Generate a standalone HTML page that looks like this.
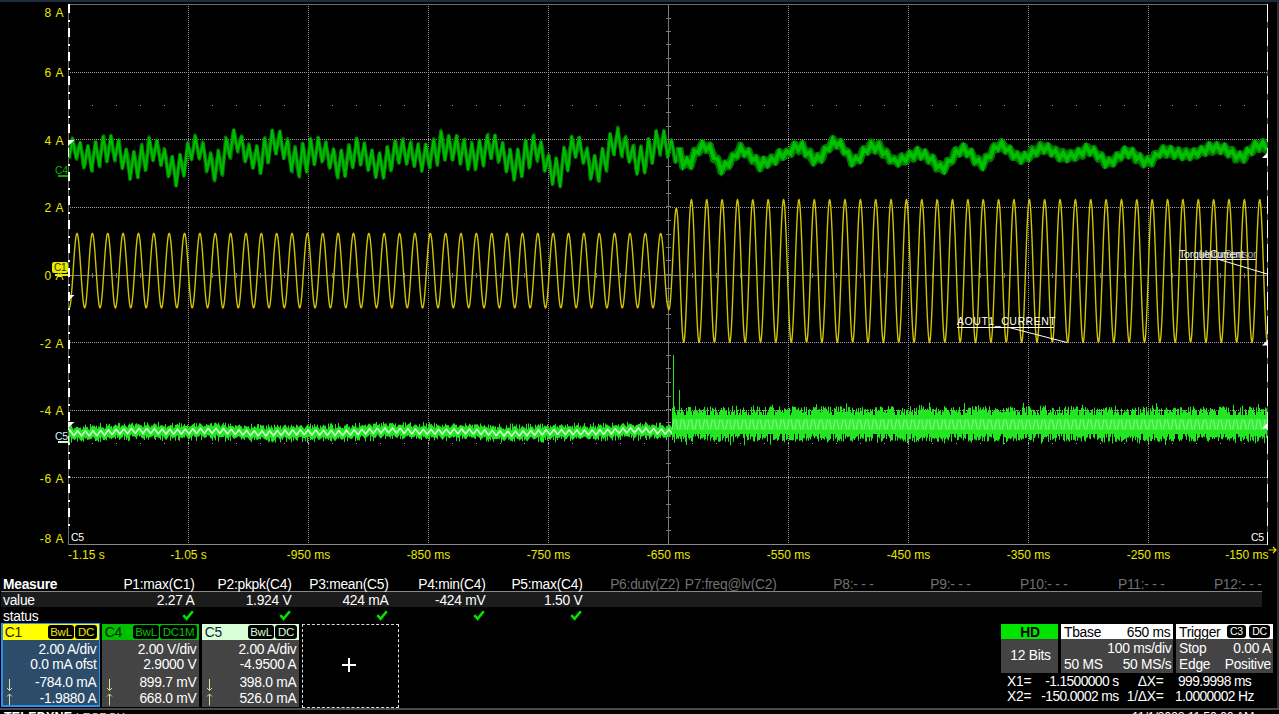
<!DOCTYPE html>
<html><head><meta charset="utf-8">
<style>
*{margin:0;padding:0;box-sizing:border-box}
html,body{width:1279px;height:714px;background:#000;overflow:hidden}
body{position:relative;font-family:"Liberation Sans",sans-serif;color:#fff}
.a{position:absolute;white-space:nowrap;line-height:1;letter-spacing:-0.25px}
.yl{color:#e6e600;font-size:12.5px}
.r{text-align:right}
.c{text-align:center}
svg{position:absolute;left:0;top:0}
.mh{font-size:13px;color:#fff}
.mg{color:#6a6a6a}
.box{position:absolute;top:623px;height:85px}
.hd{position:absolute;left:0;right:0;top:0;height:16px}
.bd{position:absolute;left:0;right:0;top:16px;bottom:0;background:#444}
.bg{position:absolute;top:2px;height:14px;background:#000;border-radius:3px;font-size:11.5px;line-height:14px;text-align:center}
.t13{font-size:13px}
</style></head><body>
<div class="a" style="left:0;top:0;width:1279px;height:2px;background:#1e2d3d"></div>
<div class="a" style="left:1277px;top:2px;width:2px;height:706px;background:#2e2e2e"></div>
<svg width="1279" height="560" viewBox="0 0 1279 560" shape-rendering="crispEdges">
<line x1="70" y1="72.5" x2="1267" y2="72.5" stroke="#a0a0a0" stroke-width="1" stroke-dasharray="1 1"/>
<line x1="70" y1="139.5" x2="1267" y2="139.5" stroke="#a0a0a0" stroke-width="1" stroke-dasharray="1 1"/>
<line x1="70" y1="207.5" x2="1267" y2="207.5" stroke="#a0a0a0" stroke-width="1" stroke-dasharray="1 1"/>
<line x1="70" y1="342.5" x2="1267" y2="342.5" stroke="#a0a0a0" stroke-width="1" stroke-dasharray="1 1"/>
<line x1="70" y1="410.5" x2="1267" y2="410.5" stroke="#a0a0a0" stroke-width="1" stroke-dasharray="1 1"/>
<line x1="70" y1="477.5" x2="1267" y2="477.5" stroke="#a0a0a0" stroke-width="1" stroke-dasharray="1 1"/>
<line x1="188.5" y1="6" x2="188.5" y2="544" stroke="#a0a0a0" stroke-width="1" stroke-dasharray="1 1"/>
<line x1="308.5" y1="6" x2="308.5" y2="544" stroke="#a0a0a0" stroke-width="1" stroke-dasharray="1 1"/>
<line x1="428.5" y1="6" x2="428.5" y2="544" stroke="#a0a0a0" stroke-width="1" stroke-dasharray="1 1"/>
<line x1="548.5" y1="6" x2="548.5" y2="544" stroke="#a0a0a0" stroke-width="1" stroke-dasharray="1 1"/>
<line x1="788.5" y1="6" x2="788.5" y2="544" stroke="#a0a0a0" stroke-width="1" stroke-dasharray="1 1"/>
<line x1="908.5" y1="6" x2="908.5" y2="544" stroke="#a0a0a0" stroke-width="1" stroke-dasharray="1 1"/>
<line x1="1028.5" y1="6" x2="1028.5" y2="544" stroke="#a0a0a0" stroke-width="1" stroke-dasharray="1 1"/>
<line x1="1148.5" y1="6" x2="1148.5" y2="544" stroke="#a0a0a0" stroke-width="1" stroke-dasharray="1 1"/>
<rect x="92" y="105" width="1" height="1" fill="#a0a0a0"/>
<rect x="116" y="105" width="1" height="1" fill="#a0a0a0"/>
<rect x="140" y="105" width="1" height="1" fill="#a0a0a0"/>
<rect x="164" y="105" width="1" height="1" fill="#a0a0a0"/>
<rect x="188" y="105" width="1" height="1" fill="#a0a0a0"/>
<rect x="212" y="105" width="1" height="1" fill="#a0a0a0"/>
<rect x="236" y="105" width="1" height="1" fill="#a0a0a0"/>
<rect x="260" y="105" width="1" height="1" fill="#a0a0a0"/>
<rect x="284" y="105" width="1" height="1" fill="#a0a0a0"/>
<rect x="308" y="105" width="1" height="1" fill="#a0a0a0"/>
<rect x="332" y="105" width="1" height="1" fill="#a0a0a0"/>
<rect x="356" y="105" width="1" height="1" fill="#a0a0a0"/>
<rect x="380" y="105" width="1" height="1" fill="#a0a0a0"/>
<rect x="404" y="105" width="1" height="1" fill="#a0a0a0"/>
<rect x="428" y="105" width="1" height="1" fill="#a0a0a0"/>
<rect x="452" y="105" width="1" height="1" fill="#a0a0a0"/>
<rect x="476" y="105" width="1" height="1" fill="#a0a0a0"/>
<rect x="500" y="105" width="1" height="1" fill="#a0a0a0"/>
<rect x="524" y="105" width="1" height="1" fill="#a0a0a0"/>
<rect x="548" y="105" width="1" height="1" fill="#a0a0a0"/>
<rect x="572" y="105" width="1" height="1" fill="#a0a0a0"/>
<rect x="596" y="105" width="1" height="1" fill="#a0a0a0"/>
<rect x="620" y="105" width="1" height="1" fill="#a0a0a0"/>
<rect x="644" y="105" width="1" height="1" fill="#a0a0a0"/>
<rect x="668" y="105" width="1" height="1" fill="#a0a0a0"/>
<rect x="692" y="105" width="1" height="1" fill="#a0a0a0"/>
<rect x="716" y="105" width="1" height="1" fill="#a0a0a0"/>
<rect x="740" y="105" width="1" height="1" fill="#a0a0a0"/>
<rect x="764" y="105" width="1" height="1" fill="#a0a0a0"/>
<rect x="788" y="105" width="1" height="1" fill="#a0a0a0"/>
<rect x="812" y="105" width="1" height="1" fill="#a0a0a0"/>
<rect x="836" y="105" width="1" height="1" fill="#a0a0a0"/>
<rect x="860" y="105" width="1" height="1" fill="#a0a0a0"/>
<rect x="884" y="105" width="1" height="1" fill="#a0a0a0"/>
<rect x="908" y="105" width="1" height="1" fill="#a0a0a0"/>
<rect x="932" y="105" width="1" height="1" fill="#a0a0a0"/>
<rect x="956" y="105" width="1" height="1" fill="#a0a0a0"/>
<rect x="980" y="105" width="1" height="1" fill="#a0a0a0"/>
<rect x="1004" y="105" width="1" height="1" fill="#a0a0a0"/>
<rect x="1028" y="105" width="1" height="1" fill="#a0a0a0"/>
<rect x="1052" y="105" width="1" height="1" fill="#a0a0a0"/>
<rect x="1076" y="105" width="1" height="1" fill="#a0a0a0"/>
<rect x="1100" y="105" width="1" height="1" fill="#a0a0a0"/>
<rect x="1124" y="105" width="1" height="1" fill="#a0a0a0"/>
<rect x="1148" y="105" width="1" height="1" fill="#a0a0a0"/>
<rect x="1172" y="105" width="1" height="1" fill="#a0a0a0"/>
<rect x="1196" y="105" width="1" height="1" fill="#a0a0a0"/>
<rect x="1220" y="105" width="1" height="1" fill="#a0a0a0"/>
<rect x="1244" y="105" width="1" height="1" fill="#a0a0a0"/>
<rect x="92" y="443" width="1" height="1" fill="#a0a0a0"/>
<rect x="116" y="443" width="1" height="1" fill="#a0a0a0"/>
<rect x="140" y="443" width="1" height="1" fill="#a0a0a0"/>
<rect x="164" y="443" width="1" height="1" fill="#a0a0a0"/>
<rect x="188" y="443" width="1" height="1" fill="#a0a0a0"/>
<rect x="212" y="443" width="1" height="1" fill="#a0a0a0"/>
<rect x="236" y="443" width="1" height="1" fill="#a0a0a0"/>
<rect x="260" y="443" width="1" height="1" fill="#a0a0a0"/>
<rect x="284" y="443" width="1" height="1" fill="#a0a0a0"/>
<rect x="308" y="443" width="1" height="1" fill="#a0a0a0"/>
<rect x="332" y="443" width="1" height="1" fill="#a0a0a0"/>
<rect x="356" y="443" width="1" height="1" fill="#a0a0a0"/>
<rect x="380" y="443" width="1" height="1" fill="#a0a0a0"/>
<rect x="404" y="443" width="1" height="1" fill="#a0a0a0"/>
<rect x="428" y="443" width="1" height="1" fill="#a0a0a0"/>
<rect x="452" y="443" width="1" height="1" fill="#a0a0a0"/>
<rect x="476" y="443" width="1" height="1" fill="#a0a0a0"/>
<rect x="500" y="443" width="1" height="1" fill="#a0a0a0"/>
<rect x="524" y="443" width="1" height="1" fill="#a0a0a0"/>
<rect x="548" y="443" width="1" height="1" fill="#a0a0a0"/>
<rect x="572" y="443" width="1" height="1" fill="#a0a0a0"/>
<rect x="596" y="443" width="1" height="1" fill="#a0a0a0"/>
<rect x="620" y="443" width="1" height="1" fill="#a0a0a0"/>
<rect x="644" y="443" width="1" height="1" fill="#a0a0a0"/>
<rect x="668" y="443" width="1" height="1" fill="#a0a0a0"/>
<rect x="692" y="443" width="1" height="1" fill="#a0a0a0"/>
<rect x="716" y="443" width="1" height="1" fill="#a0a0a0"/>
<rect x="740" y="443" width="1" height="1" fill="#a0a0a0"/>
<rect x="764" y="443" width="1" height="1" fill="#a0a0a0"/>
<rect x="788" y="443" width="1" height="1" fill="#a0a0a0"/>
<rect x="812" y="443" width="1" height="1" fill="#a0a0a0"/>
<rect x="836" y="443" width="1" height="1" fill="#a0a0a0"/>
<rect x="860" y="443" width="1" height="1" fill="#a0a0a0"/>
<rect x="884" y="443" width="1" height="1" fill="#a0a0a0"/>
<rect x="908" y="443" width="1" height="1" fill="#a0a0a0"/>
<rect x="932" y="443" width="1" height="1" fill="#a0a0a0"/>
<rect x="956" y="443" width="1" height="1" fill="#a0a0a0"/>
<rect x="980" y="443" width="1" height="1" fill="#a0a0a0"/>
<rect x="1004" y="443" width="1" height="1" fill="#a0a0a0"/>
<rect x="1028" y="443" width="1" height="1" fill="#a0a0a0"/>
<rect x="1052" y="443" width="1" height="1" fill="#a0a0a0"/>
<rect x="1076" y="443" width="1" height="1" fill="#a0a0a0"/>
<rect x="1100" y="443" width="1" height="1" fill="#a0a0a0"/>
<rect x="1124" y="443" width="1" height="1" fill="#a0a0a0"/>
<rect x="1148" y="443" width="1" height="1" fill="#a0a0a0"/>
<rect x="1172" y="443" width="1" height="1" fill="#a0a0a0"/>
<rect x="1196" y="443" width="1" height="1" fill="#a0a0a0"/>
<rect x="1220" y="443" width="1" height="1" fill="#a0a0a0"/>
<rect x="1244" y="443" width="1" height="1" fill="#a0a0a0"/>
<rect x="69" y="275" width="1198" height="1" fill="#7a7a7a"/>
<rect x="668" y="5" width="1" height="539" fill="#7a7a7a"/>
<rect x="666" y="18" width="5" height="1" fill="#7a7a7a"/>
<rect x="666" y="31" width="5" height="1" fill="#7a7a7a"/>
<rect x="666" y="44" width="5" height="1" fill="#7a7a7a"/>
<rect x="666" y="58" width="5" height="1" fill="#7a7a7a"/>
<rect x="666" y="72" width="5" height="1" fill="#7a7a7a"/>
<rect x="666" y="85" width="5" height="1" fill="#7a7a7a"/>
<rect x="666" y="98" width="5" height="1" fill="#7a7a7a"/>
<rect x="666" y="112" width="5" height="1" fill="#7a7a7a"/>
<rect x="666" y="126" width="5" height="1" fill="#7a7a7a"/>
<rect x="666" y="139" width="5" height="1" fill="#7a7a7a"/>
<rect x="666" y="152" width="5" height="1" fill="#7a7a7a"/>
<rect x="666" y="166" width="5" height="1" fill="#7a7a7a"/>
<rect x="666" y="180" width="5" height="1" fill="#7a7a7a"/>
<rect x="666" y="193" width="5" height="1" fill="#7a7a7a"/>
<rect x="666" y="206" width="5" height="1" fill="#7a7a7a"/>
<rect x="666" y="220" width="5" height="1" fill="#7a7a7a"/>
<rect x="666" y="234" width="5" height="1" fill="#7a7a7a"/>
<rect x="666" y="247" width="5" height="1" fill="#7a7a7a"/>
<rect x="666" y="260" width="5" height="1" fill="#7a7a7a"/>
<rect x="666" y="274" width="5" height="1" fill="#7a7a7a"/>
<rect x="666" y="288" width="5" height="1" fill="#7a7a7a"/>
<rect x="666" y="301" width="5" height="1" fill="#7a7a7a"/>
<rect x="666" y="314" width="5" height="1" fill="#7a7a7a"/>
<rect x="666" y="328" width="5" height="1" fill="#7a7a7a"/>
<rect x="666" y="342" width="5" height="1" fill="#7a7a7a"/>
<rect x="666" y="355" width="5" height="1" fill="#7a7a7a"/>
<rect x="666" y="368" width="5" height="1" fill="#7a7a7a"/>
<rect x="666" y="382" width="5" height="1" fill="#7a7a7a"/>
<rect x="666" y="396" width="5" height="1" fill="#7a7a7a"/>
<rect x="666" y="409" width="5" height="1" fill="#7a7a7a"/>
<rect x="666" y="422" width="5" height="1" fill="#7a7a7a"/>
<rect x="666" y="436" width="5" height="1" fill="#7a7a7a"/>
<rect x="666" y="450" width="5" height="1" fill="#7a7a7a"/>
<rect x="666" y="463" width="5" height="1" fill="#7a7a7a"/>
<rect x="666" y="476" width="5" height="1" fill="#7a7a7a"/>
<rect x="666" y="490" width="5" height="1" fill="#7a7a7a"/>
<rect x="666" y="504" width="5" height="1" fill="#7a7a7a"/>
<rect x="666" y="517" width="5" height="1" fill="#7a7a7a"/>
<rect x="666" y="530" width="5" height="1" fill="#7a7a7a"/>
<rect x="92" y="273" width="1" height="5" fill="#7a7a7a"/>
<rect x="116" y="273" width="1" height="5" fill="#7a7a7a"/>
<rect x="140" y="273" width="1" height="5" fill="#7a7a7a"/>
<rect x="164" y="273" width="1" height="5" fill="#7a7a7a"/>
<rect x="188" y="273" width="1" height="5" fill="#7a7a7a"/>
<rect x="212" y="273" width="1" height="5" fill="#7a7a7a"/>
<rect x="236" y="273" width="1" height="5" fill="#7a7a7a"/>
<rect x="260" y="273" width="1" height="5" fill="#7a7a7a"/>
<rect x="284" y="273" width="1" height="5" fill="#7a7a7a"/>
<rect x="308" y="273" width="1" height="5" fill="#7a7a7a"/>
<rect x="332" y="273" width="1" height="5" fill="#7a7a7a"/>
<rect x="356" y="273" width="1" height="5" fill="#7a7a7a"/>
<rect x="380" y="273" width="1" height="5" fill="#7a7a7a"/>
<rect x="404" y="273" width="1" height="5" fill="#7a7a7a"/>
<rect x="428" y="273" width="1" height="5" fill="#7a7a7a"/>
<rect x="452" y="273" width="1" height="5" fill="#7a7a7a"/>
<rect x="476" y="273" width="1" height="5" fill="#7a7a7a"/>
<rect x="500" y="273" width="1" height="5" fill="#7a7a7a"/>
<rect x="524" y="273" width="1" height="5" fill="#7a7a7a"/>
<rect x="548" y="273" width="1" height="5" fill="#7a7a7a"/>
<rect x="572" y="273" width="1" height="5" fill="#7a7a7a"/>
<rect x="596" y="273" width="1" height="5" fill="#7a7a7a"/>
<rect x="620" y="273" width="1" height="5" fill="#7a7a7a"/>
<rect x="644" y="273" width="1" height="5" fill="#7a7a7a"/>
<rect x="668" y="273" width="1" height="5" fill="#7a7a7a"/>
<rect x="692" y="273" width="1" height="5" fill="#7a7a7a"/>
<rect x="716" y="273" width="1" height="5" fill="#7a7a7a"/>
<rect x="740" y="273" width="1" height="5" fill="#7a7a7a"/>
<rect x="764" y="273" width="1" height="5" fill="#7a7a7a"/>
<rect x="788" y="273" width="1" height="5" fill="#7a7a7a"/>
<rect x="812" y="273" width="1" height="5" fill="#7a7a7a"/>
<rect x="836" y="273" width="1" height="5" fill="#7a7a7a"/>
<rect x="860" y="273" width="1" height="5" fill="#7a7a7a"/>
<rect x="884" y="273" width="1" height="5" fill="#7a7a7a"/>
<rect x="908" y="273" width="1" height="5" fill="#7a7a7a"/>
<rect x="932" y="273" width="1" height="5" fill="#7a7a7a"/>
<rect x="956" y="273" width="1" height="5" fill="#7a7a7a"/>
<rect x="980" y="273" width="1" height="5" fill="#7a7a7a"/>
<rect x="1004" y="273" width="1" height="5" fill="#7a7a7a"/>
<rect x="1028" y="273" width="1" height="5" fill="#7a7a7a"/>
<rect x="1052" y="273" width="1" height="5" fill="#7a7a7a"/>
<rect x="1076" y="273" width="1" height="5" fill="#7a7a7a"/>
<rect x="1100" y="273" width="1" height="5" fill="#7a7a7a"/>
<rect x="1124" y="273" width="1" height="5" fill="#7a7a7a"/>
<rect x="1148" y="273" width="1" height="5" fill="#7a7a7a"/>
<rect x="1172" y="273" width="1" height="5" fill="#7a7a7a"/>
<rect x="1196" y="273" width="1" height="5" fill="#7a7a7a"/>
<rect x="1220" y="273" width="1" height="5" fill="#7a7a7a"/>
<rect x="1244" y="273" width="1" height="5" fill="#7a7a7a"/>
<rect x="68" y="4" width="1200" height="1" fill="#6e6e6e"/>
<rect x="68" y="544" width="1200" height="1" fill="#8a8a8a"/>
<rect x="68" y="4" width="1" height="541" fill="#6e6e6e"/>
<rect x="1267" y="4" width="1" height="541" fill="#ffffff"/>
<rect x="68" y="4" width="2" height="8.5" fill="#fff"/>
<rect x="68" y="19.5" width="2" height="2.5" fill="#fff"/>
<rect x="68" y="28" width="2" height="8.5" fill="#fff"/>
<rect x="68" y="43.5" width="2" height="2.5" fill="#fff"/>
<rect x="68" y="52" width="2" height="8.5" fill="#fff"/>
<rect x="68" y="67.5" width="2" height="2.5" fill="#fff"/>
<rect x="68" y="76" width="2" height="8.5" fill="#fff"/>
<rect x="68" y="91.5" width="2" height="2.5" fill="#fff"/>
<rect x="68" y="100" width="2" height="8.5" fill="#fff"/>
<rect x="68" y="115.5" width="2" height="2.5" fill="#fff"/>
<rect x="68" y="124" width="2" height="8.5" fill="#fff"/>
<rect x="68" y="139.5" width="2" height="2.5" fill="#fff"/>
<rect x="68" y="148" width="2" height="8.5" fill="#fff"/>
<rect x="68" y="163.5" width="2" height="2.5" fill="#fff"/>
<rect x="68" y="172" width="2" height="8.5" fill="#fff"/>
<rect x="68" y="187.5" width="2" height="2.5" fill="#fff"/>
<rect x="68" y="196" width="2" height="8.5" fill="#fff"/>
<rect x="68" y="211.5" width="2" height="2.5" fill="#fff"/>
<rect x="68" y="220" width="2" height="8.5" fill="#fff"/>
<rect x="68" y="235.5" width="2" height="2.5" fill="#fff"/>
<rect x="68" y="244" width="2" height="8.5" fill="#fff"/>
<rect x="68" y="259.5" width="2" height="2.5" fill="#fff"/>
<rect x="68" y="268" width="2" height="8.5" fill="#fff"/>
<rect x="68" y="283.5" width="2" height="2.5" fill="#fff"/>
<rect x="68" y="292" width="2" height="8.5" fill="#fff"/>
<rect x="68" y="307.5" width="2" height="2.5" fill="#fff"/>
<rect x="68" y="316" width="2" height="8.5" fill="#fff"/>
<rect x="68" y="331.5" width="2" height="2.5" fill="#fff"/>
<rect x="68" y="340" width="2" height="8.5" fill="#fff"/>
<rect x="68" y="355.5" width="2" height="2.5" fill="#fff"/>
<rect x="68" y="364" width="2" height="8.5" fill="#fff"/>
<rect x="68" y="379.5" width="2" height="2.5" fill="#fff"/>
<rect x="68" y="388" width="2" height="8.5" fill="#fff"/>
<rect x="68" y="403.5" width="2" height="2.5" fill="#fff"/>
<rect x="68" y="412" width="2" height="8.5" fill="#fff"/>
<rect x="68" y="427.5" width="2" height="2.5" fill="#fff"/>
<rect x="68" y="436" width="2" height="8.5" fill="#fff"/>
<rect x="68" y="451.5" width="2" height="2.5" fill="#fff"/>
<rect x="68" y="460" width="2" height="8.5" fill="#fff"/>
<rect x="68" y="475.5" width="2" height="2.5" fill="#fff"/>
<rect x="68" y="484" width="2" height="8.5" fill="#fff"/>
<rect x="68" y="499.5" width="2" height="2.5" fill="#fff"/>
<rect x="68" y="508" width="2" height="8.5" fill="#fff"/>
<rect x="68" y="523.5" width="2" height="2.5" fill="#fff"/>
<rect x="1267" y="22" width="1" height="6" fill="#555"/>
<rect x="1267" y="46" width="1" height="6" fill="#555"/>
<rect x="1267" y="70" width="1" height="6" fill="#555"/>
<rect x="1267" y="94" width="1" height="6" fill="#555"/>
<rect x="1267" y="118" width="1" height="6" fill="#555"/>
<rect x="1267" y="142" width="1" height="6" fill="#555"/>
<rect x="1267" y="166" width="1" height="6" fill="#555"/>
<rect x="1267" y="190" width="1" height="6" fill="#555"/>
<rect x="1267" y="214" width="1" height="6" fill="#555"/>
<rect x="1267" y="238" width="1" height="6" fill="#555"/>
<rect x="1267" y="262" width="1" height="6" fill="#555"/>
<rect x="1267" y="286" width="1" height="6" fill="#555"/>
<rect x="1267" y="310" width="1" height="6" fill="#555"/>
<rect x="1267" y="334" width="1" height="6" fill="#555"/>
<rect x="1267" y="358" width="1" height="6" fill="#555"/>
<rect x="1267" y="382" width="1" height="6" fill="#555"/>
<rect x="1267" y="406" width="1" height="6" fill="#555"/>
<rect x="1267" y="430" width="1" height="6" fill="#555"/>
<rect x="1267" y="454" width="1" height="6" fill="#555"/>
<rect x="1267" y="478" width="1" height="6" fill="#555"/>
<rect x="1267" y="502" width="1" height="6" fill="#555"/>
<rect x="1267" y="526" width="1" height="6" fill="#555"/>
</svg>
<svg width="1279" height="560" viewBox="0 0 1279 560">
<defs><clipPath id="pc"><rect x="69" y="5" width="1198" height="539"/></clipPath></defs>
<g clip-path="url(#pc)">
<polyline points="69,307.6 69.5,307.8 70,306.5 70.5,303.6 71,299.4 71.5,294 72,287.6 72.5,280.5 73,273 73.5,265.4 74,258 74.5,251.2 75,245.1 75.5,240.1 76,236.4 76.5,234.1 77,233.3 77.5,234.1 78,236.4 78.5,240.1 79,245.1 79.5,251.2 80,258 80.5,265.4 81,273 81.5,280.5 82,287.6 82.5,294 83,299.4 83.5,303.6 84,306.5 84.5,307.8 85,307.6 85.5,305.8 86,302.6 86.5,298 87,292.3 87.5,285.7 88,278.5 88.5,270.9 89,263.3 89.5,256 90,249.4 90.5,243.6 91,238.9 91.5,235.6 92,233.7 92.5,233.4 93,234.6 93.5,237.3 94,241.4 94.5,246.7 95,253 95.5,260.1 96,267.6 96.5,275.2 97,282.6 97.5,289.5 98,295.6 98.5,300.7 99,304.6 99.5,307 100,307.9 100.5,307.2 101,305.1 101.5,301.4 102,296.5 102.5,290.6 103,283.7 103.5,276.4 104,268.8 104.5,261.2 105,254.1 105.5,247.7 106,242.2 106.5,237.8 107,234.9 107.5,233.5 108,233.5 108.5,235.2 109,238.3 109.5,242.8 110,248.4 110.5,254.9 111,262.1 111.5,269.7 112,277.3 112.5,284.6 113,291.3 113.5,297.2 114,301.9 114.5,305.4 115,307.4 115.5,307.9 116,306.8 116.5,304.2 117,300.2 117.5,295 118,288.7 118.5,281.7 119,274.3 119.5,266.6 120,259.2 120.5,252.2 121,246 121.5,240.8 122,236.9 122.5,234.3 123,233.3 123.5,233.8 124,235.9 124.5,239.4 125,244.2 125.5,250.1 126,256.9 126.5,264.2 127,271.8 127.5,279.4 128,286.5 128.5,293.1 129,298.6 129.5,303.1 130,306.1 130.5,307.7 131,307.7 131.5,306.2 132,303.2 132.5,298.8 133,293.3 133.5,286.8 134,279.7 134.5,272.1 135,264.5 135.5,257.2 136,250.4 136.5,244.4 137,239.6 137.5,236 138,233.9 138.5,233.3 139,234.3 139.5,236.8 140,240.6 140.5,245.8 141,252 141.5,258.9 142,266.3 142.5,274 143,281.4 143.5,288.5 144,294.7 144.5,300 145,304.1 145.5,306.7 146,307.9 146.5,307.5 147,305.5 147.5,302.1 148,297.4 148.5,291.6 149,284.9 149.5,277.6 150,270 150.5,262.4 151,255.2 151.5,248.6 152,243 152.5,238.5 153,235.3 153.5,233.6 154,233.4 154.5,234.8 155,237.7 155.5,242 156,247.4 156.5,253.8 157,260.9 157.5,268.5 158,276.1 158.5,283.5 159,290.3 159.5,296.3 160,301.3 160.5,304.9 161,307.2 161.5,307.9 162,307.1 162.5,304.7 163,300.9 163.5,295.9 164,289.8 164.5,282.9 165,275.5 165.5,267.9 166,260.4 166.5,253.3 167,246.9 167.5,241.6 168,237.4 168.5,234.7 169,233.4 169.5,233.7 170,235.5 170.5,238.8 171,243.4 171.5,249.1 172,255.8 172.5,263 173,270.6 173.5,278.2 174,285.4 174.5,292.1 175,297.8 175.5,302.4 176,305.7 176.5,307.5 177,307.8 177.5,306.5 178,303.8 178.5,299.6 179,294.3 179.5,287.9 180,280.8 180.5,273.3 181,265.7 181.5,258.3 182,251.4 182.5,245.3 183,240.3 183.5,236.5 184,234.1 184.5,233.3 185,234 185.5,236.3 186,239.9 186.5,244.9 187,250.9 187.5,257.7 188,265.1 188.5,272.7 189,280.3 189.5,287.4 190,293.8 190.5,299.2 191,303.5 191.5,306.4 192,307.8 192.5,307.6 193,305.9 193.5,302.7 194,298.2 194.5,292.6 195,286 195.5,278.8 196,271.2 196.5,263.6 197,256.3 197.5,249.6 198,243.8 198.5,239.1 199,235.7 199.5,233.7 200,233.3 200.5,234.5 201,237.1 201.5,241.2 202,246.5 202.5,252.7 203,259.8 203.5,267.2 204,274.9 204.5,282.3 205,289.3 205.5,295.4 206,300.6 206.5,304.4 207,306.9 207.5,307.9 208,307.3 208.5,305.2 209,301.6 209.5,296.8 210,290.8 210.5,284 211,276.7 211.5,269.1 212,261.5 212.5,254.4 213,247.9 213.5,242.4 214,238 214.5,235 215,233.5 215.5,233.5 216,235.1 216.5,238.1 217,242.6 217.5,248.1 218,254.7 218.5,261.8 219,269.4 219.5,277 220,284.3 220.5,291.1 221,297 221.5,301.8 222,305.3 222.5,307.4 223,307.9 223.5,306.9 224,304.3 224.5,300.4 225,295.2 225.5,289 226,282 226.5,274.6 227,266.9 227.5,259.5 228,252.5 228.5,246.2 229,241 229.5,237 230,234.4 230.5,233.3 231,233.8 231.5,235.8 232,239.3 232.5,244 233,249.9 233.5,256.6 234,263.9 234.5,271.5 235,279.1 235.5,286.3 236,292.8 236.5,298.4 237,302.9 237.5,306 238,307.7 238.5,307.7 239,306.3 239.5,303.4 240,299 240.5,293.5 241,287.1 241.5,280 242,272.4 242.5,264.8 243,257.5 243.5,250.6 244,244.7 244.5,239.8 245,236.1 245.5,234 246,233.3 246.5,234.2 247,236.6 247.5,240.5 248,245.6 248.5,251.7 249,258.6 249.5,266 250,273.6 250.5,281.1 251,288.2 251.5,294.5 252,299.8 252.5,303.9 253,306.6 253.5,307.8 254,307.5 254.5,305.6 255,302.3 255.5,297.6 256,291.8 256.5,285.2 257,277.9 257.5,270.3 258,262.7 258.5,255.5 259,248.9 259.5,243.2 260,238.6 260.5,235.4 261,233.6 261.5,233.4 262,234.7 262.5,237.6 263,241.8 263.5,247.2 264,253.6 264.5,260.7 265,268.2 265.5,275.8 266,283.2 266.5,290 267,296.1 267.5,301.1 268,304.8 268.5,307.1 269,307.9 269.5,307.1 270,304.8 270.5,301.1 271,296.1 271.5,290 272,283.2 272.5,275.8 273,268.2 273.5,260.7 274,253.6 274.5,247.2 275,241.8 275.5,237.6 276,234.7 276.5,233.4 277,233.6 277.5,235.4 278,238.6 278.5,243.2 279,248.9 279.5,255.5 280,262.7 280.5,270.3 281,277.9 281.5,285.2 282,291.8 282.5,297.6 283,302.3 283.5,305.6 284,307.5 284.5,307.8 285,306.6 285.5,303.9 286,299.8 286.5,294.5 287,288.2 287.5,281.1 288,273.6 288.5,266 289,258.6 289.5,251.7 290,245.6 290.5,240.5 291,236.6 291.5,234.2 292,233.3 292.5,234 293,236.1 293.5,239.8 294,244.7 294.5,250.6 295,257.5 295.5,264.8 296,272.4 296.5,280 297,287.1 297.5,293.5 298,299 298.5,303.4 299,306.3 299.5,307.7 300,307.7 300.5,306 301,302.9 301.5,298.4 302,292.8 302.5,286.3 303,279.1 303.5,271.5 304,263.9 304.5,256.6 305,249.9 305.5,244 306,239.3 306.5,235.8 307,233.8 307.5,233.3 308,234.4 308.5,237 309,241 309.5,246.2 310,252.5 310.5,259.5 311,266.9 311.5,274.6 312,282 312.5,289 313,295.2 313.5,300.4 314,304.3 314.5,306.9 315,307.9 315.5,307.4 316,305.3 316.5,301.8 317,297 317.5,291.1 318,284.3 318.5,277 319,269.4 319.5,261.8 320,254.7 320.5,248.1 321,242.6 321.5,238.1 322,235.1 322.5,233.5 323,233.5 323.5,235 324,238 324.5,242.4 325,247.9 325.5,254.4 326,261.5 326.5,269.1 327,276.7 327.5,284 328,290.8 328.5,296.8 329,301.6 329.5,305.2 330,307.3 330.5,307.9 331,306.9 331.5,304.4 332,300.6 332.5,295.4 333,289.2 333.5,282.3 334,274.9 334.5,267.2 335,259.8 335.5,252.7 336,246.5 336.5,241.2 337,237.1 337.5,234.5 338,233.3 338.5,233.7 339,235.7 339.5,239.1 340,243.8 340.5,249.6 341,256.3 341.5,263.6 342,271.2 342.5,278.8 343,286 343.5,292.6 344,298.2 344.5,302.7 345,305.9 345.5,307.6 346,307.8 346.5,306.4 347,303.5 347.5,299.2 348,293.8 348.5,287.4 349,280.3 349.5,272.7 350,265.1 350.5,257.7 351,250.9 351.5,244.9 352,239.9 352.5,236.3 353,234 353.5,233.3 354,234.1 354.5,236.5 355,240.3 355.5,245.3 356,251.4 356.5,258.3 357,265.7 357.5,273.3 358,280.8 358.5,287.9 359,294.3 359.5,299.6 360,303.8 360.5,306.5 361,307.8 361.5,307.5 362,305.7 362.5,302.4 363,297.8 363.5,292.1 364,285.4 364.5,278.2 365,270.6 365.5,263 366,255.8 366.5,249.1 367,243.4 367.5,238.8 368,235.5 368.5,233.7 369,233.4 369.5,234.7 370,237.4 370.5,241.6 371,246.9 371.5,253.3 372,260.4 372.5,267.9 373,275.5 373.5,282.9 374,289.8 374.5,295.9 375,300.9 375.5,304.7 376,307.1 376.5,307.9 377,307.2 377.5,304.9 378,301.3 378.5,296.3 379,290.3 379.5,283.5 380,276.1 380.5,268.5 381,260.9 381.5,253.8 382,247.4 382.5,242 383,237.7 383.5,234.8 384,233.4 384.5,233.6 385,235.3 385.5,238.5 386,243 386.5,248.6 387,255.2 387.5,262.4 388,270 388.5,277.6 389,284.9 389.5,291.6 390,297.4 390.5,302.1 391,305.5 391.5,307.5 392,307.9 392.5,306.7 393,304.1 393.5,300 394,294.7 394.5,288.5 395,281.4 395.5,274 396,266.3 396.5,258.9 397,252 397.5,245.8 398,240.6 398.5,236.8 399,234.3 399.5,233.3 400,233.9 400.5,236 401,239.6 401.5,244.4 402,250.4 402.5,257.2 403,264.5 403.5,272.1 404,279.7 404.5,286.8 405,293.3 405.5,298.8 406,303.2 406.5,306.2 407,307.7 407.5,307.7 408,306.1 408.5,303.1 409,298.6 409.5,293.1 410,286.5 410.5,279.4 411,271.8 411.5,264.2 412,256.9 412.5,250.1 413,244.2 413.5,239.4 414,235.9 414.5,233.8 415,233.3 415.5,234.3 416,236.9 416.5,240.8 417,246 417.5,252.2 418,259.2 418.5,266.6 419,274.3 419.5,281.7 420,288.7 420.5,295 421,300.2 421.5,304.2 422,306.8 422.5,307.9 423,307.4 423.5,305.4 424,301.9 424.5,297.2 425,291.3 425.5,284.6 426,277.3 426.5,269.7 427,262.1 427.5,254.9 428,248.4 428.5,242.8 429,238.3 429.5,235.2 430,233.5 430.5,233.5 431,234.9 431.5,237.8 432,242.2 432.5,247.7 433,254.1 433.5,261.2 434,268.8 434.5,276.4 435,283.7 435.5,290.6 436,296.5 436.5,301.4 437,305.1 437.5,307.2 438,307.9 438.5,307 439,304.6 439.5,300.7 440,295.6 440.5,289.5 441,282.6 441.5,275.2 442,267.6 442.5,260.1 443,253 443.5,246.7 444,241.4 444.5,237.3 445,234.6 445.5,233.4 446,233.7 446.5,235.6 447,238.9 447.5,243.6 448,249.4 448.5,256 449,263.3 449.5,270.9 450,278.5 450.5,285.7 451,292.3 451.5,298 452,302.6 452.5,305.8 453,307.6 453.5,307.8 454,306.5 454.5,303.6 455,299.4 455.5,294 456,287.6 456.5,280.5 457,273 457.5,265.4 458,258 458.5,251.2 459,245.1 459.5,240.1 460,236.4 460.5,234.1 461,233.3 461.5,234.1 462,236.4 462.5,240.1 463,245.1 463.5,251.2 464,258 464.5,265.4 465,273 465.5,280.5 466,287.6 466.5,294 467,299.4 467.5,303.6 468,306.5 468.5,307.8 469,307.6 469.5,305.8 470,302.6 470.5,298 471,292.3 471.5,285.7 472,278.5 472.5,270.9 473,263.3 473.5,256 474,249.4 474.5,243.6 475,238.9 475.5,235.6 476,233.7 476.5,233.4 477,234.6 477.5,237.3 478,241.4 478.5,246.7 479,253 479.5,260.1 480,267.6 480.5,275.2 481,282.6 481.5,289.5 482,295.6 482.5,300.7 483,304.6 483.5,307 484,307.9 484.5,307.2 485,305.1 485.5,301.4 486,296.5 486.5,290.6 487,283.7 487.5,276.4 488,268.8 488.5,261.2 489,254.1 489.5,247.7 490,242.2 490.5,237.8 491,234.9 491.5,233.5 492,233.5 492.5,235.2 493,238.3 493.5,242.8 494,248.4 494.5,254.9 495,262.1 495.5,269.7 496,277.3 496.5,284.6 497,291.3 497.5,297.2 498,301.9 498.5,305.4 499,307.4 499.5,307.9 500,306.8 500.5,304.2 501,300.2 501.5,295 502,288.7 502.5,281.7 503,274.3 503.5,266.6 504,259.2 504.5,252.2 505,246 505.5,240.8 506,236.9 506.5,234.3 507,233.3 507.5,233.8 508,235.9 508.5,239.4 509,244.2 509.5,250.1 510,256.9 510.5,264.2 511,271.8 511.5,279.4 512,286.5 512.5,293.1 513,298.6 513.5,303.1 514,306.1 514.5,307.7 515,307.7 515.5,306.2 516,303.2 516.5,298.8 517,293.3 517.5,286.8 518,279.7 518.5,272.1 519,264.5 519.5,257.2 520,250.4 520.5,244.4 521,239.6 521.5,236 522,233.9 522.5,233.3 523,234.3 523.5,236.8 524,240.6 524.5,245.8 525,252 525.5,258.9 526,266.3 526.5,274 527,281.4 527.5,288.5 528,294.7 528.5,300 529,304.1 529.5,306.7 530,307.9 530.5,307.5 531,305.5 531.5,302.1 532,297.4 532.5,291.6 533,284.9 533.5,277.6 534,270 534.5,262.4 535,255.2 535.5,248.6 536,243 536.5,238.5 537,235.3 537.5,233.6 538,233.4 538.5,234.8 539,237.7 539.5,242 540,247.4 540.5,253.8 541,260.9 541.5,268.5 542,276.1 542.5,283.5 543,290.3 543.5,296.3 544,301.3 544.5,304.9 545,307.2 545.5,307.9 546,307.1 546.5,304.7 547,300.9 547.5,295.9 548,289.8 548.5,282.9 549,275.5 549.5,267.9 550,260.4 550.5,253.3 551,246.9 551.5,241.6 552,237.4 552.5,234.7 553,233.4 553.5,233.7 554,235.5 554.5,238.8 555,243.4 555.5,249.1 556,255.8 556.5,263 557,270.6 557.5,278.2 558,285.4 558.5,292.1 559,297.8 559.5,302.4 560,305.7 560.5,307.5 561,307.8 561.5,306.5 562,303.8 562.5,299.6 563,294.3 563.5,287.9 564,280.8 564.5,273.3 565,265.7 565.5,258.3 566,251.4 566.5,245.3 567,240.3 567.5,236.5 568,234.1 568.5,233.3 569,234 569.5,236.3 570,239.9 570.5,244.9 571,250.9 571.5,257.7 572,265.1 572.5,272.7 573,280.3 573.5,287.4 574,293.8 574.5,299.2 575,303.5 575.5,306.4 576,307.8 576.5,307.6 577,305.9 577.5,302.7 578,298.2 578.5,292.6 579,286 579.5,278.8 580,271.2 580.5,263.6 581,256.3 581.5,249.6 582,243.8 582.5,239.1 583,235.7 583.5,233.7 584,233.3 584.5,234.5 585,237.1 585.5,241.2 586,246.5 586.5,252.7 587,259.8 587.5,267.2 588,274.9 588.5,282.3 589,289.3 589.5,295.4 590,300.6 590.5,304.4 591,306.9 591.5,307.9 592,307.3 592.5,305.2 593,301.6 593.5,296.8 594,290.8 594.5,284 595,276.7 595.5,269.1 596,261.5 596.5,254.4 597,247.9 597.5,242.4 598,238 598.5,235 599,233.5 599.5,233.5 600,235.1 600.5,238.1 601,242.6 601.5,248.1 602,254.7 602.5,261.8 603,269.4 603.5,277 604,284.3 604.5,291.1 605,297 605.5,301.8 606,305.3 606.5,307.4 607,307.9 607.5,306.9 608,304.3 608.5,300.4 609,295.2 609.5,289 610,282 610.5,274.6 611,266.9 611.5,259.5 612,252.5 612.5,246.2 613,241 613.5,237 614,234.4 614.5,233.3 615,233.8 615.5,235.8 616,239.3 616.5,244 617,249.9 617.5,256.6 618,263.9 618.5,271.5 619,279.1 619.5,286.3 620,292.8 620.5,298.4 621,302.9 621.5,306 622,307.7 622.5,307.7 623,306.3 623.5,303.4 624,299 624.5,293.5 625,287.1 625.5,280 626,272.4 626.5,264.8 627,257.5 627.5,250.6 628,244.7 628.5,239.8 629,236.1 629.5,234 630,233.3 630.5,234.2 631,236.6 631.5,240.5 632,245.6 632.5,251.7 633,258.6 633.5,266 634,273.6 634.5,281.1 635,288.2 635.5,294.5 636,299.8 636.5,303.9 637,306.6 637.5,307.8 638,307.5 638.5,305.6 639,302.3 639.5,297.6 640,291.8 640.5,285.2 641,277.9 641.5,270.3 642,262.7 642.5,255.5 643,248.9 643.5,243.2 644,238.6 644.5,235.4 645,233.6 645.5,233.4 646,234.7 646.5,237.6 647,241.8 647.5,247.2 648,253.6 648.5,260.7 649,268.2 649.5,275.8 650,283.2 650.5,290 651,296.1 651.5,301.1 652,304.8 652.5,307.1 653,307.9 653.5,307.1 654,304.8 654.5,301.1 655,296.1 655.5,290 656,283.2 656.5,275.8 657,268.2 657.5,260.7 658,253.6 658.5,247.2 659,241.8 659.5,237.6 660,234.7 660.5,233.4 661,233.6 661.5,235.4 662,238.6 662.5,243.2 663,248.9 663.5,255.5 664,262.7 664.5,270.3 665,277.9 665.5,285.2 666,291.8 666.5,297.6 667,302.3 667.5,305.6 668,307.5 668.5,309.4 669,309.7 669.5,308.1 670,304.8 670.5,299.6 671,292.7 671.5,284.3 672,274.8 672.5,264.5 673,253.8 673.5,243.2 674,233.2 674.5,224.4 675,217.1 675.5,211.7 676,208.7 676.5,208.3 677,210.6 677.5,215.7 678,223.4 678.5,233.6 679,245.8 679.5,259.9 680,274.5 680.5,288.9 681,302.6 681.5,315 682,325.5 682.5,333.8 683,339.4 683.5,342.2 684,342 684.5,338.9 685,332.9 685.5,324.4 686,313.6 686.5,301 687,287.2 687.5,272.8 688,258.2 688.5,244.2 689,231.3 689.5,220 690,210.9 690.5,204.3 691,200.5 691.5,199.6 692,201.6 692.5,206.6 693,214.3 693.5,224.3 694,236.3 694.5,249.7 695,264 695.5,278.6 696,292.9 696.5,306.2 697,318.1 697.5,328.1 698,335.6 698.5,340.5 699,342.5 699.5,341.4 700,337.5 700.5,330.8 701,321.6 701.5,310.2 702,297.3 702.5,283.2 703,268.7 703.5,254.2 704,240.4 704.5,227.9 705,217.2 705.5,208.8 706,202.9 706.5,199.9 707,199.8 707.5,202.8 708,208.5 708.5,216.9 709,227.5 709.5,239.9 710,253.6 710.5,268.1 711,282.6 711.5,296.7 712,309.7 712.5,321.1 713,330.5 713.5,337.3 714,341.3 714.5,342.5 715,340.6 715.5,335.9 716,328.4 716.5,318.6 717,306.8 717.5,293.4 718,279.2 718.5,264.6 719,250.2 719.5,236.8 720,224.7 720.5,214.6 721,206.9 721.5,201.8 722,199.6 722.5,200.4 723,204.1 723.5,210.6 724,219.6 724.5,230.8 725,243.6 725.5,257.6 726,272.2 726.5,286.7 727,300.5 727.5,313.1 728,324 728.5,332.6 729,338.7 729.5,342 730,342.3 730.5,339.6 731,334.1 731.5,325.9 732,315.4 732.5,303.1 733,289.5 733.5,275.1 734,260.5 734.5,246.4 735,233.2 735.5,221.7 736,212.2 736.5,205.2 737,200.9 737.5,199.5 738,201.1 738.5,205.6 739,212.9 739.5,222.6 740,234.2 740.5,247.5 741,261.7 741.5,276.3 742,290.6 742.5,304.2 743,316.4 743.5,326.6 744,334.6 744.5,339.9 745,342.3 745.5,341.8 746,338.3 746.5,332 747,323.2 747.5,312.2 748,299.4 748.5,285.5 749,271 749.5,256.5 750,242.6 750.5,229.8 751,218.8 751.5,210 752,203.7 752.5,200.2 753,199.7 753.5,202.1 754,207.4 754.5,215.4 755,225.6 755.5,237.8 756,251.4 756.5,265.7 757,280.3 757.5,294.5 758,307.8 758.5,319.4 759,329.1 759.5,336.4 760,340.9 760.5,342.5 761,341.1 761.5,336.8 762,329.8 762.5,320.3 763,308.8 763.5,295.6 764,281.5 764.5,266.9 765,252.5 765.5,238.9 766,226.6 766.5,216.1 767,207.9 767.5,202.4 768,199.7 768.5,200 769,203.3 769.5,209.4 770,218 770.5,228.9 771,241.5 771.5,255.3 772,269.8 772.5,284.4 773,298.4 773.5,311.2 774,322.4 774.5,331.4 775,337.9 775.5,341.6 776,342.4 776.5,340.2 777,335.1 777.5,327.4 778,317.3 778.5,305.2 779,291.8 779.5,277.4 780,262.8 780.5,248.6 781,235.3 781.5,223.4 782,213.6 782.5,206.1 783,201.4 783.5,199.5 784,200.7 784.5,204.7 785,211.5 785.5,220.9 786,232.3 786.5,245.3 787,259.4 787.5,273.9 788,288.4 788.5,302.1 789,314.5 789.5,325.1 790,333.5 790.5,339.2 791,342.2 791.5,342.1 792,339.1 792.5,333.2 793,324.8 793.5,314.1 794,301.6 794.5,287.8 795,273.3 795.5,258.8 796,244.7 796.5,231.8 797,220.4 797.5,211.2 798,204.5 798.5,200.6 799,199.5 799.5,201.5 800,206.4 800.5,213.9 801,223.9 801.5,235.8 802,249.1 802.5,263.4 803,278 803.5,292.3 804,305.7 804.5,317.7 805,327.7 805.5,335.4 806,340.4 806.5,342.4 807,341.5 807.5,337.7 808,331.1 808.5,322 809,310.7 809.5,297.8 810,283.8 810.5,269.2 811,254.8 811.5,241 812,228.4 812.5,217.6 813,209.1 813.5,203.1 814,200 814.5,199.8 815,202.6 815.5,208.2 816,216.5 816.5,227 817,239.4 817.5,253.1 818,267.5 818.5,282.1 819,296.2 819.5,309.3 820,320.7 820.5,330.1 821,337.1 821.5,341.2 822,342.5 822.5,340.8 823,336.1 823.5,328.8 824,319 824.5,307.3 825,294 825.5,279.8 826,265.2 826.5,250.8 827,237.3 827.5,225.2 828,215 828.5,207.1 829,201.9 829.5,199.6 830,200.3 830.5,203.9 831,210.3 831.5,219.2 832,230.3 832.5,243.1 833,257.1 833.5,271.6 834,286.1 834.5,300 835,312.6 835.5,323.6 836,332.3 836.5,338.5 837,341.9 837.5,342.3 838,339.8 838.5,334.3 839,326.3 839.5,315.9 840,303.7 840.5,290.1 841,275.7 841.5,261.1 842,246.9 842.5,233.7 843,222.1 843.5,212.5 844,205.4 844.5,201 845,199.5 845.5,201 846,205.4 846.5,212.5 847,222.1 847.5,233.7 848,246.9 848.5,261.1 849,275.7 849.5,290.1 850,303.7 850.5,315.9 851,326.3 851.5,334.3 852,339.8 852.5,342.3 853,341.9 853.5,338.5 854,332.3 854.5,323.6 855,312.6 855.5,300 856,286.1 856.5,271.6 857,257.1 857.5,243.1 858,230.3 858.5,219.2 859,210.3 859.5,203.9 860,200.3 860.5,199.6 861,201.9 861.5,207.1 862,215 862.5,225.2 863,237.3 863.5,250.8 864,265.2 864.5,279.8 865,294 865.5,307.3 866,319 866.5,328.8 867,336.1 867.5,340.8 868,342.5 868.5,341.2 869,337.1 869.5,330.1 870,320.7 870.5,309.3 871,296.2 871.5,282.1 872,267.5 872.5,253.1 873,239.4 873.5,227 874,216.5 874.5,208.2 875,202.6 875.5,199.8 876,200 876.5,203.1 877,209.1 877.5,217.6 878,228.4 878.5,241 879,254.8 879.5,269.2 880,283.8 880.5,297.8 881,310.7 881.5,322 882,331.1 882.5,337.7 883,341.5 883.5,342.4 884,340.4 884.5,335.4 885,327.7 885.5,317.7 886,305.7 886.5,292.3 887,278 887.5,263.4 888,249.1 888.5,235.8 889,223.9 889.5,213.9 890,206.4 890.5,201.5 891,199.5 891.5,200.6 892,204.5 892.5,211.2 893,220.4 893.5,231.8 894,244.7 894.5,258.8 895,273.3 895.5,287.8 896,301.6 896.5,314.1 897,324.8 897.5,333.2 898,339.1 898.5,342.1 899,342.2 899.5,339.2 900,333.5 900.5,325.1 901,314.5 901.5,302.1 902,288.4 902.5,273.9 903,259.4 903.5,245.3 904,232.3 904.5,220.9 905,211.5 905.5,204.7 906,200.7 906.5,199.5 907,201.4 907.5,206.1 908,213.6 908.5,223.4 909,235.3 909.5,248.6 910,262.8 910.5,277.4 911,291.8 911.5,305.2 912,317.3 912.5,327.4 913,335.1 913.5,340.2 914,342.4 914.5,341.6 915,337.9 915.5,331.4 916,322.4 916.5,311.2 917,298.4 917.5,284.4 918,269.8 918.5,255.3 919,241.5 919.5,228.9 920,218 920.5,209.4 921,203.3 921.5,200 922,199.7 922.5,202.4 923,207.9 923.5,216.1 924,226.6 924.5,238.9 925,252.5 925.5,266.9 926,281.5 926.5,295.6 927,308.8 927.5,320.3 928,329.8 928.5,336.8 929,341.1 929.5,342.5 930,340.9 930.5,336.4 931,329.1 931.5,319.4 932,307.8 932.5,294.5 933,280.3 933.5,265.7 934,251.4 934.5,237.8 935,225.6 935.5,215.4 936,207.4 936.5,202.1 937,199.7 937.5,200.2 938,203.7 938.5,210 939,218.8 939.5,229.8 940,242.6 940.5,256.5 941,271 941.5,285.5 942,299.4 942.5,312.2 943,323.2 943.5,332 944,338.3 944.5,341.8 945,342.3 945.5,339.9 946,334.6 946.5,326.6 947,316.4 947.5,304.2 948,290.6 948.5,276.3 949,261.7 949.5,247.5 950,234.2 950.5,222.6 951,212.9 951.5,205.6 952,201.1 952.5,199.5 953,200.9 953.5,205.2 954,212.2 954.5,221.7 955,233.2 955.5,246.4 956,260.5 956.5,275.1 957,289.5 957.5,303.1 958,315.4 958.5,325.9 959,334.1 959.5,339.6 960,342.3 960.5,342 961,338.7 961.5,332.6 962,324 962.5,313.1 963,300.5 963.5,286.7 964,272.2 964.5,257.6 965,243.6 965.5,230.8 966,219.6 966.5,210.6 967,204.1 967.5,200.4 968,199.6 968.5,201.8 969,206.9 969.5,214.6 970,224.7 970.5,236.8 971,250.2 971.5,264.6 972,279.2 972.5,293.4 973,306.8 973.5,318.6 974,328.4 974.5,335.9 975,340.6 975.5,342.5 976,341.3 976.5,337.3 977,330.5 977.5,321.1 978,309.7 978.5,296.7 979,282.6 979.5,268.1 980,253.6 980.5,239.9 981,227.5 981.5,216.9 982,208.5 982.5,202.8 983,199.8 983.5,199.9 984,202.9 984.5,208.8 985,217.2 985.5,227.9 986,240.4 986.5,254.2 987,268.7 987.5,283.2 988,297.3 988.5,310.2 989,321.6 989.5,330.8 990,337.5 990.5,341.4 991,342.5 991.5,340.5 992,335.6 992.5,328.1 993,318.1 993.5,306.2 994,292.9 994.5,278.6 995,264 995.5,249.7 996,236.3 996.5,224.3 997,214.3 997.5,206.6 998,201.6 998.5,199.6 999,200.5 999.5,204.3 1000,210.9 1000.5,220 1001,231.3 1001.5,244.2 1002,258.2 1002.5,272.8 1003,287.2 1003.5,301 1004,313.6 1004.5,324.4 1005,332.9 1005.5,338.9 1006,342 1006.5,342.2 1007,339.4 1007.5,333.8 1008,325.5 1008.5,315 1009,302.6 1009.5,288.9 1010,274.5 1010.5,259.9 1011,245.8 1011.5,232.7 1012,221.3 1012.5,211.9 1013,204.9 1013.5,200.8 1014,199.5 1014.5,201.2 1015,205.9 1015.5,213.2 1016,223 1016.5,234.7 1017,248 1017.5,262.2 1018,276.8 1018.5,291.2 1019,304.7 1019.5,316.8 1020,327 1020.5,334.9 1021,340.1 1021.5,342.4 1022,341.7 1022.5,338.1 1023,331.7 1023.5,322.8 1024,311.7 1024.5,298.9 1025,284.9 1025.5,270.4 1026,255.9 1026.5,242 1027,229.4 1027.5,218.4 1028,209.7 1028.5,203.5 1029,200.1 1029.5,199.7 1030,202.2 1030.5,207.7 1031,215.7 1031.5,226.1 1032,238.3 1032.5,251.9 1033,266.3 1033.5,280.9 1034,295.1 1034.5,308.3 1035,319.9 1035.5,329.5 1036,336.6 1036.5,341 1037,342.5 1037.5,341 1038,336.6 1038.5,329.5 1039,319.9 1039.5,308.3 1040,295.1 1040.5,280.9 1041,266.3 1041.5,251.9 1042,238.3 1042.5,226.1 1043,215.7 1043.5,207.7 1044,202.2 1044.5,199.7 1045,200.1 1045.5,203.5 1046,209.7 1046.5,218.4 1047,229.4 1047.5,242 1048,255.9 1048.5,270.4 1049,284.9 1049.5,298.9 1050,311.7 1050.5,322.8 1051,331.7 1051.5,338.1 1052,341.7 1052.5,342.4 1053,340.1 1053.5,334.9 1054,327 1054.5,316.8 1055,304.7 1055.5,291.2 1056,276.8 1056.5,262.2 1057,248 1057.5,234.7 1058,223 1058.5,213.2 1059,205.9 1059.5,201.2 1060,199.5 1060.5,200.8 1061,204.9 1061.5,211.9 1062,221.3 1062.5,232.7 1063,245.8 1063.5,259.9 1064,274.5 1064.5,288.9 1065,302.6 1065.5,315 1066,325.5 1066.5,333.8 1067,339.4 1067.5,342.2 1068,342 1068.5,338.9 1069,332.9 1069.5,324.4 1070,313.6 1070.5,301 1071,287.2 1071.5,272.8 1072,258.2 1072.5,244.2 1073,231.3 1073.5,220 1074,210.9 1074.5,204.3 1075,200.5 1075.5,199.6 1076,201.6 1076.5,206.6 1077,214.3 1077.5,224.3 1078,236.3 1078.5,249.7 1079,264 1079.5,278.6 1080,292.9 1080.5,306.2 1081,318.1 1081.5,328.1 1082,335.6 1082.5,340.5 1083,342.5 1083.5,341.4 1084,337.5 1084.5,330.8 1085,321.6 1085.5,310.2 1086,297.3 1086.5,283.2 1087,268.7 1087.5,254.2 1088,240.4 1088.5,227.9 1089,217.2 1089.5,208.8 1090,202.9 1090.5,199.9 1091,199.8 1091.5,202.8 1092,208.5 1092.5,216.9 1093,227.5 1093.5,239.9 1094,253.6 1094.5,268.1 1095,282.6 1095.5,296.7 1096,309.7 1096.5,321.1 1097,330.5 1097.5,337.3 1098,341.3 1098.5,342.5 1099,340.6 1099.5,335.9 1100,328.4 1100.5,318.6 1101,306.7 1101.5,293.4 1102,279.2 1102.5,264.6 1103,250.2 1103.5,236.8 1104,224.7 1104.5,214.6 1105,206.9 1105.5,201.8 1106,199.6 1106.5,200.4 1107,204.1 1107.5,210.6 1108,219.6 1108.5,230.8 1109,243.6 1109.5,257.6 1110,272.2 1110.5,286.7 1111,300.5 1111.5,313.1 1112,324 1112.5,332.6 1113,338.7 1113.5,342 1114,342.3 1114.5,339.6 1115,334.1 1115.5,325.9 1116,315.4 1116.5,303.1 1117,289.5 1117.5,275.1 1118,260.5 1118.5,246.4 1119,233.2 1119.5,221.7 1120,212.2 1120.5,205.2 1121,200.9 1121.5,199.5 1122,201.1 1122.5,205.6 1123,212.9 1123.5,222.6 1124,234.2 1124.5,247.5 1125,261.7 1125.5,276.3 1126,290.6 1126.5,304.2 1127,316.4 1127.5,326.6 1128,334.6 1128.5,339.9 1129,342.3 1129.5,341.8 1130,338.3 1130.5,332 1131,323.2 1131.5,312.2 1132,299.4 1132.5,285.5 1133,271 1133.5,256.5 1134,242.6 1134.5,229.8 1135,218.8 1135.5,210 1136,203.7 1136.5,200.2 1137,199.7 1137.5,202.1 1138,207.4 1138.5,215.4 1139,225.6 1139.5,237.8 1140,251.4 1140.5,265.7 1141,280.3 1141.5,294.5 1142,307.8 1142.5,319.4 1143,329.1 1143.5,336.4 1144,340.9 1144.5,342.5 1145,341.1 1145.5,336.8 1146,329.8 1146.5,320.3 1147,308.8 1147.5,295.6 1148,281.5 1148.5,266.9 1149,252.5 1149.5,238.9 1150,226.6 1150.5,216.1 1151,207.9 1151.5,202.4 1152,199.7 1152.5,200 1153,203.3 1153.5,209.4 1154,218 1154.5,228.9 1155,241.5 1155.5,255.3 1156,269.8 1156.5,284.4 1157,298.4 1157.5,311.2 1158,322.4 1158.5,331.4 1159,337.9 1159.5,341.6 1160,342.4 1160.5,340.2 1161,335.1 1161.5,327.4 1162,317.3 1162.5,305.2 1163,291.8 1163.5,277.4 1164,262.8 1164.5,248.6 1165,235.2 1165.5,223.4 1166,213.6 1166.5,206.1 1167,201.4 1167.5,199.5 1168,200.7 1168.5,204.7 1169,211.5 1169.5,220.9 1170,232.3 1170.5,245.3 1171,259.4 1171.5,273.9 1172,288.4 1172.5,302.1 1173,314.5 1173.5,325.1 1174,333.5 1174.5,339.2 1175,342.2 1175.5,342.1 1176,339.1 1176.5,333.2 1177,324.8 1177.5,314.1 1178,301.6 1178.5,287.8 1179,273.3 1179.5,258.8 1180,244.7 1180.5,231.8 1181,220.4 1181.5,211.2 1182,204.5 1182.5,200.6 1183,199.5 1183.5,201.5 1184,206.4 1184.5,213.9 1185,223.9 1185.5,235.8 1186,249.1 1186.5,263.4 1187,278 1187.5,292.3 1188,305.7 1188.5,317.7 1189,327.7 1189.5,335.4 1190,340.4 1190.5,342.4 1191,341.5 1191.5,337.7 1192,331.1 1192.5,322 1193,310.7 1193.5,297.8 1194,283.8 1194.5,269.2 1195,254.8 1195.5,241 1196,228.4 1196.5,217.6 1197,209.1 1197.5,203.1 1198,200 1198.5,199.8 1199,202.6 1199.5,208.2 1200,216.5 1200.5,227 1201,239.4 1201.5,253.1 1202,267.5 1202.5,282.1 1203,296.2 1203.5,309.3 1204,320.7 1204.5,330.1 1205,337.1 1205.5,341.2 1206,342.5 1206.5,340.8 1207,336.1 1207.5,328.8 1208,319 1208.5,307.3 1209,294 1209.5,279.8 1210,265.2 1210.5,250.8 1211,237.3 1211.5,225.2 1212,215 1212.5,207.1 1213,201.9 1213.5,199.6 1214,200.3 1214.5,203.9 1215,210.3 1215.5,219.2 1216,230.3 1216.5,243.1 1217,257.1 1217.5,271.6 1218,286.1 1218.5,300 1219,312.6 1219.5,323.6 1220,332.3 1220.5,338.5 1221,341.9 1221.5,342.3 1222,339.8 1222.5,334.3 1223,326.3 1223.5,315.9 1224,303.7 1224.5,290.1 1225,275.7 1225.5,261.1 1226,246.9 1226.5,233.7 1227,222.1 1227.5,212.5 1228,205.4 1228.5,201 1229,199.5 1229.5,201 1230,205.4 1230.5,212.5 1231,222.1 1231.5,233.7 1232,246.9 1232.5,261.1 1233,275.7 1233.5,290.1 1234,303.7 1234.5,315.9 1235,326.3 1235.5,334.3 1236,339.8 1236.5,342.3 1237,341.9 1237.5,338.5 1238,332.3 1238.5,323.6 1239,312.6 1239.5,300 1240,286.1 1240.5,271.6 1241,257.1 1241.5,243.1 1242,230.3 1242.5,219.2 1243,210.3 1243.5,203.9 1244,200.3 1244.5,199.6 1245,201.9 1245.5,207.1 1246,215 1246.5,225.2 1247,237.3 1247.5,250.8 1248,265.2 1248.5,279.8 1249,294 1249.5,307.3 1250,319 1250.5,328.8 1251,336.1 1251.5,340.8 1252,342.5 1252.5,341.2 1253,337.1 1253.5,330.1 1254,320.7 1254.5,309.3 1255,296.2 1255.5,282.1 1256,267.5 1256.5,253.1 1257,239.4 1257.5,227 1258,216.5 1258.5,208.2 1259,202.6 1259.5,199.8 1260,200 1260.5,203.1 1261,209.1 1261.5,217.6 1262,228.4 1262.5,241 1263,254.8 1263.5,269.2 1264,283.8 1264.5,297.8 1265,310.7 1265.5,322 1266,331.1 1266.5,337.7 1267,341.5" fill="none" stroke="#d0c300" stroke-width="1.4" stroke-linejoin="round"/>
<polyline points="69.7,158.4 69.1,154.6 69.6,150.6 71.9,147.7 72.1,142 72.3,137.9 73.7,142.9 74.5,146.1 74.4,151.5 76.3,155.5 76.8,159.3 77.5,154.4 77.9,151.6 77.9,147.5 79.1,145.1 80.5,144.1 80.9,149 82.5,154 82.3,156.7 82.8,161.6 83.5,167.8 85.4,164.1 85.5,159.2 86.8,153.2 87.3,151.4 88.3,146.6 88.6,149.8 89.9,155.2 90.6,162.1 90.8,165.3 92.4,171.2 91.9,163.7 92.7,160.4 94.5,152.4 95.3,149.2 95.8,141.6 96.4,145.7 96.3,153 98.1,156.5 99.3,161 100,166.9 99.7,159.3 100.6,153.4 101.8,147.6 102.3,141.3 103.9,136.1 103.9,141.8 105.4,146.3 106.2,151.5 106.3,156.5 106.3,161.2 107.3,154.8 109.1,150.2 109.3,146.7 110.2,140.4 110.9,136 112.1,139.5 112.5,144.7 112.8,151.1 114,155.3 115.2,161.2 115.4,156.3 116.3,152 117.4,147.9 117.9,144 119.3,140.6 120,147 119.7,151.6 121.6,158.1 121.1,161.6 122.3,167.1 122.8,163.3 124.2,161.6 125.4,155.9 125.8,153.6 125.7,150.4 127.8,154.4 128.5,160.9 128.5,168.6 129.9,172.1 130,179.2 130.6,172.7 131.3,168.8 131.6,162.9 133.1,155.8 133.7,152.1 134.7,155.6 136.3,162.9 137,166 136.6,170.9 138.2,176.8 138,170.8 140,165.6 139.7,157.2 141.5,152.1 141.9,144.3 141.7,151 143,154.2 144.6,160.8 145.2,164.1 146,169 146.8,163.8 146.7,157.6 148.4,150.4 147.9,144.7 148.9,137 149.5,141.3 150.4,146.5 151.3,152.3 152,155.9 152.6,159.9 153.1,155.6 153.9,153.1 155.5,147.4 156.2,145.7 156.4,141.3 157.6,145.3 159.1,149.9 159.3,155.7 160.8,159.6 161.4,165.6 161.8,161.7 162.1,157.6 162.5,154.6 164.3,152.1 164.1,148.5 166,156.2 166.5,159.8 166.6,165.2 167.7,170.1 168.4,175.8 170,173.9 170.1,167.8 171.5,164 171.3,159.2 172.2,156.6 173.1,161.6 173.9,166.9 174.3,172.9 175.3,178.6 175.4,185.2 176.5,179.8 177.8,174 178.7,167.7 179.9,160.5 179.7,156 180.2,159.5 181.8,161.8 182.9,168.6 183.3,172.4 184.4,174.9 184.7,169.5 185.9,163.8 186.7,156.6 187.6,150.3 188,142.4 187.7,145.3 189,148.5 190.5,153.1 191,156.6 191.8,159.4 191.5,155.7 193.5,150.2 193.9,146.1 193.9,141.7 195,135.1 195.8,141.4 196.4,145.8 198.4,149.5 198.3,153.8 199.5,159.1 200.2,155.7 200.1,151.2 201.1,150 202,146.5 202.3,142 203.5,149.3 204.9,154.9 205,159.9 206.1,165.2 206.3,172 207.2,168.8 209.1,162.5 209.1,161.4 210.7,156.9 210.4,152.7 212.2,157.9 212.4,163 213.1,170.7 213.2,175.5 214.6,180.9 215.7,173.2 216.8,168.3 216.1,161.1 217.6,156.7 218.1,150 218.9,155.2 220.5,158.9 221.1,166 220.9,170.8 222.6,175.4 222.7,166.6 223.6,161.3 224.7,152.2 225.2,144.8 225.4,137.1 227.4,141.4 228.3,145.1 228,149.7 228.7,153.1 230.7,158.4 231.2,152.2 232.1,147.7 232.3,141.6 232.3,136.2 233.7,130.8 234.8,133.6 234.6,139.6 235.5,142.5 236.6,146.1 238,152.3 238,148.5 238.8,145.3 239.8,141.2 240.2,138.4 242.1,136.4 241.8,142.6 243.8,146.3 243.2,150.6 243.9,156 244.6,160.8 245.7,158.5 247.5,155.7 247.5,151.5 248.4,148.1 248.9,143.8 249.6,151.1 250.1,154.3 251.7,159.9 251.8,162.7 252.6,167.7 253.7,164.9 255.1,160.2 254.5,153.3 256.4,151.5 256.8,146.1 256.8,151 259,157.8 259.7,163.7 259.5,166.6 260.1,173.3 261.7,167.6 262.6,159.7 263.4,152.2 263.8,144 265,137.6 265.9,143.7 265.7,146.9 266.4,153.3 267.9,156.6 267.7,162.6 269.2,155.8 269.4,150 269.9,142.6 271.3,138.1 272.4,131.5 272.9,134.2 273.3,141.1 274.8,143.8 274.5,149.1 276.3,153.5 276.4,149.8 278.2,143.9 277.6,139.8 279,136.3 279.4,132.1 281,136.7 280.9,143.6 281.9,148.6 282.5,152.2 284.1,157.9 285.2,154.7 284.7,150.1 285.9,147.7 287.5,142.4 287.4,138.8 289.1,144.8 288.4,150.8 289.7,159.5 291.2,165.3 292.2,172.1 291.9,165.1 293.6,162.2 292.9,157.2 294.3,151.7 295,146.4 295.2,152.5 296.5,160.2 296.9,166 297.8,169.9 299.6,177.1 299.7,168.3 300.6,162.8 302,155.7 301.9,151.4 302.1,143.4 304.2,150.1 303.7,153.6 304.5,161.9 305.6,167 307.4,171.4 307.1,166.6 308.5,157.9 309.4,151.5 309.5,143.9 311,140 311.6,145.2 311.4,148.2 312.8,155.5 314.4,159 314,164.2 315.2,160.4 315.4,154.7 317.1,149.4 317.9,143.4 318,137.2 318.8,143.4 319.1,146.4 321,151.3 320.6,155.4 322.2,161.1 323.6,159 324.4,153.3 323.7,149 325.2,147 325.9,141.8 326.6,148 327.8,153.4 328.8,158.2 328.4,163.8 329.5,168 330.3,164.8 330.8,159.6 331.7,155.6 333.5,153.2 333.3,148.9 335.2,154.8 334.7,161.3 336.2,167.4 336.1,171.4 338,178.1 338.9,170.3 338.7,165.2 339.3,162.4 340.7,156.9 341.1,151.3 342,154.7 343.3,162 343,166.2 344.6,170.3 344.9,175.3 345.4,169.4 346.8,164.4 347,156.3 347.9,152.1 348.5,144.8 349.3,150.7 350.6,152.9 350.6,158.3 352.1,163.5 352.2,166.5 353.9,161.4 354,155.3 355.8,149.4 356,143.8 356.5,139.4 358.2,143.2 357.7,149.6 358.5,152.7 360.4,159.3 361,164.5 361.9,160.4 361.5,154.8 362.9,152.3 364.2,146.4 364.5,143 365.1,147.7 365.5,154.2 367.3,158.3 367.4,165.8 368.9,169.3 368.4,167.6 370.5,162.2 369.8,159.5 371.1,155.5 372.2,151.2 372.2,156.5 373.1,160.8 374.9,167.4 374.6,171 375.7,177.3 376.4,171.3 377,168.2 378.8,161.4 379,158.7 379,154.1 379.9,158.3 381.3,163.4 381.7,167.7 382.9,172.7 383.8,177.7 384.2,170.3 385.3,165.5 385.4,160.1 387.1,153 386.9,146.9 387.5,150.5 388.8,155 389.6,160.9 389.7,166 390.6,170.9 392.4,164.4 392,158.6 393.3,154.1 393.7,148 395.9,141.8 396.3,144.6 397.4,149.9 398.1,155.5 397.6,159.5 399.6,161.7 399.4,159.2 399.9,154.9 400.8,150.1 401.4,144.5 403.4,138.9 403.1,144.6 404,148.1 404.5,153.2 406.5,159.6 407.2,162.9 407.8,158.5 408.2,155.9 408.7,152.4 409.7,147.3 411,141.6 412,147.9 411.8,153.1 412.3,158.4 413.6,161.1 414.7,166.1 414.5,162.6 415.1,158.4 416.2,153.5 418.1,149 418.4,143.8 418.1,148.2 419.1,155.3 420.3,160.2 421.8,164.4 421.5,171.2 421.9,164 423.2,159 424,154.1 425.1,149.9 425.3,144.7 426.5,147.9 428,152.9 427.5,157.2 429.1,164.2 430.1,167.4 430,160.7 431.4,156.7 431.7,151.4 432.6,146.6 433.8,139 434.9,143.3 435,149.2 435.3,153.1 437,157.9 437.4,165.5 437.5,156.9 439,151.4 439.8,145.8 439.9,137.9 440.8,130.7 442.5,138.4 443,141.7 444,149.5 444.2,155 444.9,159.1 445.1,154.2 445.8,149.7 447.7,146 448.6,141.2 448.4,135.9 449.5,141.5 450.4,144.7 451.4,151.7 451.4,156.3 451.9,159.2 453,155.9 454.9,151 454.7,146.6 455.5,139.8 457.2,136.2 457.6,141.9 458.8,146.9 459.3,153.2 460.1,158 460.7,164 460.8,158.2 462.1,153 463.3,148.4 462.7,143.5 464.9,139.4 464.4,144.3 465,152.2 466.7,158.1 467.6,162.1 468.2,168.8 469.3,165 470.2,157.6 470.9,154.9 471.8,147.3 471.4,142.2 471.9,149.5 473.9,154 474.7,159.1 474.6,162.7 475.1,169.8 476,162.7 477.1,156 477.6,151.1 479.1,145.5 479.3,141.5 480.3,146.3 481.3,149 481.7,155.3 483,160.1 483.7,165.8 483.7,160.8 484.3,154.7 485.2,146.2 486,142.5 488,134.2 488,140.2 489.2,143.8 489.5,148.9 490.8,153.2 491.8,157.8 491.4,154.4 492.6,148 493.6,143.2 494.6,140.4 495.4,135.6 495.4,140.1 496.3,146.8 496.5,152 497.2,155.2 498.4,162.5 499.5,157.3 500.9,153.2 501,150.5 502.2,147.5 502.8,142.7 503.1,147.8 504.7,155 505.3,159.2 505.6,166.7 506.5,170.5 507.1,168.4 507.5,162 508.4,159.1 510,153.1 509.7,149.1 510.8,155.9 511.3,161.4 512.1,169.4 513.7,172.8 514.8,178.8 514.7,175.4 516.1,168.5 516.3,160.8 517.4,154.4 517.5,149.1 518,154.5 519.9,160.8 520.2,166 521,170 521.9,176.1 522.9,170.4 523.2,162.1 524.5,154.4 524.4,148.1 526.2,141 526.7,146.6 527.4,151.4 527.9,155.9 528.9,160.7 529.3,168.1 530.6,161.4 530.6,154.5 531.7,148.9 532.4,142.8 534,135 534.3,141.7 534.7,145.7 536.4,149.2 536.4,154.4 537.6,161.6 537.9,155.4 538.8,153.2 539.8,149.5 540.4,146.8 541,141.9 542.5,147.1 542.8,153.4 543.7,158.4 544.8,164.8 544.1,170.4 545.4,166.4 546.2,164.4 547.4,161 547.5,157.4 549,156.3 549.5,160 550.7,166.3 550.5,171.3 552.2,179.2 552.7,184 553.4,178.1 554.8,173.3 555,169.5 556.1,163.3 556,158.3 556.5,164.9 557.6,170.6 558.3,174.9 559,180.7 559.7,185.1 561.3,178.1 561.3,170.3 562.5,162.9 563.5,155.7 563.8,148.7 565.4,150.7 566.1,157.9 566.8,160.2 567.6,166.3 567.1,169.1 569.4,164.2 569,155.7 569.6,149.3 571.4,142.9 571.1,137.7 572.9,139.7 573.9,145.1 574.5,149.5 575.4,154 576.1,156.4 576.6,153.4 577.5,149.2 578.5,145.6 578.2,140.7 578.8,137.5 579.4,142.5 580.3,147.7 581.7,152.9 583,156.4 583.8,162.8 584.1,160.7 585.3,157 585.4,156.1 585.6,152.3 587.3,147.7 588,155.6 589.3,160.5 590.1,166.9 590.1,174 590.2,179.3 591.9,173.6 593,169.1 593.2,165 594.4,159.5 594.6,155.5 595.6,161.7 595.9,166.7 596.9,170.8 597.4,175.8 599.3,181.3 599.8,173.8 599.8,167.3 601,161.9 602.1,153.6 602.8,149.7 603.3,151.5 603.6,155.7 604.2,162.8 605.7,166.3 606.7,171.4 607.2,163.3 608,156.2 608.7,148.9 608.9,141.5 610,134.5 610.2,136.9 610.9,142.9 613.1,146.7 613,151.3 614.4,154.7 614.3,148.7 615.4,143.5 616.1,139.3 617.7,132.3 617.9,127.1 617.9,134.8 619.4,140.5 620,143.2 620.7,150.4 622.3,156.9 622.3,151.7 622.5,148.8 623.5,143.7 623.9,139.7 625.8,136.5 627,141.3 627.6,146.3 627,152.9 628.1,157.9 628.8,160.7 630.5,159.4 631.4,156.3 630.9,152.7 632.7,149 633.8,145.2 634.7,152.2 633.9,155.7 635.7,163.8 635.5,167.9 637.3,173.1 638.3,168.5 637.8,162.7 639.4,157.4 640.3,151 641.3,146.2 641.8,152.2 642.2,156.7 643.6,163.6 644.3,167.7 644.3,171.4 646.2,166.6 646.7,158.7 647.1,153.9 648.3,146 648.2,138.7 649.9,143.4 650.3,148.9 651.4,154.4 651.2,156.8 652,162.9 653.2,157.6 654.5,148.9 655.2,144.7 656,137.6 655.8,131.9 657.4,136.1 658.4,139.7 657.8,145 659.7,148.6 660.4,155.4 660.4,149.9 661.8,144.9 661.9,139.7 663.5,136.8 663.8,130.1 665.1,137.3 665,141.9 666.8,147.9 667,151.8 667.8,156.1 668,152.7 669.6,149.8 670.1,146.5 670.8,142.3 670.8,141.4 672.1,143.2 673.3,149.7 673.3,153.6 674.4,157.8 674.6,160.8 676.9,160.4 676.9,156.7 677.3,154.4 678.3,152.1 679.6,148.9" fill="none" stroke="#007400" stroke-width="3.4" stroke-linejoin="round"/>
<polyline points="69,158.3 72.5,138.9 76.3,158.3 80.2,142.7 84,167.4 87.9,145.8 91.7,170.5 95.5,142 99.4,165.9 103.2,136.6 107.1,161.4 110.9,135.8 114.7,159.9 118.6,140 122.4,168.4 126.3,149.3 130.1,179.1 133.9,151.8 137.8,177.5 141.6,145.5 145.5,170.3 149.3,138.2 153.1,160.4 157,140.4 160.8,165 164.7,149.8 168.5,176.5 172.3,156.7 176.2,185.8 180,154.5 183.9,176 187.7,143.2 191.5,159.4 195.4,136.3 199.2,158.3 203.1,143.3 206.9,170.8 210.7,153.6 214.6,179.8 218.4,151.1 222.3,174.2 226.1,138.3 229.9,157.2 233.8,130 237.6,150.9 241.5,136.4 245.3,161.6 249.1,145.2 253,168 256.8,145.9 260.7,173.2 264.5,138.4 268.3,162.6 272.2,130.3 276,153.8 279.9,131.3 283.7,158.5 287.5,139.7 291.4,170.8 295.2,147.4 299.1,176.1 302.9,143.7 306.7,171.9 310.6,138.8 314.4,164.4 318.3,137.8 322.1,161.6 325.9,142.6 329.8,167.8 333.6,149.2 337.5,177.1 341.3,150.2 345.1,176.3 349,145.4 352.8,167.5 356.7,138.3 360.5,164.8 364.3,143.3 368.2,170.2 372,150.3 375.9,177.2 379.7,153.1 383.5,177.9 387.4,146.9 391.2,170.2 395.1,141.1 398.9,163 402.7,139.8 406.6,163.9 410.4,142.8 414.3,166.2 418.1,144.3 421.9,170.8 425.8,144.3 429.6,167.7 433.5,139.7 437.3,164.2 441.1,132 445,159.9 448.8,135.8 452.7,160 456.5,135.8 460.3,163.8 464.2,139.9 468,169.2 471.9,143.3 475.7,169 479.5,140.2 483.4,165.7 487.2,135.7 491.1,158.4 494.9,135.2 498.7,161.3 502.6,143.1 506.4,171.6 510.3,149.8 514.1,180 517.9,149.5 521.8,176.4 525.6,140.2 529.5,167.3 533.3,136 537.1,160.2 541,142.2 544.8,171 548.7,155 552.5,184.1 556.3,158.2 560.2,186.6 564,147.4 567.9,170.6 571.7,136.5 575.5,157.3 579.4,137.5 583.2,162.9 587.1,149.2 590.9,178.7 594.7,155.7 598.6,180.8 602.4,148.6 606.3,170.2 610.1,133.7 613.9,154.5 617.8,128.5 621.6,155.5 625.5,137.6 629.3,162 633.1,145.9 637,174.1 640.8,146.6 644.7,172.7 648.5,138.9 652.3,163.1 656.2,130.9 660,154.1 663.9,131.3 667.7,157.1 671.5,139.9 675.4,162.2 679.2,147.9" fill="none" stroke="#007e00" stroke-width="3.6" stroke-linejoin="round"/>
<polyline points="69,158.3 72.5,138.9 76.3,158.3 80.2,142.7 84,167.4 87.9,145.8 91.7,170.5 95.5,142 99.4,165.9 103.2,136.6 107.1,161.4 110.9,135.8 114.7,159.9 118.6,140 122.4,168.4 126.3,149.3 130.1,179.1 133.9,151.8 137.8,177.5 141.6,145.5 145.5,170.3 149.3,138.2 153.1,160.4 157,140.4 160.8,165 164.7,149.8 168.5,176.5 172.3,156.7 176.2,185.8 180,154.5 183.9,176 187.7,143.2 191.5,159.4 195.4,136.3 199.2,158.3 203.1,143.3 206.9,170.8 210.7,153.6 214.6,179.8 218.4,151.1 222.3,174.2 226.1,138.3 229.9,157.2 233.8,130 237.6,150.9 241.5,136.4 245.3,161.6 249.1,145.2 253,168 256.8,145.9 260.7,173.2 264.5,138.4 268.3,162.6 272.2,130.3 276,153.8 279.9,131.3 283.7,158.5 287.5,139.7 291.4,170.8 295.2,147.4 299.1,176.1 302.9,143.7 306.7,171.9 310.6,138.8 314.4,164.4 318.3,137.8 322.1,161.6 325.9,142.6 329.8,167.8 333.6,149.2 337.5,177.1 341.3,150.2 345.1,176.3 349,145.4 352.8,167.5 356.7,138.3 360.5,164.8 364.3,143.3 368.2,170.2 372,150.3 375.9,177.2 379.7,153.1 383.5,177.9 387.4,146.9 391.2,170.2 395.1,141.1 398.9,163 402.7,139.8 406.6,163.9 410.4,142.8 414.3,166.2 418.1,144.3 421.9,170.8 425.8,144.3 429.6,167.7 433.5,139.7 437.3,164.2 441.1,132 445,159.9 448.8,135.8 452.7,160 456.5,135.8 460.3,163.8 464.2,139.9 468,169.2 471.9,143.3 475.7,169 479.5,140.2 483.4,165.7 487.2,135.7 491.1,158.4 494.9,135.2 498.7,161.3 502.6,143.1 506.4,171.6 510.3,149.8 514.1,180 517.9,149.5 521.8,176.4 525.6,140.2 529.5,167.3 533.3,136 537.1,160.2 541,142.2 544.8,171 548.7,155 552.5,184.1 556.3,158.2 560.2,186.6 564,147.4 567.9,170.6 571.7,136.5 575.5,157.3 579.4,137.5 583.2,162.9 587.1,149.2 590.9,178.7 594.7,155.7 598.6,180.8 602.4,148.6 606.3,170.2 610.1,133.7 613.9,154.5 617.8,128.5 621.6,155.5 625.5,137.6 629.3,162 633.1,145.9 637,174.1 640.8,146.6 644.7,172.7 648.5,138.9 652.3,163.1 656.2,130.9 660,154.1 663.9,131.3 667.7,157.1 671.5,139.9 675.4,162.2 679.2,147.9" fill="none" stroke="#00bc00" stroke-width="2.0" stroke-linejoin="round"/>
<polyline points="679.7,147.1 679.4,149.9 680.2,152.6 680.7,157.1 682.2,159.8 682.9,164.2 682.6,166.2 683.6,163.6 684.8,163 685,163.1 686.1,162.1 686.2,160.3 686.6,160.9 688,159.6 687.7,160.7 688.7,163.8 689.9,164.7 689.6,165.5 690.9,166.1 691.9,161.8 691.7,161.7 693.1,159 693.1,156.3 694.2,152.3 694.4,150.4 694.8,151.4 695.5,150.8 696.1,152.5 696.7,152.8 697.5,150.9 698.8,151.7 699.5,152.2 700.1,148.3 700.3,146.5 701.4,147.3 701.7,144.5 702.1,144.1 702.9,144.6 703.2,144.5 703.7,147.2 704.9,146.5 705.8,148 706,148.8 706.5,150.3 707.2,147.5 708,147.3 709.1,146 709.8,145.1 710.3,146.4 710.3,147.9 711,149.2 711.6,151.6 713,155.6 713.6,154.8 713.6,159.4 714,159 714.9,160 715.2,159.6 716.2,157.7 716.5,160.1 717.6,158.2 718.2,162.5 718.6,163.5 719.2,164.2 720.5,167.9 720.5,167.9 721,171.6 722.1,169.2 722.4,168.9 723.6,168.2 724.1,164.9 724.2,165.2 725.2,163.8 725.5,164.5 726.4,165.1 727.6,164.4 727.4,166.2 728.5,166.5 728.9,164.7 730.1,163.6 730.1,161.8 731.2,158.9 731.7,158.6 732.4,155.8 733.2,156.3 734,154.9 734.5,155.3 735.2,154.4 735.9,157.4 736.2,156.2 736.9,156.5 737,156.3 737.8,152.2 738.3,150.8 739.7,148.5 739.6,149.1 740.4,145.3 741.4,148.4 742,150.1 742.2,151.9 743.4,150.6 743.5,153.3 744.5,153.9 744.8,153.7 745.4,153.7 746.8,151.6 747.1,152.9 747.4,152.6 748.8,150.6 748.9,153.6 749.6,153.8 750.7,156.6 750.7,156.4 751.4,158.6 752.7,161.4 753.2,161 753.8,158.1 754.1,160.5 755.2,157.8 755.3,158.6 755.9,157.8 756.2,159.2 757.3,159.5 757.6,164.1 758.9,165.6 759.4,166.9 760.2,168.7 760,166.6 760.9,165.4 761.6,163.6 762.8,162.5 762.8,160.8 763.6,160.8 764.1,159.7 765.1,160.1 765.7,163.7 766.3,162.4 766.9,164.2 767.2,163.9 767.8,163.2 768.7,162 769.2,160.2 770.1,161.5 770.8,159.4 771.5,157.1 772.2,158.6 772.7,159.7 773.3,159.5 773.7,159.9 774.6,161.1 775.3,160.5 775.7,161.6 776.2,159 777.1,156.5 778.3,154.9 778.7,152.8 778.6,153.4 779.6,151.7 780.2,153.7 781.2,153.5 781.3,157 782.5,155.3 782.7,156.7 783.7,156.6 784.5,156.3 784.8,155 785.7,154.1 786.1,153.2 786.9,152.7 787,152.9 787.5,153 788.7,152.6 789.8,153.2 789.9,154.3 791,154.2 791.1,152.1 791.8,151.4 792.3,148.8 793.2,147.2 793.6,146.9 794.8,144.4 795,144.3 795.5,145.1 796.4,147.5 796.6,149.5 797.4,150.2 798.6,151.5 798.6,148.8 800,146.4 799.7,147.2 800.8,147.3 801.7,145.1 802.6,144.1 802.8,146.3 803.3,147 804.1,148.8 805.1,151.6 805.3,151.5 805.8,154.2 806.6,154.4 807.6,155.3 807.8,153.2 808.6,154.6 809,152.8 810.1,151.3 810.2,155.6 811.4,155.8 811.3,158.8 812.5,160.2 813.5,162.2 813.5,161.5 814,161.6 814.9,159.5 815.2,159.8 816.3,157.8 817.3,157.6 817,155.8 818.4,156.1 818.9,155.8 819.2,159.2 820.1,159.3 820.4,159.4 821.4,159.3 822.1,158.2 823.1,156.5 823.1,153.1 823.5,153.2 824.1,149.2 824.8,148.6 826.1,149.1 826.7,147.5 826.6,150 827.5,150 828.2,148.4 828.7,148.4 830,148.3 830.1,146.2 830.8,143.2 831.9,143.2 832.6,141.1 832.9,138.8 833,142.1 834.5,141.2 835.1,143.8 835.2,144.2 836.5,144.9 837.1,145.2 837.2,146 837.7,144 839,143.9 839.5,142.4 839.5,142.1 840.2,143.3 840.9,143.8 841.4,145.5 842.3,146.9 842.6,147.8 844,150.4 844.1,151.6 844.8,151.7 845.2,153 846.1,151.3 847.1,151 847.3,153.3 847.8,152 849.2,155 849.1,155.5 850.3,157.5 851.2,158.9 851.8,161.8 851.7,163.5 852.3,163.3 853.1,162.9 854,160.2 854.3,159.9 854.9,159.7 855.5,157.6 856.5,157.3 857.4,158.2 857.9,159.4 858.2,159.4 858.6,159.2 860.1,160.2 860.5,157.7 861,156.6 861.6,154.5 861.8,152.6 862.6,150.1 863.8,148.7 864.1,151.2 865.1,151.5 865.8,149.6 865.9,149.7 866.9,152.2 867.2,151.9 868.2,151.4 868.4,150.4 869.2,148.3 869.6,145.3 871,145.8 871.4,142.2 871.4,143.7 872.2,145.3 873,145.5 873.6,148.6 874.1,150.3 875.1,151 875.5,149.2 876.5,147.9 876.5,148.5 877.9,145.7 877.8,146.6 879,143 879.3,144.9 880.5,146.8 881.2,150.1 881,151.6 882,153.4 883.1,153.5 883,155.3 883.9,154.9 884.9,153.9 885.6,153.2 885.9,151 886.8,151.8 887.2,154.9 887.5,155.8 888,157.1 889.4,157.2 889.8,161 890.6,161.1 890.8,159.2 891.6,160 892,159.3 892.6,160.2 893.8,158.3 894,158.9 894.8,161 895.4,159.9 896.6,160.2 896.9,161.7 897.8,163.2 898.4,162.8 898.9,163 899.3,162.4 900.4,159.2 900.4,158.8 901,156.7 901.7,156 902.8,157.5 902.8,157.8 903.8,158.6 904.2,158.4 904.7,162 906,159.8 906.6,161.3 907.1,157.2 907.7,156.9 908,155.9 908.5,155.8 909.8,153.5 910.7,154.4 910.7,153.9 911.2,154 912.5,157.4 912.6,156.1 913.6,159 914.5,155.5 915,156.3 915.6,153.4 915.7,153.7 916.5,150.9 917.4,149.6 918.3,150.4 918.1,152.6 919.3,154.6 920.1,156.1 920.9,156 921.1,156.1 921.6,156.6 922,156 922.7,154.4 924.2,152.4 923.9,152.7 924.7,152.7 925.1,154.5 926.6,155.8 926.8,155.6 927.7,157.8 928.1,158.7 928.8,161.2 929.8,161.4 929.8,158.9 930.7,159.2 931.2,157.4 931.6,157.3 932.6,158.8 933.7,160.1 934.4,162.2 934.7,163.4 934.8,164.7 936,165.1 936.6,168.9 937.1,167.5 937.6,166 938.8,164.6 938.7,166.2 939.6,163.8 940.5,164.2 941.1,165.4 941.6,166.9 942.2,166.5 942.6,170.1 943.6,168.6 944.5,170.1 944.4,169.3 945.2,167.5 946.2,164.9 946.8,162.9 947.4,162.7 947.6,160.5 948.2,160.7 949.7,161.1 950.2,161.8 950.2,162.7 951.4,159.9 952.2,160.9 952.2,161 953.2,158.6 953.4,156.9 954,153.4 954.9,150.9 955.8,149.7 956.1,151.9 956.9,153 957.7,153.5 958.3,154.1 959.3,152.3 959.8,153.4 960.4,153.2 961.1,150.1 961.3,150.8 962.5,149.5 962.3,147.8 963,146.4 964.3,146.4 965.1,149.6 965.1,149.4 965.9,152.9 966.7,152 966.7,153.3 968.2,153 968.6,152.8 969.3,152.5 969.4,153.6 970.5,152.4 971.4,152.7 971.2,152.5 972,154.9 973.4,157.6 973.2,157.5 974.6,160.9 974.8,162.1 975.2,162.8 976.1,162.5 976.9,159.5 977.3,159.6 978.5,160.4 978.3,158.6 979.2,160.8 980.1,161.8 980.5,161.9 981.4,164.2 981.5,165.9 983.1,165.8 982.9,166 983.6,162.9 984.5,161.1 985.2,160.1 986.2,159.8 986,156.6 987.3,157.7 988,157 988.5,156.3 988.8,157.8 990,158.3 990.4,156.4 991.2,156 991.5,153.8 992,151.8 992.7,148.4 993.3,147.4 994.6,146.1 994.6,145.9 995.1,146.7 995.7,146.1 997,148 997.2,148.9 997.7,148.1 998.1,147.4 999,147.6 999.9,147.1 1000.3,145.9 1001.2,142.1 1001.5,142.5 1002.9,143.3 1003.3,144.9 1004.1,145.2 1004.3,149.4 1004.8,148.8 1005.1,149.9 1006,151.2 1006.6,149.7 1007.2,149.9 1008.5,149.6 1008.5,149.4 1009.9,148.5 1009.7,150.7 1011.1,150.7 1011,151.7 1012.1,155.4 1012.8,157.1 1013,156.7 1014.2,157.2 1014.5,156.7 1015.1,154.2 1015.8,153.6 1016.6,154 1017.1,154.3 1017.5,155 1017.9,157.7 1019.1,159.1 1019.3,159.1 1020.6,159.4 1020.6,160 1021.3,160.8 1021.8,159.8 1022.8,157.8 1023.6,156.7 1024.3,155.7 1024.7,155 1025.2,155.6 1026.4,156.6 1026.5,157.3 1027.9,157 1027.8,158 1029.1,157.5 1028.8,157.2 1030.1,156.7 1030.4,156 1030.9,153.8 1031.4,150 1032.1,148.7 1033.1,150.9 1033.5,152.7 1034.3,150.8 1034.7,153.3 1036.1,152.1 1035.9,154.6 1036.7,154 1037.6,151.6 1038.1,150.8 1038.9,147.9 1039.9,145.9 1040.4,144.5 1041,146.4 1041.8,146.2 1042.2,148.3 1043.2,150.9 1043.5,149.4 1043.8,150.5 1044.6,149.5 1045,150.3 1046.1,148 1047.1,146.8 1047.3,145.8 1048.2,147.2 1048.3,148.1 1049.5,147.9 1049.6,149.9 1050.8,150.2 1051.2,152.9 1051.7,154.1 1052.7,152.3 1053.4,152.2 1053.9,153.3 1053.9,152.7 1055.4,150.3 1055.1,149.1 1056.7,150.1 1057.2,151.9 1057.7,153 1057.8,156.2 1058.3,156.5 1059.8,159 1060.4,159 1060.2,155.7 1061.6,156.3 1061.5,154.8 1062.3,153.7 1062.8,151.5 1064.4,153.5 1064.9,153.9 1065.1,155 1065.7,156.3 1066.6,157.2 1067.3,159.4 1067.3,157.9 1068.3,158.7 1068.8,155.5 1070.1,156.6 1070.5,153.6 1070.6,152.6 1071.1,152.6 1072.2,154.5 1072.9,155.1 1073,156.9 1074.3,157.2 1074.8,158.4 1075.9,157.8 1076.2,155 1076.5,153.9 1077.8,152.5 1077.8,151.4 1078.2,152.1 1078.7,151.5 1080.3,151.1 1080.6,152.2 1080.9,152.3 1081.4,155 1082.7,156 1082.6,153.9 1083.5,152.4 1084.4,149.9 1085.5,147.6 1085.9,148.9 1086.3,146.7 1087.4,146.7 1087.7,149.4 1088.1,150.4 1088.7,150.9 1089.6,152.5 1089.9,153.5 1090.8,151.5 1091.5,151 1092.4,151 1092.9,150.4 1093.3,148.8 1093.6,150.4 1094.6,150.6 1095.2,153 1095.6,152.4 1096.8,154.8 1097.3,157.4 1098.2,159 1098,157 1099.4,158 1099.3,155.4 1100.1,154.8 1100.8,156.7 1101.6,155.1 1101.8,156.6 1103.4,159.2 1103.5,160.1 1104.5,162.6 1104.5,164 1105.3,165.2 1105.8,163.8 1106.6,163 1106.9,161.6 1108.1,160.2 1108.3,161.5 1109.1,159.4 1109.7,161.7 1110.2,161.7 1111.6,160.9 1111.8,163.5 1112.6,162.8 1112.7,163.7 1113.6,163 1114.2,160.6 1115.2,160.4 1115.6,157.5 1116.4,157.8 1116.7,156.4 1117.8,154.9 1118.4,155.2 1118.5,157 1119.4,156.7 1120.2,158.4 1121.1,156 1121.6,156 1122.1,155.8 1122.7,153.3 1123.8,151.8 1124,150.7 1125,149.8 1125.5,150 1125.5,152 1126.6,153.3 1127.5,152.3 1127.6,153.3 1128.8,154.4 1128.7,155.7 1129.8,152.6 1130.6,153.8 1131,150.9 1131.9,151.2 1132.4,152.2 1133.3,153.2 1133.3,153 1134.3,153.4 1135.4,155.7 1135.3,157.3 1135.9,160.5 1136.9,158.8 1137.4,156.8 1137.9,158.9 1139,158.3 1139.1,155.6 1139.6,156.2 1140.5,157.3 1141.3,159.1 1141.8,161.2 1142.3,163 1143.3,161.7 1143.7,164.6 1144.4,163.8 1145,161.9 1146.1,161 1146.6,161.7 1147.2,159.6 1148.1,158.6 1148.7,158.1 1148.9,160.7 1149.2,162.1 1149.8,161.9 1150.6,163.7 1151.6,164 1152.2,162.1 1153,159.4 1153.2,159.6 1153.7,158.4 1154.4,154.2 1155,154.9 1156.5,154 1156.8,153.8 1157.7,155.4 1157.6,153.7 1158.8,153.9 1159.6,154.9 1159.6,154.7 1160.3,153.4 1160.8,153.3 1161.6,151.9 1162.1,150.5 1163.5,148 1163.2,148.9 1164.5,149.4 1165,149.9 1165.6,152.9 1166.2,153.7 1166.5,155.2 1167.2,154.6 1168.7,153.7 1168.8,150.7 1169.3,151.3 1170.1,150.9 1170.3,148.6 1171.7,150.2 1172.1,149.8 1172.3,151.6 1173.7,154.6 1173.7,156.1 1174.1,156.3 1175.7,154.6 1176.3,154.7 1176.1,152.8 1177.1,151.6 1178,150.5 1178.7,150 1178.6,152 1179.3,153.1 1180.6,154.3 1180.9,153.6 1181.6,155 1182.4,156.2 1183,156 1183.4,156.1 1183.8,153.6 1185.3,153.2 1185.8,154 1186.1,150.8 1186.3,154 1187,153.7 1188.1,153.5 1188.6,154.5 1189.3,156.6 1189.8,156.5 1190.5,155.5 1190.8,154.5 1192.2,154.3 1192.9,151.7 1193.6,152.1 1194.1,151.3 1194.6,150.9 1195.3,151.4 1195.5,151.7 1196.2,153.9 1196.8,155.8 1197.2,155.5 1198,154.4 1199.2,153.7 1199.1,151.1 1200.3,152.3 1200.4,150 1201.7,149.6 1201.9,150.2 1202.7,151.3 1202.9,152.1 1203.9,151.1 1204.2,151.2 1205.5,153.3 1205.6,150.9 1206.2,149.1 1206.9,148.2 1208.3,149 1208.8,146 1209.1,145.6 1210.2,146.6 1210.6,145.8 1211.2,148.9 1212,147.4 1212.6,149.3 1212.6,152.2 1213.8,150.5 1213.9,149.8 1215.3,149.1 1215.8,147.9 1216.5,146.1 1216.8,145.9 1217.7,147.1 1217.9,148.5 1218.8,149.6 1219,150.7 1220.3,149.6 1221,150.6 1221,150.4 1221.7,149.6 1223,149.3 1223.4,147.5 1224.1,147.8 1224.7,147.4 1225.5,147.1 1225.4,149.3 1226.8,149.7 1227.2,152.7 1228,151.5 1228.3,152.9 1228.6,154.9 1229.5,153.6 1230.2,152.2 1230.6,151.6 1231.9,151.9 1232,149.6 1232.6,152.8 1233.4,153.9 1234.4,153.4 1234.9,154.4 1235.7,156.1 1235.8,159.8 1236.5,156.7 1237.7,157.2 1238.3,155.7 1238.6,156.8 1239.2,156.2 1239.5,154.9 1240.2,154.8 1240.6,154.6 1242.2,156.4 1242.7,156.6 1242.9,157 1243.8,160.3 1244.4,157.2 1245.4,157.3 1245.8,153.1 1246.4,152.8 1247.4,150.9 1247.7,150.3 1248.1,150.4 1249,152.1 1249.5,150.8 1250.6,150.3 1251.1,152.8 1251.4,152.5 1252.3,152.3 1252.9,150.3 1252.8,147.3 1253.6,147.7 1255,143.6 1255.3,143.4 1255.4,143.7 1256.7,145.3 1256.9,146.6 1257.6,146.8 1258.3,149.1 1259.2,149.4 1259.9,147.1 1260.8,147.1 1261.2,144.8 1261.3,144.7 1262.6,144.5 1262.7,141.4 1263.6,144.9 1263.8,145.7 1264.5,145.5 1265,146.7 1266,150.1 1267.2,148.8" fill="none" stroke="#007800" stroke-width="7.5" stroke-linejoin="round"/>
<polyline points="679.2,147.9 683.1,165.9 686.9,159.4 690.7,165.7 694.6,151.2 698.4,152.6 702.3,143.1 706.1,149.9 709.9,145.9 713.8,158.1 717.6,159.2 721.5,171.3 725.3,163.1 729.1,165.7 733,155.3 736.8,156.3 740.7,146.9 744.5,154.6 748.3,150.9 752.2,160.4 756,157.8 759.9,167.5 763.7,159.4 767.5,165.1 771.4,158 775.2,162.1 779.1,152.2 782.9,157.2 786.7,151.3 790.6,153.8 794.4,144.4 798.3,150 802.1,144 805.9,154.5 809.8,152.3 813.6,162.6 817.5,156.1 821.3,160.1 825.1,148.5 829,149.7 832.8,139.6 836.7,146 840.5,141.8 844.3,152.6 848.2,152.1 852,163.7 855.9,157.5 859.7,160.8 863.5,149.4 867.4,152.1 871.2,143.7 875.1,150.4 878.9,144.5 882.7,154.2 886.6,152 890.4,161 894.3,158.8 898.1,163.9 901.9,157 905.8,161.2 909.6,153.1 913.5,157.9 917.3,150 921.1,157.2 925,152 928.8,160.7 932.7,157.3 936.5,167.5 940.3,164.6 944.2,170.9 948,160.8 951.9,161.3 955.7,150.7 959.5,153.9 963.4,146.2 967.2,154.6 971.1,151.2 974.9,162.1 978.7,159.7 982.6,167.3 986.4,156.4 990.3,157 994.1,146.2 997.9,149.2 1001.8,142.3 1005.6,151 1009.5,148.2 1013.3,157.2 1017.1,153.9 1021,161.1 1024.8,154.2 1028.7,158.7 1032.5,150.1 1036.3,153.7 1040.2,145.9 1044,151.2 1047.9,146 1051.7,153.9 1055.5,150.3 1059.4,158.3 1063.2,153 1067.1,159.4 1070.9,153.3 1074.7,157.8 1078.6,150.5 1082.4,154.6 1086.3,146.4 1090.1,153.1 1093.9,149 1097.8,157.8 1101.6,155.3 1105.5,165.1 1109.3,159.9 1113.1,163.8 1117,154.9 1120.8,157.5 1124.7,149.2 1128.5,155.7 1132.3,150.6 1136.2,159.4 1140,156 1143.9,164.5 1147.7,158.8 1151.5,163.1 1155.4,154 1159.2,155.6 1163.1,148.4 1166.9,154.1 1170.7,148.6 1174.6,156 1178.4,150.7 1182.3,157.4 1186.1,151.9 1189.9,157.5 1193.8,151.1 1197.6,155.2 1201.5,148.5 1205.3,152.8 1209.1,144.8 1213,150.7 1216.8,144.8 1220.7,151.5 1224.5,146 1228.3,154.5 1232.2,150.9 1236,158.3 1239.9,153.9 1243.7,159.2 1247.5,149.8 1251.4,152.6 1255.2,143.1 1259.1,148.4 1262.9,142.5 1266.7,149.8" fill="none" stroke="#007c00" stroke-width="7.6" stroke-linejoin="round"/>
<polyline points="679.2,147.9 683.1,165.9 686.9,159.4 690.7,165.7 694.6,151.2 698.4,152.6 702.3,143.1 706.1,149.9 709.9,145.9 713.8,158.1 717.6,159.2 721.5,171.3 725.3,163.1 729.1,165.7 733,155.3 736.8,156.3 740.7,146.9 744.5,154.6 748.3,150.9 752.2,160.4 756,157.8 759.9,167.5 763.7,159.4 767.5,165.1 771.4,158 775.2,162.1 779.1,152.2 782.9,157.2 786.7,151.3 790.6,153.8 794.4,144.4 798.3,150 802.1,144 805.9,154.5 809.8,152.3 813.6,162.6 817.5,156.1 821.3,160.1 825.1,148.5 829,149.7 832.8,139.6 836.7,146 840.5,141.8 844.3,152.6 848.2,152.1 852,163.7 855.9,157.5 859.7,160.8 863.5,149.4 867.4,152.1 871.2,143.7 875.1,150.4 878.9,144.5 882.7,154.2 886.6,152 890.4,161 894.3,158.8 898.1,163.9 901.9,157 905.8,161.2 909.6,153.1 913.5,157.9 917.3,150 921.1,157.2 925,152 928.8,160.7 932.7,157.3 936.5,167.5 940.3,164.6 944.2,170.9 948,160.8 951.9,161.3 955.7,150.7 959.5,153.9 963.4,146.2 967.2,154.6 971.1,151.2 974.9,162.1 978.7,159.7 982.6,167.3 986.4,156.4 990.3,157 994.1,146.2 997.9,149.2 1001.8,142.3 1005.6,151 1009.5,148.2 1013.3,157.2 1017.1,153.9 1021,161.1 1024.8,154.2 1028.7,158.7 1032.5,150.1 1036.3,153.7 1040.2,145.9 1044,151.2 1047.9,146 1051.7,153.9 1055.5,150.3 1059.4,158.3 1063.2,153 1067.1,159.4 1070.9,153.3 1074.7,157.8 1078.6,150.5 1082.4,154.6 1086.3,146.4 1090.1,153.1 1093.9,149 1097.8,157.8 1101.6,155.3 1105.5,165.1 1109.3,159.9 1113.1,163.8 1117,154.9 1120.8,157.5 1124.7,149.2 1128.5,155.7 1132.3,150.6 1136.2,159.4 1140,156 1143.9,164.5 1147.7,158.8 1151.5,163.1 1155.4,154 1159.2,155.6 1163.1,148.4 1166.9,154.1 1170.7,148.6 1174.6,156 1178.4,150.7 1182.3,157.4 1186.1,151.9 1189.9,157.5 1193.8,151.1 1197.6,155.2 1201.5,148.5 1205.3,152.8 1209.1,144.8 1213,150.7 1216.8,144.8 1220.7,151.5 1224.5,146 1228.3,154.5 1232.2,150.9 1236,158.3 1239.9,153.9 1243.7,159.2 1247.5,149.8 1251.4,152.6 1255.2,143.1 1259.1,148.4 1262.9,142.5 1266.7,149.8" fill="none" stroke="#00c000" stroke-width="4" stroke-linejoin="miter" stroke-miterlimit="3"/>
<path d="M69.5 427.3V442.6M71.5 425.5V442.5M74.5 428.3V438.5M77.5 427.1V441.6M80.5 427.4V438.1M83.5 426.3V441.8M85.5 424.5V438.6M87.5 427.2V439.9M90.5 424V439.1M91.5 427.1V438.8M94.5 425.7V438.3M95.5 427.1V441.2M96.5 425.6V440.7M98.5 426.5V442.1M100.5 423V441.7M103.5 427.8V440M106.5 423.7V440.5M108.5 427.3V437.3M109.5 423.9V438.6M111.5 425.9V439.1M113.5 426.2V437.2M115.5 425.1V439.2M117.5 427.2V438M118.5 422.9V436.4M119.5 423.2V439.9M122.5 425.5V437.1M124.5 423.5V439.9M126.5 426.9V439.8M128.5 424.9V441.1M129.5 423.6V440.6M132.5 422.8V436.4M135.5 424.1V437.2M136.5 423.2V439.1M139.5 425.9V436.7M141.5 425.7V437.5M144.5 422V440.1M146.5 427.2V438.4M147.5 422.6V437.2M148.5 424.7V439.8M151.5 425.7V435.5M154.5 423.9V438.7M155.5 426.9V440.1M156.5 424.5V436.9M158.5 421.8V438.3M160.5 425.9V439.8M162.5 425.5V440.9M165.5 424.1V435.2M167.5 426.9V438M170.5 424.9V440.7M172.5 423V438.5M175.5 424.9V440.7M178.5 425.8V440.2M179.5 422.6V440.8M181.5 423.4V436.5M184.5 423.9V437.6M187.5 424.6V437.1M189.5 426.5V436.1M191.5 426.7V440.5M192.5 424.7V436.3M194.5 422.9V436.3M196.5 423.1V440.9M199.5 423.3V435.6M201.5 424.9V440.3M204.5 425.9V437.4M206.5 424.2V437.2M208.5 425.7V435.7M210.5 423.6V438M211.5 423V438.2M212.5 425.6V440.6M214.5 423.2V438.3M215.5 422.5V440.3M218.5 422.7V441.5M219.5 424.7V437.2M222.5 426.6V437.2M223.5 422.6V436.9M225.5 422.6V441.7M228.5 423.6V440.2M230.5 423.5V441M232.5 427.2V436.7M235.5 425.1V436.2M236.5 425.5V436.4M239.5 425.2V436.6M241.5 426.4V439.6M244.5 425.6V440.1M246.5 428.3V437.6M248.5 426.3V437M251.5 423.7V442.1M254.5 426V440.1M257.5 424.4V440M258.5 423.9V437.7M260.5 424.7V439.5M263.5 425.4V437.4M266.5 425.5V437.2M268.5 424.4V442.2M269.5 426.7V441.6M271.5 425.4V441.3M272.5 427.5V442.3M274.5 424.5V437.1M275.5 426.7V442.6M277.5 424.7V437.2M280.5 425.4V442.5M282.5 428.7V439.8M285.5 424.8V437.6M286.5 428V441.8M288.5 425.6V438.9M291.5 424.7V442.3M292.5 428.6V437.2M293.5 426.2V440.7M296.5 424.6V440.2M297.5 425.3V440.7M300.5 426.8V437M302.5 428.8V441.9M305.5 427.8V441.2M307.5 425.2V442.8M310.5 423.5V440.1M312.5 425.1V437.4M314.5 424.1V441.9M315.5 428.3V438.4M317.5 424.6V437.6M320.5 425.5V438.7M322.5 428.6V437.1M323.5 424.9V441.2M325.5 425.7V439.3M328.5 423.5V440M330.5 423.4V440.9M331.5 423.4V441.5M332.5 424.8V437.2M335.5 424V436.7M338.5 423.1V438.9M340.5 426.8V438M342.5 428V438.5M344.5 425.7V442M347.5 423.9V441.1M349.5 426.5V437.5M352.5 425V438M355.5 423V441.4M357.5 427.8V440.4M359.5 422.8V440.5M362.5 426.8V435.9M364.5 425.3V437.6M365.5 424.6V441.4M367.5 426.4V435.8M370.5 426.1V441M373.5 423.6V441.2M374.5 423.8V436.7M375.5 423.4V437.9M376.5 421.9V436.4M379.5 423.9V436.3M381.5 423.1V436.7M383.5 421.9V435.8M385.5 423.6V438.9M388.5 426.3V435.5M389.5 423.3V436.9M390.5 423.1V438.3M391.5 425.1V435.9M392.5 423.1V439M395.5 423.3V436.7M398.5 426V435.6M400.5 424.8V439.2M402.5 424.6V439.4M403.5 422.3V437.8M405.5 422.4V435.2M407.5 426.4V436.3M409.5 423.3V436.7M410.5 422.4V435.4M411.5 426.1V439M414.5 425.3V436.6M415.5 426.2V435.6M416.5 424.9V438.9M419.5 423.8V435.4M421.5 427V440.2M423.5 421.9V437.2M426.5 423.2V436M428.5 425.1V436.2M429.5 422.4V440.6M431.5 425.6V437.5M432.5 426V436.4M434.5 423.1V440.4M436.5 423.8V438.1M437.5 427V439.3M439.5 426.1V435.5M442.5 424.7V436.1M445.5 423.6V436M446.5 424.8V441M448.5 425.2V435.9M450.5 427.2V437.8M453.5 426.4V437.7M454.5 427.3V437M456.5 424.7V441M459.5 427.2V441.5M462.5 427.6V439M465.5 423.2V437.3M466.5 425.4V438.8M469.5 423.8V436.9M472.5 424.7V436.8M474.5 424.6V438.4M475.5 424.4V439.1M477.5 427.3V436.4M480.5 423.4V440.3M481.5 425.5V437.8M484.5 424.8V437.3M486.5 427.7V441.4M488.5 424.5V441.7M490.5 425V440.5M492.5 428.6V439.4M493.5 426.2V441.8M495.5 426.3V437.6M497.5 427.1V438.6M499.5 423.6V439.2M501.5 428.8V442.5M503.5 428.5V439.1M506.5 425.2V438.2M508.5 427.9V439.7M510.5 423.4V439.7M512.5 423.6V441.5M513.5 426.7V439M514.5 425.8V441.6M516.5 424.4V437M519.5 424.5V440.6M522.5 425.9V441.3M524.5 427.6V440.4M526.5 423.7V437.9M528.5 423.5V437.8M530.5 424.1V437.3M532.5 426.6V437.5M535.5 424.6V438.5M538.5 425.3V442.1M540.5 423.6V441.2M541.5 428.6V442.4M542.5 423.6V442.3M543.5 427.3V442.7M545.5 426.5V440M547.5 424.4V440.7M550.5 425.5V439.4M553.5 425.1V440.2M555.5 423.7V442.4M557.5 426.2V440.2M559.5 425.4V437.7M561.5 425V439M564.5 427V441.4M565.5 425V439.3M567.5 424V436.4M570.5 426.4V440.9M572.5 425.7V438.2M574.5 422.8V436.7M576.5 425.2V438.5M578.5 423.1V437.5M580.5 425.9V439M582.5 427.3V437.3M584.5 423.1V436.6M587.5 427.1V438.3M590.5 424.2V438.6M593.5 422.5V439.1M595.5 425.7V440.2M597.5 426.6V438.5M598.5 423.8V440.2M601.5 425.5V441.3M603.5 422.8V439.3M605.5 423.5V441.2M607.5 425.3V440.5M609.5 426.4V435.7M612.5 422.6V440.5M615.5 427V440.6M618.5 424.2V439.5M620.5 427V439.9M622.5 426.6V436.6M624.5 425.8V436.7M626.5 427V435.7M627.5 421.7V435.9M629.5 426.6V437.1M631.5 424.7V437.9M633.5 425.2V440.6M635.5 426.1V435.6M638.5 426.7V440.8M640.5 422.6V439.4M642.5 424.2V435.8M645.5 421.9V438.4M646.5 422.9V440M649.5 424.9V439.3M651.5 425.3V435.5M654.5 426.6V438.6M656.5 422.7V437.8M659.5 422.8V436.5M660.5 422.6V438M663.5 426.4V436.4M666.5 426.1V440.3M669.5 426V436.9M672.5 424.5V437.4" stroke="#22e622" stroke-width="1"/>
<polyline points="69,431.6 69.5,431 70,430.3 70.5,431 71,431.7 71.5,432.4 72,433.1 72.5,433.8 73,434.5 73.5,435.2 74,435.5 74.5,434.8 75,434.2 75.5,433.5 76,432.9 76.5,432.2 77,431.5 77.5,430.9 78,431.1 78.5,431.8 79,432.5 79.5,433.2 80,433.8 80.5,434.5 81,435.2 81.5,435.9 82,435.3 82.5,434.6 83,434 83.5,433.3 84,432.6 84.5,431.9 85,431.3 85.5,431 86,431.6 86.5,432.3 87,433 87.5,433.7 88,434.3 88.5,435 89,435.7 89.5,435.5 90,434.9 90.5,434.2 91,433.5 91.5,432.8 92,432.1 92.5,431.4 93,430.7 93.5,431.3 94,431.9 94.5,432.6 95,433.3 95.5,433.9 96,434.6 96.5,435.2 97,435.6 97.5,434.9 98,434.2 98.5,433.5 99,432.8 99.5,432.1 100,431.4 100.5,430.6 101,430.7 101.5,431.3 102,432 102.5,432.6 103,433.3 103.5,433.9 104,434.6 104.5,435.2 105,434.7 105.5,433.9 106,433.2 106.5,432.5 107,431.8 107.5,431.1 108,430.4 108.5,429.9 109,430.6 109.5,431.2 110,431.8 110.5,432.5 111,433.1 111.5,433.8 112,434.4 112.5,434.3 113,433.6 113.5,432.9 114,432.2 114.5,431.5 115,430.7 115.5,430 116,429.3 116.5,429.7 117,430.4 117.5,431 118,431.6 118.5,432.3 119,432.9 119.5,433.6 120,434 120.5,433.3 121,432.6 121.5,431.9 122,431.2 122.5,430.4 123,429.7 123.5,429 124,429 124.5,429.6 125,430.3 125.5,430.9 126,431.6 126.5,432.2 127,432.9 127.5,433.5 128,433.1 128.5,432.4 129,431.7 129.5,431 130,430.3 130.5,429.6 131,428.9 131.5,428.4 132,429 132.5,429.7 133,430.4 133.5,431 134,431.7 134.5,432.4 135,433 135.5,433.1 136,432.4 136.5,431.8 137,431.1 137.5,430.4 138,429.7 138.5,429 139,428.4 139.5,428.7 140,429.4 140.5,430.1 141,430.8 141.5,431.4 142,432.1 142.5,432.8 143,433.4 143.5,432.7 144,432 144.5,431.4 145,430.7 145.5,430 146,429.4 146.5,428.7 147,428.6 147.5,429.3 148,430 148.5,430.7 149,431.4 149.5,432 150,432.7 150.5,433.4 151,433.2 151.5,432.5 152,431.8 152.5,431.2 153,430.5 153.5,429.9 154,429.2 154.5,428.6 155,429.3 155.5,430 156,430.7 156.5,431.4 157,432.1 157.5,432.8 158,433.5 158.5,433.7 159,433 159.5,432.4 160,431.7 160.5,431.1 161,430.4 161.5,429.7 162,429.1 162.5,429.3 163,430 163.5,430.7 164,431.4 164.5,432.1 165,432.8 165.5,433.5 166,434.2 166.5,433.5 167,432.9 167.5,432.2 168,431.5 168.5,430.9 169,430.2 169.5,429.5 170,429.3 170.5,430 171,430.6 171.5,431.3 172,432 172.5,432.7 173,433.4 173.5,434.1 174,433.9 174.5,433.2 175,432.5 175.5,431.8 176,431.2 176.5,430.5 177,429.8 177.5,429.1 178,429.7 178.5,430.4 179,431.1 179.5,431.7 180,432.4 180.5,433.1 181,433.8 181.5,434 182,433.4 182.5,432.7 183,432 183.5,431.3 184,430.6 184.5,429.9 185,429.2 185.5,429.3 186,430 186.5,430.7 187,431.3 187.5,432 188,432.6 188.5,433.3 189,434 189.5,433.4 190,432.7 190.5,432 191,431.3 191.5,430.6 192,429.9 192.5,429.2 193,428.8 193.5,429.5 194,430.1 194.5,430.8 195,431.5 195.5,432.1 196,432.8 196.5,433.4 197,433.3 197.5,432.6 198,431.9 198.5,431.2 199,430.5 199.5,429.9 200,429.2 200.5,428.5 201,429 201.5,429.6 202,430.3 202.5,431 203,431.6 203.5,432.3 204,432.9 204.5,433.3 205,432.7 205.5,432 206,431.3 206.5,430.6 207,429.9 207.5,429.2 208,428.5 208.5,428.6 209,429.2 209.5,429.9 210,430.6 210.5,431.3 211,431.9 211.5,432.6 212,433.3 212.5,432.8 213,432.2 213.5,431.5 214,430.8 214.5,430.2 215,429.5 215.5,428.8 216,428.4 216.5,429.1 217,429.8 217.5,430.4 218,431.1 218.5,431.8 219,432.5 219.5,433.2 220,433.3 220.5,432.6 221,432 221.5,431.3 222,430.6 222.5,430 223,429.3 223.5,428.7 224,429.1 224.5,429.8 225,430.5 225.5,431.2 226,431.9 226.5,432.7 227,433.4 227.5,433.9 228,433.3 228.5,432.6 229,432 229.5,431.3 230,430.7 230.5,430.1 231,429.4 231.5,429.4 232,430.1 232.5,430.8 233,431.5 233.5,432.2 234,432.9 234.5,433.7 235,434.4 235.5,434.1 236,433.4 236.5,432.8 237,432.2 237.5,431.5 238,430.9 238.5,430.2 239,429.7 239.5,430.4 240,431.1 240.5,431.9 241,432.6 241.5,433.3 242,434 242.5,434.7 243,434.9 243.5,434.3 244,433.6 244.5,433 245,432.3 245.5,431.7 246,431 246.5,430.4 247,430.7 247.5,431.4 248,432.1 248.5,432.9 249,433.6 249.5,434.3 250,435 250.5,435.6 251,435 251.5,434.3 252,433.7 252.5,433 253,432.4 253.5,431.7 254,431 254.5,430.9 255,431.6 255.5,432.3 256,433 256.5,433.7 257,434.3 257.5,435 258,435.7 258.5,435.5 259,434.8 259.5,434.1 260,433.5 260.5,432.8 261,432.1 261.5,431.5 262,430.8 262.5,431.5 263,432.1 263.5,432.8 264,433.5 264.5,434.2 265,434.8 265.5,435.5 266,435.8 266.5,435.1 267,434.4 267.5,433.7 268,433 268.5,432.3 269,431.6 269.5,431 270,431.1 270.5,431.8 271,432.5 271.5,433.1 272,433.8 272.5,434.4 273,435.1 273.5,435.8 274,435.1 274.5,434.4 275,433.7 275.5,433 276,432.3 276.5,431.6 277,430.9 277.5,430.6 278,431.3 278.5,431.9 279,432.6 279.5,433.2 280,433.9 280.5,434.5 281,435.2 281.5,435 282,434.3 282.5,433.6 283,432.9 283.5,432.2 284,431.5 284.5,430.8 285,430.1 285.5,430.7 286,431.3 286.5,432 287,432.7 287.5,433.3 288,434 288.5,434.6 289,435 289.5,434.3 290,433.6 290.5,432.9 291,432.2 291.5,431.5 292,430.8 292.5,430.1 293,430.2 293.5,430.8 294,431.5 294.5,432.2 295,432.8 295.5,433.5 296,434.2 296.5,434.8 297,434.3 297.5,433.6 298,432.9 298.5,432.3 299,431.6 299.5,430.9 300,430.2 300.5,429.8 301,430.5 301.5,431.2 302,431.8 302.5,432.5 303,433.2 303.5,433.9 304,434.5 304.5,434.5 305,433.8 305.5,433.2 306,432.5 306.5,431.8 307,431.2 307.5,430.5 308,429.8 308.5,430.3 309,431 309.5,431.7 310,432.4 310.5,433 311,433.7 311.5,434.4 312,434.9 312.5,434.2 313,433.6 313.5,432.9 314,432.2 314.5,431.6 315,430.9 315.5,430.3 316,430.2 316.5,430.9 317,431.6 317.5,432.3 318,433 318.5,433.7 319,434.4 319.5,435.1 320,434.7 320.5,434 321,433.4 321.5,432.7 322,432.1 322.5,431.4 323,430.7 323.5,430.2 324,430.9 324.5,431.6 325,432.3 325.5,433 326,433.7 326.5,434.4 327,435.1 327.5,435.2 328,434.5 328.5,433.8 329,433.2 329.5,432.5 330,431.8 330.5,431.2 331,430.5 331.5,430.9 332,431.5 332.5,432.2 333,432.9 333.5,433.6 334,434.3 334.5,434.9 335,435.5 335.5,434.8 336,434.2 336.5,433.5 337,432.8 337.5,432.1 338,431.4 338.5,430.8 339,430.6 339.5,431.3 340,432 340.5,432.6 341,433.3 341.5,433.9 342,434.6 342.5,435.3 343,435 343.5,434.3 344,433.6 344.5,432.9 345,432.2 345.5,431.5 346,430.8 346.5,430.1 347,430.8 347.5,431.5 348,432.1 348.5,432.8 349,433.4 349.5,434.1 350,434.7 350.5,434.9 351,434.2 351.5,433.5 352,432.7 352.5,432 353,431.3 353.5,430.6 354,429.9 354.5,430.1 355,430.8 355.5,431.4 356,432 356.5,432.7 357,433.3 357.5,434 358,434.6 358.5,433.9 359,433.2 359.5,432.5 360,431.7 360.5,431 361,430.3 361.5,429.6 362,429.3 362.5,429.9 363,430.6 363.5,431.2 364,431.9 364.5,432.5 365,433.1 365.5,433.8 366,433.5 366.5,432.8 367,432.1 367.5,431.4 368,430.7 368.5,430 369,429.3 369.5,428.6 370,429.1 370.5,429.8 371,430.4 371.5,431.1 372,431.7 372.5,432.4 373,433 373.5,433.3 374,432.6 374.5,431.9 375,431.2 375.5,430.5 376,429.8 376.5,429.1 377,428.4 377.5,428.5 378,429.1 378.5,429.8 379,430.4 379.5,431.1 380,431.8 380.5,432.4 381,433.1 381.5,432.5 382,431.8 382.5,431.1 383,430.4 383.5,429.8 384,429.1 384.5,428.4 385,428 385.5,428.7 386,429.4 386.5,430.1 387,430.7 387.5,431.4 388,432.1 388.5,432.8 389,432.7 389.5,432 390,431.3 390.5,430.7 391,430 391.5,429.3 392,428.7 392.5,428 393,428.5 393.5,429.2 394,429.9 394.5,430.6 395,431.3 395.5,432 396,432.7 396.5,433.1 397,432.4 397.5,431.8 398,431.1 398.5,430.5 399,429.8 399.5,429.2 400,428.5 400.5,428.6 401,429.3 401.5,430 402,430.7 402.5,431.4 403,432.1 403.5,432.8 404,433.5 404.5,433 405,432.4 405.5,431.7 406,431.1 406.5,430.4 407,429.8 407.5,429.1 408,428.7 408.5,429.4 409,430.1 409.5,430.8 410,431.5 410.5,432.2 411,432.9 411.5,433.6 412,433.7 412.5,433 413,432.4 413.5,431.7 414,431 414.5,430.4 415,429.7 415.5,429.1 416,429.5 416.5,430.2 417,430.9 417.5,431.6 418,432.3 418.5,433 419,433.7 419.5,434.2 420,433.5 420.5,432.9 421,432.2 421.5,431.6 422,430.9 422.5,430.2 423,429.6 423.5,429.5 424,430.2 424.5,430.9 425,431.5 425.5,432.2 426,432.9 426.5,433.6 427,434.3 427.5,433.9 428,433.3 428.5,432.6 429,431.9 429.5,431.2 430,430.5 430.5,429.9 431,429.3 431.5,430 432,430.6 432.5,431.3 433,432 433.5,432.7 434,433.3 434.5,434 435,434.1 435.5,433.4 436,432.8 436.5,432.1 437,431.4 437.5,430.7 438,430 438.5,429.3 439,429.6 439.5,430.3 440,430.9 440.5,431.6 441,432.3 441.5,432.9 442,433.6 442.5,434.2 443,433.5 443.5,432.8 444,432.1 444.5,431.4 445,430.7 445.5,430.1 446,429.4 446.5,429.2 447,429.8 447.5,430.5 448,431.1 448.5,431.8 449,432.5 449.5,433.1 450,433.8 450.5,433.5 451,432.9 451.5,432.2 452,431.5 452.5,430.8 453,430.1 453.5,429.4 454,428.7 454.5,429.4 455,430.1 455.5,430.7 456,431.4 456.5,432.1 457,432.7 457.5,433.4 458,433.7 458.5,433 459,432.3 459.5,431.6 460,430.9 460.5,430.3 461,429.6 461.5,428.9 462,429.1 462.5,429.8 463,430.5 463.5,431.2 464,431.8 464.5,432.5 465,433.2 465.5,433.9 466,433.3 466.5,432.6 467,432 467.5,431.3 468,430.6 468.5,430 469,429.3 469.5,429 470,429.7 470.5,430.4 471,431.1 471.5,431.8 472,432.5 472.5,433.2 473,433.9 473.5,433.8 474,433.1 474.5,432.5 475,431.8 475.5,431.2 476,430.5 476.5,429.9 477,429.3 477.5,429.9 478,430.6 478.5,431.3 479,432 479.5,432.7 480,433.4 480.5,434.1 481,434.5 481.5,433.9 482,433.2 482.5,432.6 483,431.9 483.5,431.3 484,430.7 484.5,430 485,430.1 485.5,430.8 486,431.6 486.5,432.3 487,433 487.5,433.7 488,434.4 488.5,435.1 489,434.7 489.5,434 490,433.4 490.5,432.7 491,432.1 491.5,431.5 492,430.8 492.5,430.4 493,431.2 493.5,431.9 494,432.6 494.5,433.3 495,434 495.5,434.7 496,435.4 496.5,435.4 497,434.8 497.5,434.1 498,433.5 498.5,432.8 499,432.2 499.5,431.5 500,430.9 500.5,431.4 501,432.1 501.5,432.7 502,433.4 502.5,434.1 503,434.8 503.5,435.5 504,436 504.5,435.4 505,434.7 505.5,434 506,433.4 506.5,432.7 507,432 507.5,431.4 508,431.3 508.5,432 509,432.7 509.5,433.4 510,434.1 510.5,434.7 511,435.4 511.5,436.1 512,435.7 512.5,435 513,434.3 513.5,433.7 514,433 514.5,432.3 515,431.6 515.5,431.1 516,431.7 516.5,432.4 517,433.1 517.5,433.7 518,434.4 518.5,435.1 519,435.7 519.5,435.8 520,435.1 520.5,434.4 521,433.7 521.5,433 522,432.3 522.5,431.6 523,430.9 523.5,431.2 524,431.9 524.5,432.5 525,433.2 525.5,433.8 526,434.5 526.5,435.1 527,435.7 527.5,435 528,434.3 528.5,433.6 529,432.9 529.5,432.2 530,431.5 530.5,430.8 531,430.6 531.5,431.2 532,431.9 532.5,432.5 533,433.2 533.5,433.8 534,434.5 534.5,435.1 535,434.8 535.5,434.1 536,433.4 536.5,432.7 537,432 537.5,431.3 538,430.6 538.5,429.9 539,430.6 539.5,431.2 540,431.9 540.5,432.5 541,433.2 541.5,433.8 542,434.5 542.5,434.7 543,434 543.5,433.3 544,432.6 544.5,431.9 545,431.2 545.5,430.5 546,429.8 546.5,430 547,430.7 547.5,431.3 548,432 548.5,432.7 549,433.3 549.5,434 550,434.6 550.5,434 551,433.3 551.5,432.6 552,431.9 552.5,431.2 553,430.5 553.5,429.9 554,429.6 554.5,430.3 555,431 555.5,431.6 556,432.3 556.5,433 557,433.7 557.5,434.3 558,434.2 558.5,433.5 559,432.8 559.5,432.1 560,431.5 560.5,430.8 561,430.1 561.5,429.5 562,430.1 562.5,430.8 563,431.5 563.5,432.1 564,432.8 564.5,433.5 565,434.2 565.5,434.5 566,433.8 566.5,433.2 567,432.5 567.5,431.8 568,431.2 568.5,430.5 569,429.9 569.5,430 570,430.7 570.5,431.4 571,432.1 571.5,432.8 572,433.5 572.5,434.1 573,434.8 573.5,434.3 574,433.6 574.5,433 575,432.3 575.5,431.6 576,431 576.5,430.3 577,429.9 577.5,430.6 578,431.3 578.5,432 579,432.7 579.5,433.4 580,434.1 580.5,434.8 581,434.7 581.5,434 582,433.3 582.5,432.7 583,432 583.5,431.3 584,430.6 584.5,430 585,430.5 585.5,431.2 586,431.8 586.5,432.5 587,433.2 587.5,433.9 588,434.5 588.5,434.9 589,434.3 589.5,433.6 590,432.9 590.5,432.2 591,431.5 591.5,430.8 592,430.1 592.5,430.2 593,430.8 593.5,431.5 594,432.1 594.5,432.8 595,433.5 595.5,434.1 596,434.8 596.5,434.3 597,433.6 597.5,432.9 598,432.2 598.5,431.5 599,430.8 599.5,430.1 600,429.6 600.5,430.3 601,430.9 601.5,431.6 602,432.2 602.5,432.9 603,433.5 603.5,434.2 604,434.2 604.5,433.4 605,432.7 605.5,432 606,431.3 606.5,430.6 607,429.9 607.5,429.2 608,429.6 608.5,430.2 609,430.8 609.5,431.5 610,432.1 610.5,432.8 611,433.4 611.5,433.9 612,433.2 612.5,432.5 613,431.8 613.5,431 614,430.3 614.5,429.6 615,428.9 615.5,428.8 616,429.4 616.5,430.1 617,430.7 617.5,431.4 618,432 618.5,432.7 619,433.3 619.5,432.9 620,432.2 620.5,431.5 621,430.8 621.5,430.1 622,429.4 622.5,428.7 623,428.1 623.5,428.7 624,429.4 624.5,430 625,430.7 625.5,431.4 626,432 626.5,432.7 627,432.8 627.5,432.1 628,431.4 628.5,430.7 629,430 629.5,429.3 630,428.6 630.5,427.9 631,428.2 631.5,428.9 632,429.6 632.5,430.2 633,430.9 633.5,431.6 634,432.3 634.5,432.9 635,432.2 635.5,431.5 636,430.9 636.5,430.2 637,429.5 637.5,428.8 638,428.2 638.5,428 639,428.7 639.5,429.3 640,430 640.5,430.7 641,431.4 641.5,432.1 642,432.8 642.5,432.6 643,431.9 643.5,431.3 644,430.6 644.5,429.9 645,429.3 645.5,428.6 646,428 646.5,428.7 647,429.4 647.5,430.1 648,430.8 648.5,431.5 649,432.2 649.5,432.9 650,433.2 650.5,432.5 651,431.9 651.5,431.2 652,430.6 652.5,429.9 653,429.3 653.5,428.6 654,428.8 654.5,429.6 655,430.3 655.5,431 656,431.7 656.5,432.4 657,433.1 657.5,433.8 658,433.2 658.5,432.6 659,431.9 659.5,431.3 660,430.6 660.5,430 661,429.3 661.5,429.1 662,429.8 662.5,430.5 663,431.2 663.5,431.9 664,432.6 664.5,433.3 665,434 665.5,433.9 666,433.3 666.5,432.6 667,432 667.5,431.3 668,430.7 668.5,430 669,429.4 669.5,430 670,430.7 670.5,431.4 671,432 671.5,432.7 672,433.4 672.5,434.1" fill="none" stroke="#22e622" stroke-width="7"/>
<polyline points="69,431.6 69.5,431 70,430.3 70.5,431 71,431.7 71.5,432.4 72,433.1 72.5,433.8 73,434.5 73.5,435.2 74,435.5 74.5,434.8 75,434.2 75.5,433.5 76,432.9 76.5,432.2 77,431.5 77.5,430.9 78,431.1 78.5,431.8 79,432.5 79.5,433.2 80,433.8 80.5,434.5 81,435.2 81.5,435.9 82,435.3 82.5,434.6 83,434 83.5,433.3 84,432.6 84.5,431.9 85,431.3 85.5,431 86,431.6 86.5,432.3 87,433 87.5,433.7 88,434.3 88.5,435 89,435.7 89.5,435.5 90,434.9 90.5,434.2 91,433.5 91.5,432.8 92,432.1 92.5,431.4 93,430.7 93.5,431.3 94,431.9 94.5,432.6 95,433.3 95.5,433.9 96,434.6 96.5,435.2 97,435.6 97.5,434.9 98,434.2 98.5,433.5 99,432.8 99.5,432.1 100,431.4 100.5,430.6 101,430.7 101.5,431.3 102,432 102.5,432.6 103,433.3 103.5,433.9 104,434.6 104.5,435.2 105,434.7 105.5,433.9 106,433.2 106.5,432.5 107,431.8 107.5,431.1 108,430.4 108.5,429.9 109,430.6 109.5,431.2 110,431.8 110.5,432.5 111,433.1 111.5,433.8 112,434.4 112.5,434.3 113,433.6 113.5,432.9 114,432.2 114.5,431.5 115,430.7 115.5,430 116,429.3 116.5,429.7 117,430.4 117.5,431 118,431.6 118.5,432.3 119,432.9 119.5,433.6 120,434 120.5,433.3 121,432.6 121.5,431.9 122,431.2 122.5,430.4 123,429.7 123.5,429 124,429 124.5,429.6 125,430.3 125.5,430.9 126,431.6 126.5,432.2 127,432.9 127.5,433.5 128,433.1 128.5,432.4 129,431.7 129.5,431 130,430.3 130.5,429.6 131,428.9 131.5,428.4 132,429 132.5,429.7 133,430.4 133.5,431 134,431.7 134.5,432.4 135,433 135.5,433.1 136,432.4 136.5,431.8 137,431.1 137.5,430.4 138,429.7 138.5,429 139,428.4 139.5,428.7 140,429.4 140.5,430.1 141,430.8 141.5,431.4 142,432.1 142.5,432.8 143,433.4 143.5,432.7 144,432 144.5,431.4 145,430.7 145.5,430 146,429.4 146.5,428.7 147,428.6 147.5,429.3 148,430 148.5,430.7 149,431.4 149.5,432 150,432.7 150.5,433.4 151,433.2 151.5,432.5 152,431.8 152.5,431.2 153,430.5 153.5,429.9 154,429.2 154.5,428.6 155,429.3 155.5,430 156,430.7 156.5,431.4 157,432.1 157.5,432.8 158,433.5 158.5,433.7 159,433 159.5,432.4 160,431.7 160.5,431.1 161,430.4 161.5,429.7 162,429.1 162.5,429.3 163,430 163.5,430.7 164,431.4 164.5,432.1 165,432.8 165.5,433.5 166,434.2 166.5,433.5 167,432.9 167.5,432.2 168,431.5 168.5,430.9 169,430.2 169.5,429.5 170,429.3 170.5,430 171,430.6 171.5,431.3 172,432 172.5,432.7 173,433.4 173.5,434.1 174,433.9 174.5,433.2 175,432.5 175.5,431.8 176,431.2 176.5,430.5 177,429.8 177.5,429.1 178,429.7 178.5,430.4 179,431.1 179.5,431.7 180,432.4 180.5,433.1 181,433.8 181.5,434 182,433.4 182.5,432.7 183,432 183.5,431.3 184,430.6 184.5,429.9 185,429.2 185.5,429.3 186,430 186.5,430.7 187,431.3 187.5,432 188,432.6 188.5,433.3 189,434 189.5,433.4 190,432.7 190.5,432 191,431.3 191.5,430.6 192,429.9 192.5,429.2 193,428.8 193.5,429.5 194,430.1 194.5,430.8 195,431.5 195.5,432.1 196,432.8 196.5,433.4 197,433.3 197.5,432.6 198,431.9 198.5,431.2 199,430.5 199.5,429.9 200,429.2 200.5,428.5 201,429 201.5,429.6 202,430.3 202.5,431 203,431.6 203.5,432.3 204,432.9 204.5,433.3 205,432.7 205.5,432 206,431.3 206.5,430.6 207,429.9 207.5,429.2 208,428.5 208.5,428.6 209,429.2 209.5,429.9 210,430.6 210.5,431.3 211,431.9 211.5,432.6 212,433.3 212.5,432.8 213,432.2 213.5,431.5 214,430.8 214.5,430.2 215,429.5 215.5,428.8 216,428.4 216.5,429.1 217,429.8 217.5,430.4 218,431.1 218.5,431.8 219,432.5 219.5,433.2 220,433.3 220.5,432.6 221,432 221.5,431.3 222,430.6 222.5,430 223,429.3 223.5,428.7 224,429.1 224.5,429.8 225,430.5 225.5,431.2 226,431.9 226.5,432.7 227,433.4 227.5,433.9 228,433.3 228.5,432.6 229,432 229.5,431.3 230,430.7 230.5,430.1 231,429.4 231.5,429.4 232,430.1 232.5,430.8 233,431.5 233.5,432.2 234,432.9 234.5,433.7 235,434.4 235.5,434.1 236,433.4 236.5,432.8 237,432.2 237.5,431.5 238,430.9 238.5,430.2 239,429.7 239.5,430.4 240,431.1 240.5,431.9 241,432.6 241.5,433.3 242,434 242.5,434.7 243,434.9 243.5,434.3 244,433.6 244.5,433 245,432.3 245.5,431.7 246,431 246.5,430.4 247,430.7 247.5,431.4 248,432.1 248.5,432.9 249,433.6 249.5,434.3 250,435 250.5,435.6 251,435 251.5,434.3 252,433.7 252.5,433 253,432.4 253.5,431.7 254,431 254.5,430.9 255,431.6 255.5,432.3 256,433 256.5,433.7 257,434.3 257.5,435 258,435.7 258.5,435.5 259,434.8 259.5,434.1 260,433.5 260.5,432.8 261,432.1 261.5,431.5 262,430.8 262.5,431.5 263,432.1 263.5,432.8 264,433.5 264.5,434.2 265,434.8 265.5,435.5 266,435.8 266.5,435.1 267,434.4 267.5,433.7 268,433 268.5,432.3 269,431.6 269.5,431 270,431.1 270.5,431.8 271,432.5 271.5,433.1 272,433.8 272.5,434.4 273,435.1 273.5,435.8 274,435.1 274.5,434.4 275,433.7 275.5,433 276,432.3 276.5,431.6 277,430.9 277.5,430.6 278,431.3 278.5,431.9 279,432.6 279.5,433.2 280,433.9 280.5,434.5 281,435.2 281.5,435 282,434.3 282.5,433.6 283,432.9 283.5,432.2 284,431.5 284.5,430.8 285,430.1 285.5,430.7 286,431.3 286.5,432 287,432.7 287.5,433.3 288,434 288.5,434.6 289,435 289.5,434.3 290,433.6 290.5,432.9 291,432.2 291.5,431.5 292,430.8 292.5,430.1 293,430.2 293.5,430.8 294,431.5 294.5,432.2 295,432.8 295.5,433.5 296,434.2 296.5,434.8 297,434.3 297.5,433.6 298,432.9 298.5,432.3 299,431.6 299.5,430.9 300,430.2 300.5,429.8 301,430.5 301.5,431.2 302,431.8 302.5,432.5 303,433.2 303.5,433.9 304,434.5 304.5,434.5 305,433.8 305.5,433.2 306,432.5 306.5,431.8 307,431.2 307.5,430.5 308,429.8 308.5,430.3 309,431 309.5,431.7 310,432.4 310.5,433 311,433.7 311.5,434.4 312,434.9 312.5,434.2 313,433.6 313.5,432.9 314,432.2 314.5,431.6 315,430.9 315.5,430.3 316,430.2 316.5,430.9 317,431.6 317.5,432.3 318,433 318.5,433.7 319,434.4 319.5,435.1 320,434.7 320.5,434 321,433.4 321.5,432.7 322,432.1 322.5,431.4 323,430.7 323.5,430.2 324,430.9 324.5,431.6 325,432.3 325.5,433 326,433.7 326.5,434.4 327,435.1 327.5,435.2 328,434.5 328.5,433.8 329,433.2 329.5,432.5 330,431.8 330.5,431.2 331,430.5 331.5,430.9 332,431.5 332.5,432.2 333,432.9 333.5,433.6 334,434.3 334.5,434.9 335,435.5 335.5,434.8 336,434.2 336.5,433.5 337,432.8 337.5,432.1 338,431.4 338.5,430.8 339,430.6 339.5,431.3 340,432 340.5,432.6 341,433.3 341.5,433.9 342,434.6 342.5,435.3 343,435 343.5,434.3 344,433.6 344.5,432.9 345,432.2 345.5,431.5 346,430.8 346.5,430.1 347,430.8 347.5,431.5 348,432.1 348.5,432.8 349,433.4 349.5,434.1 350,434.7 350.5,434.9 351,434.2 351.5,433.5 352,432.7 352.5,432 353,431.3 353.5,430.6 354,429.9 354.5,430.1 355,430.8 355.5,431.4 356,432 356.5,432.7 357,433.3 357.5,434 358,434.6 358.5,433.9 359,433.2 359.5,432.5 360,431.7 360.5,431 361,430.3 361.5,429.6 362,429.3 362.5,429.9 363,430.6 363.5,431.2 364,431.9 364.5,432.5 365,433.1 365.5,433.8 366,433.5 366.5,432.8 367,432.1 367.5,431.4 368,430.7 368.5,430 369,429.3 369.5,428.6 370,429.1 370.5,429.8 371,430.4 371.5,431.1 372,431.7 372.5,432.4 373,433 373.5,433.3 374,432.6 374.5,431.9 375,431.2 375.5,430.5 376,429.8 376.5,429.1 377,428.4 377.5,428.5 378,429.1 378.5,429.8 379,430.4 379.5,431.1 380,431.8 380.5,432.4 381,433.1 381.5,432.5 382,431.8 382.5,431.1 383,430.4 383.5,429.8 384,429.1 384.5,428.4 385,428 385.5,428.7 386,429.4 386.5,430.1 387,430.7 387.5,431.4 388,432.1 388.5,432.8 389,432.7 389.5,432 390,431.3 390.5,430.7 391,430 391.5,429.3 392,428.7 392.5,428 393,428.5 393.5,429.2 394,429.9 394.5,430.6 395,431.3 395.5,432 396,432.7 396.5,433.1 397,432.4 397.5,431.8 398,431.1 398.5,430.5 399,429.8 399.5,429.2 400,428.5 400.5,428.6 401,429.3 401.5,430 402,430.7 402.5,431.4 403,432.1 403.5,432.8 404,433.5 404.5,433 405,432.4 405.5,431.7 406,431.1 406.5,430.4 407,429.8 407.5,429.1 408,428.7 408.5,429.4 409,430.1 409.5,430.8 410,431.5 410.5,432.2 411,432.9 411.5,433.6 412,433.7 412.5,433 413,432.4 413.5,431.7 414,431 414.5,430.4 415,429.7 415.5,429.1 416,429.5 416.5,430.2 417,430.9 417.5,431.6 418,432.3 418.5,433 419,433.7 419.5,434.2 420,433.5 420.5,432.9 421,432.2 421.5,431.6 422,430.9 422.5,430.2 423,429.6 423.5,429.5 424,430.2 424.5,430.9 425,431.5 425.5,432.2 426,432.9 426.5,433.6 427,434.3 427.5,433.9 428,433.3 428.5,432.6 429,431.9 429.5,431.2 430,430.5 430.5,429.9 431,429.3 431.5,430 432,430.6 432.5,431.3 433,432 433.5,432.7 434,433.3 434.5,434 435,434.1 435.5,433.4 436,432.8 436.5,432.1 437,431.4 437.5,430.7 438,430 438.5,429.3 439,429.6 439.5,430.3 440,430.9 440.5,431.6 441,432.3 441.5,432.9 442,433.6 442.5,434.2 443,433.5 443.5,432.8 444,432.1 444.5,431.4 445,430.7 445.5,430.1 446,429.4 446.5,429.2 447,429.8 447.5,430.5 448,431.1 448.5,431.8 449,432.5 449.5,433.1 450,433.8 450.5,433.5 451,432.9 451.5,432.2 452,431.5 452.5,430.8 453,430.1 453.5,429.4 454,428.7 454.5,429.4 455,430.1 455.5,430.7 456,431.4 456.5,432.1 457,432.7 457.5,433.4 458,433.7 458.5,433 459,432.3 459.5,431.6 460,430.9 460.5,430.3 461,429.6 461.5,428.9 462,429.1 462.5,429.8 463,430.5 463.5,431.2 464,431.8 464.5,432.5 465,433.2 465.5,433.9 466,433.3 466.5,432.6 467,432 467.5,431.3 468,430.6 468.5,430 469,429.3 469.5,429 470,429.7 470.5,430.4 471,431.1 471.5,431.8 472,432.5 472.5,433.2 473,433.9 473.5,433.8 474,433.1 474.5,432.5 475,431.8 475.5,431.2 476,430.5 476.5,429.9 477,429.3 477.5,429.9 478,430.6 478.5,431.3 479,432 479.5,432.7 480,433.4 480.5,434.1 481,434.5 481.5,433.9 482,433.2 482.5,432.6 483,431.9 483.5,431.3 484,430.7 484.5,430 485,430.1 485.5,430.8 486,431.6 486.5,432.3 487,433 487.5,433.7 488,434.4 488.5,435.1 489,434.7 489.5,434 490,433.4 490.5,432.7 491,432.1 491.5,431.5 492,430.8 492.5,430.4 493,431.2 493.5,431.9 494,432.6 494.5,433.3 495,434 495.5,434.7 496,435.4 496.5,435.4 497,434.8 497.5,434.1 498,433.5 498.5,432.8 499,432.2 499.5,431.5 500,430.9 500.5,431.4 501,432.1 501.5,432.7 502,433.4 502.5,434.1 503,434.8 503.5,435.5 504,436 504.5,435.4 505,434.7 505.5,434 506,433.4 506.5,432.7 507,432 507.5,431.4 508,431.3 508.5,432 509,432.7 509.5,433.4 510,434.1 510.5,434.7 511,435.4 511.5,436.1 512,435.7 512.5,435 513,434.3 513.5,433.7 514,433 514.5,432.3 515,431.6 515.5,431.1 516,431.7 516.5,432.4 517,433.1 517.5,433.7 518,434.4 518.5,435.1 519,435.7 519.5,435.8 520,435.1 520.5,434.4 521,433.7 521.5,433 522,432.3 522.5,431.6 523,430.9 523.5,431.2 524,431.9 524.5,432.5 525,433.2 525.5,433.8 526,434.5 526.5,435.1 527,435.7 527.5,435 528,434.3 528.5,433.6 529,432.9 529.5,432.2 530,431.5 530.5,430.8 531,430.6 531.5,431.2 532,431.9 532.5,432.5 533,433.2 533.5,433.8 534,434.5 534.5,435.1 535,434.8 535.5,434.1 536,433.4 536.5,432.7 537,432 537.5,431.3 538,430.6 538.5,429.9 539,430.6 539.5,431.2 540,431.9 540.5,432.5 541,433.2 541.5,433.8 542,434.5 542.5,434.7 543,434 543.5,433.3 544,432.6 544.5,431.9 545,431.2 545.5,430.5 546,429.8 546.5,430 547,430.7 547.5,431.3 548,432 548.5,432.7 549,433.3 549.5,434 550,434.6 550.5,434 551,433.3 551.5,432.6 552,431.9 552.5,431.2 553,430.5 553.5,429.9 554,429.6 554.5,430.3 555,431 555.5,431.6 556,432.3 556.5,433 557,433.7 557.5,434.3 558,434.2 558.5,433.5 559,432.8 559.5,432.1 560,431.5 560.5,430.8 561,430.1 561.5,429.5 562,430.1 562.5,430.8 563,431.5 563.5,432.1 564,432.8 564.5,433.5 565,434.2 565.5,434.5 566,433.8 566.5,433.2 567,432.5 567.5,431.8 568,431.2 568.5,430.5 569,429.9 569.5,430 570,430.7 570.5,431.4 571,432.1 571.5,432.8 572,433.5 572.5,434.1 573,434.8 573.5,434.3 574,433.6 574.5,433 575,432.3 575.5,431.6 576,431 576.5,430.3 577,429.9 577.5,430.6 578,431.3 578.5,432 579,432.7 579.5,433.4 580,434.1 580.5,434.8 581,434.7 581.5,434 582,433.3 582.5,432.7 583,432 583.5,431.3 584,430.6 584.5,430 585,430.5 585.5,431.2 586,431.8 586.5,432.5 587,433.2 587.5,433.9 588,434.5 588.5,434.9 589,434.3 589.5,433.6 590,432.9 590.5,432.2 591,431.5 591.5,430.8 592,430.1 592.5,430.2 593,430.8 593.5,431.5 594,432.1 594.5,432.8 595,433.5 595.5,434.1 596,434.8 596.5,434.3 597,433.6 597.5,432.9 598,432.2 598.5,431.5 599,430.8 599.5,430.1 600,429.6 600.5,430.3 601,430.9 601.5,431.6 602,432.2 602.5,432.9 603,433.5 603.5,434.2 604,434.2 604.5,433.4 605,432.7 605.5,432 606,431.3 606.5,430.6 607,429.9 607.5,429.2 608,429.6 608.5,430.2 609,430.8 609.5,431.5 610,432.1 610.5,432.8 611,433.4 611.5,433.9 612,433.2 612.5,432.5 613,431.8 613.5,431 614,430.3 614.5,429.6 615,428.9 615.5,428.8 616,429.4 616.5,430.1 617,430.7 617.5,431.4 618,432 618.5,432.7 619,433.3 619.5,432.9 620,432.2 620.5,431.5 621,430.8 621.5,430.1 622,429.4 622.5,428.7 623,428.1 623.5,428.7 624,429.4 624.5,430 625,430.7 625.5,431.4 626,432 626.5,432.7 627,432.8 627.5,432.1 628,431.4 628.5,430.7 629,430 629.5,429.3 630,428.6 630.5,427.9 631,428.2 631.5,428.9 632,429.6 632.5,430.2 633,430.9 633.5,431.6 634,432.3 634.5,432.9 635,432.2 635.5,431.5 636,430.9 636.5,430.2 637,429.5 637.5,428.8 638,428.2 638.5,428 639,428.7 639.5,429.3 640,430 640.5,430.7 641,431.4 641.5,432.1 642,432.8 642.5,432.6 643,431.9 643.5,431.3 644,430.6 644.5,429.9 645,429.3 645.5,428.6 646,428 646.5,428.7 647,429.4 647.5,430.1 648,430.8 648.5,431.5 649,432.2 649.5,432.9 650,433.2 650.5,432.5 651,431.9 651.5,431.2 652,430.6 652.5,429.9 653,429.3 653.5,428.6 654,428.8 654.5,429.6 655,430.3 655.5,431 656,431.7 656.5,432.4 657,433.1 657.5,433.8 658,433.2 658.5,432.6 659,431.9 659.5,431.3 660,430.6 660.5,430 661,429.3 661.5,429.1 662,429.8 662.5,430.5 663,431.2 663.5,431.9 664,432.6 664.5,433.3 665,434 665.5,433.9 666,433.3 666.5,432.6 667,432 667.5,431.3 668,430.7 668.5,430 669,429.4 669.5,430 670,430.7 670.5,431.4 671,432 671.5,432.7 672,433.4 672.5,434.1" fill="none" stroke="#c8ffc8" stroke-width="1.7"/>
<rect x="672" y="415" width="595" height="19" fill="#22e622"/>
<path d="M672.5 407.9V416M672.5 433V440.1M673.5 410.8V416M673.5 433V437.4M674.5 406.3V416M674.5 433V442.8M675.5 412.7V416M676.5 433V439.2M677.5 410.5V416M677.5 433V438.2M678.5 411.2V416M678.5 433V438.9M679.5 409.9V416M679.5 433V436.6M680.5 412.7V416M680.5 433V438.8M681.5 407.7V416M681.5 433V442.2M682.5 411V416M682.5 433V436.4M683.5 411.8V416M683.5 433V439M684.5 433V437.6M685.5 433V441.7M686.5 408V416M686.5 433V445M687.5 411.3V416M688.5 407V416M688.5 433V438M689.5 407V416M689.5 433V439.6M690.5 407.1V416M690.5 433V438.2M691.5 411.4V416M691.5 433V441.3M692.5 433V441.9M693.5 411.2V416M693.5 433V436.8M694.5 410.6V416M695.5 406.4V416M695.5 433V436.3M696.5 410.6V416M697.5 410.6V416M697.5 433V436.2M698.5 412.5V416M698.5 433V438.4M699.5 408.6V416M700.5 410.8V416M700.5 433V439.5M701.5 410.1V416M701.5 433V438.2M702.5 412.1V416M702.5 433V438.6M703.5 409.3V416M703.5 433V437.3M704.5 406.8V416M704.5 433V440.3M705.5 410.7V416M705.5 433V439M707.5 407.4V416M707.5 433V440.6M708.5 433V436.1M710.5 406.5V416M710.5 433V440.8M711.5 411.1V416M711.5 433V437.9M712.5 407.8V416M712.5 433V437.1M713.5 408.9V416M713.5 433V440.3M714.5 433V441.7M715.5 407.4V416M715.5 433V439.8M716.5 411.3V416M716.5 433V439.7M717.5 412.4V416M717.5 433V437.1M718.5 433V441.7M719.5 412V416M719.5 433V441.8M720.5 410.5V416M720.5 433V441.2M721.5 407.9V416M722.5 410V416M722.5 433V440.4M723.5 407V416M723.5 433V438M724.5 408.1V416M724.5 433V436.2M725.5 410.5V416M725.5 433V441.6M726.5 410.3V416M726.5 433V438.2M727.5 433V437.7M728.5 407.4V416M728.5 433V441.7M729.5 411.2V416M730.5 433V445.2M731.5 411.6V416M731.5 433V436.6M732.5 405.9V416M732.5 433V436.1M733.5 411.9V416M733.5 433V441.8M734.5 410.3V416M735.5 433V437.1M736.5 405.7V416M736.5 433V436.2M737.5 409.8V416M737.5 433V438.4M738.5 433V436.9M739.5 413V416M739.5 433V436M740.5 409V416M742.5 410.8V416M743.5 407.5V416M743.5 433V437.9M744.5 411.9V416M744.5 433V445.3M745.5 412V416M746.5 410V416M746.5 433V436.6M747.5 433V440.4M748.5 412.3V416M748.5 433V439.9M750.5 433V439.4M751.5 407V416M751.5 433V436.7M752.5 412.6V416M752.5 433V436.8M753.5 405.4V416M753.5 433V441.1M754.5 409.7V416M754.5 433V441.6M755.5 412.2V416M755.5 433V437M756.5 411.2V416M757.5 406.2V416M757.5 433V441.1M758.5 433V440.1M759.5 407.2V416M759.5 433V440.1M760.5 412V416M760.5 433V438.2M761.5 411.9V416M762.5 433V439.5M763.5 410V416M763.5 433V437.7M764.5 433V438.2M765.5 407V416M765.5 433V437.8M766.5 433V436.1M767.5 412.2V416M767.5 433V441.6M768.5 411.3V416M769.5 407.4V416M770.5 406.4V416M770.5 433V444.7M771.5 406.8V416M772.5 404.8V416M773.5 407.8V416M773.5 433V440M774.5 433V439.9M775.5 410.5V416M775.5 433V439.3M776.5 411.9V416M776.5 433V438.5M777.5 410V416M777.5 433V440.9M778.5 410.3V416M778.5 433V440M779.5 406.5V416M779.5 433V436.5M780.5 410V416M781.5 411.9V416M782.5 410V416M782.5 433V441.1M783.5 412.6V416M783.5 433V440.5M784.5 408.3V416M784.5 433V442.3M785.5 408.9V416M786.5 411.1V416M786.5 433V440.1M787.5 409.2V416M787.5 433V439M788.5 409.5V416M789.5 407.8V416M789.5 433V440.1M790.5 433V440.3M791.5 412.6V416M791.5 433V440.2M792.5 406.2V416M792.5 433V440.4M793.5 406.9V416M793.5 433V440.2M794.5 406.9V416M795.5 406.9V416M795.5 433V441.7M796.5 409.6V416M796.5 433V439.5M797.5 409.5V416M797.5 433V439.2M798.5 407.5V416M799.5 410.4V416M799.5 433V440.9M800.5 409.8V416M800.5 433V440.5M801.5 407.5V416M801.5 433V440.2M802.5 412.8V416M802.5 433V441.8M803.5 412.2V416M803.5 433V438.2M804.5 406.7V416M804.5 433V438.5M805.5 411.9V416M806.5 407V416M806.5 433V440.6M807.5 433V438.4M808.5 410.3V416M808.5 433V440.6M809.5 409V416M809.5 433V437.8M810.5 433V439.5M811.5 410.7V416M811.5 433V436.7M812.5 410.5V416M813.5 407V416M813.5 433V436.2M814.5 407.6V416M814.5 433V438.3M815.5 407.1V416M815.5 433V436.6M816.5 404.2V416M816.5 433V436.4M817.5 410V416M817.5 433V439.1M818.5 409.5V416M818.5 433V441.3M819.5 409.1V416M820.5 412.2V416M820.5 433V438M821.5 406.3V416M821.5 433V440M822.5 411.4V416M822.5 433V438.2M823.5 406.3V416M823.5 433V438.8M824.5 408.1V416M824.5 433V439.7M825.5 407.2V416M825.5 433V436.8M826.5 408.7V416M826.5 433V438.7M827.5 410.5V416M827.5 433V442.4M828.5 406.5V416M828.5 433V441.1M829.5 412.9V416M829.5 433V440.1M830.5 406.7V416M830.5 433V438.9M831.5 411.9V416M833.5 433V440.8M834.5 407.9V416M835.5 408.7V416M835.5 433V438.8M836.5 406.3V416M836.5 433V437.5M837.5 411.5V416M837.5 433V442M838.5 406.9V416M838.5 433V440.4M839.5 411.9V416M839.5 433V440.7M840.5 406.2V416M840.5 433V438.9M841.5 406.7V416M841.5 433V441M842.5 412.1V416M843.5 408.3V416M843.5 433V441.7M844.5 408.5V416M845.5 412V416M845.5 433V438.9M846.5 403.4V416M846.5 433V436.2M847.5 411.5V416M847.5 433V437.4M848.5 407.1V416M848.5 433V436.9M849.5 407.1V416M849.5 433V436.5M850.5 411.2V416M850.5 433V440.7M851.5 412.9V416M851.5 433V440.7M852.5 407.7V416M852.5 433V441.7M853.5 409.9V416M853.5 433V438.9M854.5 433V440M855.5 411.3V416M855.5 433V438.2M856.5 408.6V416M856.5 433V436.8M857.5 411.6V416M857.5 433V436.1M858.5 408V416M858.5 433V440.7M859.5 412.2V416M860.5 407.9V416M860.5 433V439M861.5 410.9V416M861.5 433V437.4M862.5 407.2V416M862.5 433V438.5M863.5 433V438.6M864.5 409.4V416M865.5 409.1V416M865.5 433V441.5M866.5 412.6V416M866.5 433V441.8M867.5 409.1V416M867.5 433V437.3M868.5 412V416M868.5 433V437.4M869.5 412.3V416M869.5 433V441.4M870.5 408.9V416M870.5 433V437.1M871.5 410.9V416M871.5 433V440.8M872.5 409.4V416M872.5 433V438.5M875.5 407.3V416M876.5 407.3V416M877.5 411.2V416M877.5 433V442.9M878.5 409.7V416M878.5 433V437.1M879.5 410.4V416M879.5 433V438.4M880.5 406.4V416M881.5 407.1V416M881.5 433V441.6M882.5 407.5V416M882.5 433V440.8M883.5 411.8V416M883.5 433V438.6M884.5 411.4V416M884.5 433V437.8M885.5 410V416M886.5 413V416M886.5 433V439M887.5 409.5V416M888.5 406.1V416M888.5 433V436.1M889.5 409.2V416M889.5 433V437.6M890.5 409V416M890.5 433V441.5M891.5 406.5V416M891.5 433V440.2M892.5 406.4V416M892.5 433V440.6M893.5 407.3V416M894.5 412V416M895.5 433V440.8M896.5 433V436.5M897.5 410.1V416M897.5 433V440.7M898.5 409.6V416M898.5 433V437.9M899.5 410.3V416M899.5 433V438.5M900.5 433V439.5M901.5 411.2V416M901.5 433V438.3M902.5 407.9V416M902.5 433V439.6M903.5 412.7V416M903.5 433V441.5M904.5 409V416M904.5 433V439.7M905.5 433V441.5M906.5 409.8V416M907.5 409.7V416M907.5 433V443M908.5 433V443.3M909.5 411.3V416M909.5 433V439.2M910.5 406.3V416M910.5 433V439.1M911.5 411.8V416M912.5 411.1V416M912.5 433V441M913.5 433V438M914.5 408.1V416M914.5 433V442.3M915.5 411.5V416M915.5 433V436M916.5 407.6V416M916.5 433V441.9M917.5 433V440.1M918.5 411.1V416M918.5 433V441.2M919.5 405.2V416M919.5 433V439M920.5 409.7V416M920.5 433V438.1M921.5 405.1V416M921.5 433V437.5M922.5 408.5V416M922.5 433V440.7M923.5 406.6V416M923.5 433V437.7M924.5 411V416M924.5 433V438.3M925.5 409V416M925.5 433V436.6M926.5 410V416M926.5 433V441M927.5 408.5V416M927.5 433V437.8M928.5 409.7V416M929.5 402.6V416M929.5 433V441.2M930.5 407.1V416M930.5 433V437.3M931.5 411.6V416M931.5 433V441.9M932.5 409V416M932.5 433V438.5M933.5 408.9V416M933.5 433V438.1M934.5 433V439.3M935.5 409.5V416M935.5 433V437.9M936.5 407.5V416M936.5 433V438.6M937.5 412.5V416M937.5 433V441.5M938.5 409.1V416M938.5 433V441.9M939.5 411V416M939.5 433V437.1M940.5 410.6V416M940.5 433V438.4M941.5 433V439.2M942.5 411.4V416M942.5 433V441.2M943.5 411.4V416M943.5 433V438.1M944.5 406.1V416M944.5 433V443.4M945.5 407.6V416M945.5 433V439.3M946.5 407.6V416M946.5 433V437.6M947.5 409.9V416M947.5 433V439.2M948.5 410.8V416M948.5 433V440.4M949.5 412.2V416M949.5 433V437.5M951.5 407.8V416M951.5 433V441.7M952.5 410.8V416M953.5 407.1V416M954.5 410V416M954.5 433V437.1M955.5 410.9V416M955.5 433V438.1M956.5 409.7V416M957.5 412.3V416M957.5 433V440.2M958.5 410.5V416M958.5 433V439.8M959.5 406.9V416M959.5 433V436.9M960.5 412.3V416M960.5 433V437.3M961.5 433V438.4M963.5 409.2V416M963.5 433V440.6M964.5 403.2V416M964.5 433V437.9M965.5 412.7V416M965.5 433V438.8M966.5 412.8V416M967.5 410V416M968.5 408.1V416M968.5 433V441.5M969.5 407.4V416M969.5 433V440.2M970.5 407.9V416M970.5 433V441.2M971.5 433V442.5M972.5 406.3V416M972.5 433V440.2M973.5 409.4V416M974.5 411.1V416M974.5 433V439.4M975.5 406.1V416M975.5 433V439.6M976.5 406.6V416M976.5 433V440.4M977.5 411.6V416M977.5 433V437M978.5 405.3V416M978.5 433V440.3M979.5 409.4V416M979.5 433V439.9M980.5 407.3V416M980.5 433V438.6M981.5 410V416M981.5 433V436.1M982.5 408.9V416M982.5 433V441.2M983.5 407.2V416M983.5 433V437.4M984.5 409.7V416M984.5 433V441.2M985.5 406.1V416M985.5 433V436.4M986.5 408.3V416M987.5 412.3V416M987.5 433V441.6M988.5 410.6V416M988.5 433V440.9M989.5 406.4V416M989.5 433V436.7M990.5 410.1V416M990.5 433V437M991.5 433V437.5M992.5 411.9V416M993.5 410.8V416M993.5 433V438.4M994.5 410.2V416M994.5 433V441.5M995.5 408.2V416M995.5 433V441.3M996.5 409.3V416M996.5 433V440.1M997.5 408.9V416M997.5 433V440.9M998.5 411V416M998.5 433V440.7M999.5 411.5V416M999.5 433V439.2M1000.5 411.3V416M1000.5 433V436.3M1001.5 412.2V416M1002.5 412.3V416M1003.5 408.2V416M1003.5 433V444.4M1004.5 411.7V416M1004.5 433V437M1005.5 411.7V416M1005.5 433V437.5M1006.5 407.9V416M1006.5 433V442.3M1007.5 408.8V416M1007.5 433V441.1M1008.5 407.4V416M1008.5 433V438.6M1009.5 412.1V416M1009.5 433V438.4M1010.5 406.5V416M1010.5 433V439.2M1011.5 407.7V416M1011.5 433V438.4M1012.5 407.4V416M1012.5 433V436.9M1013.5 410.6V416M1013.5 433V440.9M1014.5 407.8V416M1014.5 433V438.4M1015.5 410.5V416M1015.5 433V438.6M1016.5 433V440.9M1017.5 410.1V416M1018.5 412V416M1018.5 433V440.2M1019.5 411.3V416M1019.5 433V440.6M1020.5 433V438.4M1021.5 433V440.1M1022.5 407.4V416M1022.5 433V438.7M1023.5 402.7V416M1023.5 433V438.9M1024.5 408V416M1025.5 412.4V416M1025.5 433V437.9M1026.5 406.6V416M1026.5 433V437.9M1028.5 406.7V416M1028.5 433V436.8M1029.5 406.3V416M1029.5 433V439.8M1030.5 408.3V416M1030.5 433V440.4M1031.5 409.8V416M1031.5 433V439.7M1033.5 409.6V416M1033.5 433V441.9M1034.5 410.6V416M1034.5 433V438M1035.5 411.8V416M1035.5 433V436.4M1037.5 410.4V416M1038.5 412.8V416M1038.5 433V438.2M1040.5 405.6V416M1041.5 410.4V416M1041.5 433V443.6M1042.5 408.1V416M1042.5 433V442M1043.5 406.2V416M1043.5 433V439.1M1044.5 407.1V416M1044.5 433V437.2M1045.5 405.3V416M1045.5 433V437.1M1046.5 410.1V416M1046.5 433V437.5M1047.5 433V436M1048.5 412.9V416M1048.5 433V441.9M1049.5 412.2V416M1050.5 410.8V416M1050.5 433V440.2M1051.5 412.3V416M1052.5 407.8V416M1052.5 433V439.7M1053.5 408.2V416M1053.5 433V438.8M1054.5 433V438M1055.5 411.3V416M1055.5 433V441.6M1056.5 433V438.1M1057.5 409.7V416M1058.5 412.8V416M1058.5 433V436.2M1059.5 407V416M1059.5 433V439.7M1060.5 413V416M1061.5 412.7V416M1061.5 433V436.7M1062.5 410.1V416M1063.5 433V440.3M1064.5 408.3V416M1064.5 433V441.5M1065.5 406.6V416M1066.5 413V416M1066.5 433V440.9M1067.5 409.5V416M1067.5 433V439.1M1068.5 406.8V416M1068.5 433V440.6M1069.5 433V441.6M1070.5 411.4V416M1071.5 406V416M1071.5 433V440.2M1072.5 410.1V416M1073.5 407.1V416M1073.5 433V439.8M1074.5 409.3V416M1074.5 433V439.7M1075.5 408.7V416M1075.5 433V441.1M1076.5 406.5V416M1076.5 433V436.4M1077.5 406.6V416M1077.5 433V440.7M1078.5 433V437.6M1079.5 410.1V416M1079.5 433V437.6M1080.5 411.2V416M1080.5 433V438.2M1081.5 407.8V416M1081.5 433V441.4M1082.5 404.8V416M1082.5 433V436.7M1083.5 408.6V416M1083.5 433V436.1M1084.5 433V440.6M1085.5 407V416M1085.5 433V441.6M1086.5 411.4V416M1086.5 433V438.2M1087.5 408.5V416M1087.5 433V437.3M1088.5 410.6V416M1089.5 412.4V416M1089.5 433V438.4M1090.5 412.4V416M1090.5 433V439.2M1091.5 410V416M1092.5 409.2V416M1093.5 433V437.3M1094.5 407.5V416M1094.5 433V438.6M1096.5 411.2V416M1097.5 408.6V416M1097.5 433V439.8M1098.5 411.8V416M1098.5 433V439.2M1099.5 409.1V416M1099.5 433V437.9M1100.5 412.1V416M1100.5 433V438.4M1101.5 409V416M1101.5 433V441M1102.5 433V442.5M1103.5 408.5V416M1103.5 433V437.7M1104.5 409.6V416M1104.5 433V442.4M1105.5 408V416M1106.5 407.3V416M1106.5 433V437.5M1107.5 411.9V416M1108.5 409.6V416M1108.5 433V441.5M1109.5 407V416M1109.5 433V441.2M1110.5 409.4V416M1110.5 433V436.8M1111.5 407.2V416M1112.5 410.3V416M1112.5 433V443.5M1114.5 412.3V416M1114.5 433V437.1M1115.5 405.7V416M1115.5 433V441.6M1116.5 412.4V416M1116.5 433V441.8M1117.5 409.4V416M1117.5 433V438.7M1118.5 411.9V416M1118.5 433V439.8M1119.5 433V440.8M1120.5 433V436.7M1121.5 408.6V416M1121.5 433V441.8M1122.5 433V440.8M1123.5 413V416M1123.5 433V440M1124.5 411.4V416M1124.5 433V439.3M1125.5 411.3V416M1125.5 433V438.6M1126.5 411.7V416M1126.5 433V442.3M1127.5 408.8V416M1127.5 433V437.7M1128.5 411.4V416M1128.5 433V437.5M1129.5 433V436.4M1130.5 433V438M1131.5 410.4V416M1131.5 433V436.6M1132.5 408.5V416M1132.5 433V441.5M1133.5 409.8V416M1133.5 433V438.1M1134.5 409.7V416M1134.5 433V436.2M1135.5 407.7V416M1135.5 433V440.1M1136.5 433V437M1137.5 433V442.7M1138.5 407.1V416M1138.5 433V438.3M1139.5 433V443.6M1140.5 408.8V416M1140.5 433V439.9M1141.5 412.5V416M1142.5 412.4V416M1143.5 406.7V416M1143.5 433V440.3M1144.5 408V416M1144.5 433V441M1145.5 433V440.6M1146.5 406.9V416M1146.5 433V439.7M1147.5 411.7V416M1147.5 433V441.1M1148.5 409.6V416M1148.5 433V442.1M1149.5 433V436.9M1150.5 408.4V416M1150.5 433V441M1151.5 411.2V416M1151.5 433V441.3M1152.5 405.4V416M1152.5 433V439.2M1153.5 408.3V416M1154.5 433V440.5M1155.5 409.5V416M1155.5 433V437.7M1156.5 403.2V416M1156.5 433V438.3M1157.5 406.9V416M1157.5 433V440.7M1158.5 412.5V416M1158.5 433V441.8M1159.5 409.1V416M1159.5 433V441.8M1160.5 433V439.3M1161.5 408.3V416M1161.5 433V441.2M1162.5 433V436.4M1163.5 433V438.3M1164.5 409.9V416M1164.5 433V439.2M1165.5 409.5V416M1165.5 433V445.1M1166.5 407.4V416M1166.5 433V440.5M1167.5 409.4V416M1167.5 433V436.8M1168.5 412.7V416M1169.5 410V416M1169.5 433V440M1170.5 409.8V416M1170.5 433V439M1171.5 411.7V416M1171.5 433V441.4M1172.5 412V416M1172.5 433V440.9M1173.5 408.4V416M1173.5 433V441.7M1174.5 407.6V416M1174.5 433V439.1M1175.5 408.2V416M1177.5 408.9V416M1178.5 408.7V416M1178.5 433V439.3M1179.5 433V441.3M1180.5 407.2V416M1180.5 433V439.9M1181.5 407.3V416M1181.5 433V440.8M1182.5 412.4V416M1182.5 433V438.8M1183.5 410.1V416M1184.5 410.6V416M1185.5 410.4V416M1185.5 433V436.2M1186.5 412.2V416M1186.5 433V439.7M1187.5 412.9V416M1188.5 407.2V416M1188.5 433V436.5M1189.5 411.8V416M1189.5 433V441.7M1190.5 406.7V416M1190.5 433V437.6M1191.5 433V440.9M1192.5 409.8V416M1192.5 433V439.2M1193.5 406.4V416M1193.5 433V441.3M1194.5 408.3V416M1194.5 433V441.7M1195.5 410.1V416M1195.5 433V441.6M1196.5 410.2V416M1197.5 433V440.5M1198.5 433V438M1199.5 410.9V416M1199.5 433V437.3M1200.5 408.4V416M1201.5 409.2V416M1201.5 433V437.2M1202.5 412.7V416M1202.5 433V437.8M1203.5 406.7V416M1203.5 433V436.5M1204.5 408.7V416M1204.5 433V437.1M1205.5 410.1V416M1206.5 407.8V416M1206.5 433V438.3M1207.5 411.8V416M1207.5 433V441.1M1208.5 433V441.7M1209.5 411.9V416M1209.5 433V440M1210.5 407.8V416M1210.5 433V437M1211.5 409.3V416M1211.5 433V437.2M1212.5 409V416M1212.5 433V439M1213.5 410.2V416M1213.5 433V437.8M1214.5 409.2V416M1214.5 433V438.9M1215.5 411.2V416M1215.5 433V437.4M1216.5 433V437.6M1217.5 433V436.7M1218.5 411V416M1218.5 433V440.9M1219.5 407V416M1219.5 433V437.5M1220.5 406.7V416M1221.5 407.9V416M1221.5 433V439M1222.5 407.1V416M1222.5 433V439.4M1223.5 406.2V416M1223.5 433V437.5M1224.5 407.4V416M1225.5 409.8V416M1225.5 433V437.7M1226.5 407.2V416M1226.5 433V437.2M1227.5 412.5V416M1227.5 433V440.1M1228.5 407.8V416M1228.5 433V439M1229.5 412.1V416M1229.5 433V440.8M1230.5 433V438.3M1231.5 433V438.5M1232.5 433V437.1M1233.5 404.7V416M1233.5 433V440.7M1234.5 411.1V416M1234.5 433V439.2M1235.5 411.1V416M1235.5 433V443M1238.5 412.5V416M1238.5 433V437.5M1239.5 412.1V416M1239.5 433V436.6M1240.5 407.4V416M1240.5 433V441.1M1241.5 433V441.5M1242.5 405.8V416M1242.5 433V437.4M1243.5 433V440.1M1244.5 433V439.1M1245.5 409.3V416M1245.5 433V436M1246.5 411.5V416M1246.5 433V438.8M1247.5 433V440.7M1248.5 410.8V416M1248.5 433V442M1249.5 406.5V416M1250.5 406.9V416M1250.5 433V440.8M1251.5 407.9V416M1251.5 433V437.1M1252.5 410.6V416M1252.5 433V439.9M1253.5 407.4V416M1253.5 433V441.3M1254.5 412V416M1254.5 433V436.3M1255.5 433V443.4M1256.5 407.3V416M1256.5 433V436.2M1257.5 411.8V416M1257.5 433V441.8M1258.5 404.2V416M1258.5 433V440.8M1259.5 407.9V416M1259.5 433V437.7M1260.5 411.9V416M1260.5 433V437.5M1261.5 409.1V416M1261.5 433V436.1M1262.5 409.4V416M1262.5 433V439.1M1263.5 409.2V416M1263.5 433V437.3M1264.5 433V443.1M1265.5 407.5V416M1266.5 408.4V416M1266.5 433V438.4" stroke="#22e622" stroke-width="1"/>
<path d="M672 429.5L673.9 419.5M675.8 419.5L677.7 429.5M679.7 429.5L681.6 419.5M683.5 419.5L685.4 429.5M687.4 429.5L689.3 419.5M691.2 419.5L693.1 429.5M695 429.5L696.9 419.5M698.9 419.5L700.8 429.5M702.7 429.5L704.6 419.5M706.6 419.5L708.5 429.5M710.4 429.5L712.3 419.5M714.2 419.5L716.1 429.5M718.1 429.5L720 419.5M721.9 419.5L723.8 429.5M725.8 429.5L727.7 419.5M729.6 419.5L731.5 429.5M733.4 429.5L735.3 419.5M737.3 419.5L739.2 429.5M741.1 429.5L743 419.5M745 419.5L746.9 429.5M748.8 429.5L750.7 419.5M752.6 419.5L754.5 429.5M756.5 429.5L758.4 419.5M760.3 419.5L762.2 429.5M764.2 429.5L766.1 419.5M768 419.5L769.9 429.5M771.8 429.5L773.7 419.5M775.7 419.5L777.6 429.5M779.5 429.5L781.4 419.5M783.4 419.5L785.3 429.5M787.2 429.5L789.1 419.5M791 419.5L792.9 429.5M794.9 429.5L796.8 419.5M798.7 419.5L800.6 429.5M802.6 429.5L804.5 419.5M806.4 419.5L808.3 429.5M810.2 429.5L812.1 419.5M814.1 419.5L816 429.5M817.9 429.5L819.8 419.5M821.8 419.5L823.7 429.5M825.6 429.5L827.5 419.5M829.4 419.5L831.3 429.5M833.3 429.5L835.2 419.5M837.1 419.5L839 429.5M841 429.5L842.9 419.5M844.8 419.5L846.7 429.5M848.6 429.5L850.5 419.5M852.5 419.5L854.4 429.5M856.3 429.5L858.2 419.5M860.2 419.5L862.1 429.5M864 429.5L865.9 419.5M867.8 419.5L869.7 429.5M871.7 429.5L873.6 419.5M875.5 419.5L877.4 429.5M879.4 429.5L881.3 419.5M883.2 419.5L885.1 429.5M887 429.5L888.9 419.5M890.9 419.5L892.8 429.5M894.7 429.5L896.6 419.5M898.6 419.5L900.5 429.5M902.4 429.5L904.3 419.5M906.2 419.5L908.1 429.5M910.1 429.5L912 419.5M913.9 419.5L915.8 429.5M917.8 429.5L919.7 419.5M921.6 419.5L923.5 429.5M925.4 429.5L927.3 419.5M929.3 419.5L931.2 429.5M933.1 429.5L935 419.5M937 419.5L938.9 429.5M940.8 429.5L942.7 419.5M944.6 419.5L946.5 429.5M948.5 429.5L950.4 419.5M952.3 419.5L954.2 429.5M956.2 429.5L958.1 419.5M960 419.5L961.9 429.5M963.8 429.5L965.7 419.5M967.7 419.5L969.6 429.5M971.5 429.5L973.4 419.5M975.4 419.5L977.3 429.5M979.2 429.5L981.1 419.5M983 419.5L984.9 429.5M986.9 429.5L988.8 419.5M990.7 419.5L992.6 429.5M994.6 429.5L996.5 419.5M998.4 419.5L1000.3 429.5M1002.2 429.5L1004.1 419.5M1006.1 419.5L1008 429.5M1009.9 429.5L1011.8 419.5M1013.8 419.5L1015.7 429.5M1017.6 429.5L1019.5 419.5M1021.4 419.5L1023.3 429.5M1025.3 429.5L1027.2 419.5M1029.1 419.5L1031 429.5M1033 429.5L1034.9 419.5M1036.8 419.5L1038.7 429.5M1040.6 429.5L1042.5 419.5M1044.5 419.5L1046.4 429.5M1048.3 429.5L1050.2 419.5M1052.2 419.5L1054.1 429.5M1056 429.5L1057.9 419.5M1059.8 419.5L1061.7 429.5M1063.7 429.5L1065.6 419.5M1067.5 419.5L1069.4 429.5M1071.4 429.5L1073.3 419.5M1075.2 419.5L1077.1 429.5M1079 429.5L1080.9 419.5M1082.9 419.5L1084.8 429.5M1086.7 429.5L1088.6 419.5M1090.6 419.5L1092.5 429.5M1094.4 429.5L1096.3 419.5M1098.2 419.5L1100.1 429.5M1102.1 429.5L1104 419.5M1105.9 419.5L1107.8 429.5M1109.8 429.5L1111.7 419.5M1113.6 419.5L1115.5 429.5M1117.4 429.5L1119.3 419.5M1121.3 419.5L1123.2 429.5M1125.1 429.5L1127 419.5M1129 419.5L1130.9 429.5M1132.8 429.5L1134.7 419.5M1136.6 419.5L1138.5 429.5M1140.5 429.5L1142.4 419.5M1144.3 419.5L1146.2 429.5M1148.2 429.5L1150.1 419.5M1152 419.5L1153.9 429.5M1155.8 429.5L1157.7 419.5M1159.7 419.5L1161.6 429.5M1163.5 429.5L1165.4 419.5M1167.4 419.5L1169.3 429.5M1171.2 429.5L1173.1 419.5M1175 419.5L1176.9 429.5M1178.9 429.5L1180.8 419.5M1182.7 419.5L1184.6 429.5M1186.6 429.5L1188.5 419.5M1190.4 419.5L1192.3 429.5M1194.2 429.5L1196.1 419.5M1198.1 419.5L1200 429.5M1201.9 429.5L1203.8 419.5M1205.8 419.5L1207.7 429.5M1209.6 429.5L1211.5 419.5M1213.4 419.5L1215.3 429.5M1217.3 429.5L1219.2 419.5M1221.1 419.5L1223 429.5M1225 429.5L1226.9 419.5M1228.8 419.5L1230.7 429.5M1232.6 429.5L1234.5 419.5M1236.5 419.5L1238.4 429.5M1240.3 429.5L1242.2 419.5M1244.2 419.5L1246.1 429.5M1248 429.5L1249.9 419.5M1251.8 419.5L1253.7 429.5M1255.7 429.5L1257.6 419.5M1259.5 419.5L1261.4 429.5M1263.4 429.5L1265.3 419.5" stroke="#c0ffc0" stroke-width="1.2" opacity="0.6"/>
<rect x="672" y="419" width="595" height="11" fill="#70ff70" opacity="0.28"/>
<path d="M673.5 355V412M679.5 390V412" stroke="#22e622" stroke-width="1"/>
</g>
<polygon points="68,140 74.5,140 68,146" fill="#fff"/>
<polygon points="68,295 74.5,295 68,301" fill="#fff"/>
<polygon points="68,422 74.5,422 68,428" fill="#fff"/>
<polygon points="1268,152 1268,158 1262,158" fill="#fff"/>
<polygon points="1268,339.5 1268,345.5 1262,345.5" fill="#fff"/>
<polygon points="1268,422.5 1268,428.5 1262,428.5" fill="#fff"/>
<g stroke="#fff" stroke-width="1" fill="none">
<path d="M957 327.5H1054M1009 327.5L1067 342.5"/>
<path d="M1179 259.5H1256M1219 259.5L1267 274"/>
</g>
</svg>
<div class="a" style="top:6.64px;font-size:12px;color:#e8e800;right:1214.7px;letter-spacing:0.8px;">8 A</div>
<div class="a" style="top:66.84px;font-size:12px;color:#e8e800;right:1214.7px;letter-spacing:0.8px;">6 A</div>
<div class="a" style="top:135.34px;font-size:12px;color:#e8e800;right:1214.7px;letter-spacing:0.8px;">4 A</div>
<div class="a" style="top:201.84px;font-size:12px;color:#e8e800;right:1214.7px;letter-spacing:0.8px;">2 A</div>
<div class="a" style="top:270.34px;font-size:12px;color:#e8e800;right:1214.7px;letter-spacing:0.8px;">0 A</div>
<div class="a" style="top:337.84px;font-size:12px;color:#e8e800;right:1214.7px;letter-spacing:0.8px;">-2 A</div>
<div class="a" style="top:405.34px;font-size:12px;color:#e8e800;right:1214.7px;letter-spacing:0.8px;">-4 A</div>
<div class="a" style="top:472.84px;font-size:12px;color:#e8e800;right:1214.7px;letter-spacing:0.8px;">-6 A</div>
<div class="a" style="top:533.14px;font-size:12px;color:#e8e800;right:1214.7px;letter-spacing:0.8px;">-8 A</div>
<div class="a" style="top:548.84px;font-size:12px;color:#e8e800;left:68px;letter-spacing:0;">-1.15 s</div>
<div class="a" style="top:548.84px;font-size:12px;color:#e8e800;left:88.5px;width:200px;text-align:center;letter-spacing:0;">-1.05 s</div>
<div class="a" style="top:548.84px;font-size:12px;color:#e8e800;left:208.5px;width:200px;text-align:center;letter-spacing:0;">-950 ms</div>
<div class="a" style="top:548.84px;font-size:12px;color:#e8e800;left:328.5px;width:200px;text-align:center;letter-spacing:0;">-850 ms</div>
<div class="a" style="top:548.84px;font-size:12px;color:#e8e800;left:448.5px;width:200px;text-align:center;letter-spacing:0;">-750 ms</div>
<div class="a" style="top:548.84px;font-size:12px;color:#e8e800;left:568.5px;width:200px;text-align:center;letter-spacing:0;">-650 ms</div>
<div class="a" style="top:548.84px;font-size:12px;color:#e8e800;left:688.5px;width:200px;text-align:center;letter-spacing:0;">-550 ms</div>
<div class="a" style="top:548.84px;font-size:12px;color:#e8e800;left:808.5px;width:200px;text-align:center;letter-spacing:0;">-450 ms</div>
<div class="a" style="top:548.84px;font-size:12px;color:#e8e800;left:928.5px;width:200px;text-align:center;letter-spacing:0;">-350 ms</div>
<div class="a" style="top:548.84px;font-size:12px;color:#e8e800;left:1048.5px;width:200px;text-align:center;letter-spacing:0;">-250 ms</div>
<div class="a" style="top:548.84px;font-size:12px;color:#e8e800;right:10.5px;letter-spacing:0;">-150 ms</div>
<svg style="left:1268px;top:545px" width="10" height="10" viewBox="0 0 10 10"><path d="M0.5 5H8M5 2L8 5L5 8" stroke="#e8e800" stroke-width="1.2" fill="none"/></svg>
<div class="a" style="top:164.61px;font-size:10.5px;color:#00b400;left:55px;">C4</div>
<div class="a" style="left:58px;top:175px;width:10px;height:2px;background:#00b000"></div>
<div class="a" style="left:52px;top:262px;width:16px;height:11px;background:#e8e800;border-radius:2px"></div>
<div class="a" style="top:263.04px;font-size:10px;color:#303000;left:54px;">C1</div>
<div class="a" style="left:55px;top:274px;width:13px;height:2px;background:#e8e800"></div>
<div class="a" style="top:431.11px;font-size:10.5px;color:#d0f0ff;left:55px;">C5</div>
<div class="a" style="left:58px;top:441px;width:10px;height:2px;background:#d0ffd0"></div>
<div class="a" style="top:532.11px;font-size:10.5px;color:#fff;left:71px;">C5</div>
<div class="a" style="top:532.11px;font-size:10.5px;color:#fff;left:1251px;">C5</div>
<div class="a" style="top:316.11px;font-size:10.5px;color:#fff;left:957px;letter-spacing:0.55px;">AOUT1_CURRENT</div>
<div class="a" style="top:248.61px;font-size:10.5px;color:#fff;left:1179px;letter-spacing:-0.2px;">TorqueCurrent</div>
<div class="a" style="top:248.61px;font-size:10.5px;color:#ddd;left:1199px;opacity:.75;">MotorSensor</div>
<div class="a" style="top:578.12px;font-size:13.8px;color:#fff;font-weight:bold;left:3px;">Measure</div>
<div class="a" style="left:1px;top:591px;width:1261px;height:1px;background:#888"></div>
<div class="a" style="left:1px;top:592px;width:1261px;height:15px;background:#1c1c1c"></div>
<div class="a" style="top:594.12px;font-size:13.8px;left:3px;">value</div>
<div class="a" style="top:609.62px;font-size:13.8px;left:3px;">status</div>
<div class="a" style="top:578.22px;font-size:13.8px;color:#fff;right:1084.5px;">P1:max(C1)</div>
<div class="a" style="top:578.22px;font-size:13.8px;color:#fff;right:987.5px;">P2:pkpk(C4)</div>
<div class="a" style="top:578.22px;font-size:13.8px;color:#fff;right:890.5px;">P3:mean(C5)</div>
<div class="a" style="top:578.22px;font-size:13.8px;color:#fff;right:793.5px;">P4:min(C4)</div>
<div class="a" style="top:578.22px;font-size:13.8px;color:#fff;right:696.5px;">P5:max(C4)</div>
<div class="a" style="top:578.22px;font-size:13.8px;color:#707070;right:599.5px;">P6:duty(Z2)</div>
<div class="a" style="top:578.22px;font-size:13.8px;color:#707070;right:502.5px;">P7:freq@lv(C2)</div>
<div class="a" style="top:578.22px;font-size:13.8px;color:#707070;right:405.5px;">P8:- - -</div>
<div class="a" style="top:578.22px;font-size:13.8px;color:#707070;right:308.5px;">P9:- - -</div>
<div class="a" style="top:578.22px;font-size:13.8px;color:#707070;right:211.5px;">P10:- - -</div>
<div class="a" style="top:578.22px;font-size:13.8px;color:#707070;right:114.5px;">P11:- - -</div>
<div class="a" style="top:578.22px;font-size:13.8px;color:#707070;right:17.5px;">P12:- - -</div>
<div class="a" style="top:594.12px;font-size:13.8px;color:#fff;right:1084.5px;">2.27 A</div>
<svg style="left:182.0px;top:610px" width="12" height="11" viewBox="0 0 12 11"><path d="M1.3 5.2L4.6 8.8L10.8 1.2" stroke="#00e400" stroke-width="2.6" fill="none"/></svg>
<div class="a" style="top:594.12px;font-size:13.8px;color:#fff;right:987.5px;">1.924 V</div>
<svg style="left:279.0px;top:610px" width="12" height="11" viewBox="0 0 12 11"><path d="M1.3 5.2L4.6 8.8L10.8 1.2" stroke="#00e400" stroke-width="2.6" fill="none"/></svg>
<div class="a" style="top:594.12px;font-size:13.8px;color:#fff;right:890.5px;">424 mA</div>
<svg style="left:376.0px;top:610px" width="12" height="11" viewBox="0 0 12 11"><path d="M1.3 5.2L4.6 8.8L10.8 1.2" stroke="#00e400" stroke-width="2.6" fill="none"/></svg>
<div class="a" style="top:594.12px;font-size:13.8px;color:#fff;right:793.5px;">-424 mV</div>
<svg style="left:473.0px;top:610px" width="12" height="11" viewBox="0 0 12 11"><path d="M1.3 5.2L4.6 8.8L10.8 1.2" stroke="#00e400" stroke-width="2.6" fill="none"/></svg>
<div class="a" style="top:594.12px;font-size:13.8px;color:#fff;right:696.5px;">1.50 V</div>
<svg style="left:570.0px;top:610px" width="12" height="11" viewBox="0 0 12 11"><path d="M1.3 5.2L4.6 8.8L10.8 1.2" stroke="#00e400" stroke-width="2.6" fill="none"/></svg>
<div class="a" style="left:2px;top:624px;width:97px;height:16px;background:#ffff00"></div><div class="a" style="left:2px;top:640px;width:97px;height:67px;background:#2c4c6a"></div><div class="a" style="top:625.82px;font-size:13.8px;color:#302000;left:4.7px;">C1</div><div class="a" style="left:48px;top:625px;width:26px;height:14px;background:#000;border-radius:3px;font-size:11.5px;line-height:14px;text-align:center;color:#e8e800;letter-spacing:-0.3px">BwL</div><div class="a" style="left:75px;top:625px;width:22px;height:14px;background:#000;border-radius:3px;font-size:11.5px;line-height:14px;text-align:center;color:#e8e800;letter-spacing:-0.3px">DC</div><div class="a" style="top:642.82px;font-size:13.8px;color:#fff;right:1182.5px;">2.00 A/div</div><div class="a" style="top:658.02px;font-size:13.8px;color:#fff;right:1182.5px;">0.0 mA ofst</div><div class="a" style="top:676.42px;font-size:13.8px;color:#fff;right:1182.5px;">-784.0 mA</div><div class="a" style="top:691.52px;font-size:13.8px;color:#fff;right:1182.5px;">-1.9880 A</div><svg style="left:6px;top:678px" width="8" height="30" viewBox="0 0 8 30"><path d="M3.5 1V12.5M1 10L3.5 12.5L6 10M3.5 16V27.5M1 18.5L3.5 16L6 18.5" stroke="#d8d8a0" stroke-width="1" fill="none"/></svg>
<div class="a" style="left:1px;top:623px;width:99px;height:84px;border-style:solid;border-color:#2a90f0;border-width:1px 1px 2px 2px"></div>
<div class="a" style="left:102px;top:624px;width:97px;height:16px;background:#00c000"></div><div class="a" style="left:102px;top:640px;width:97px;height:67px;background:#444"></div><div class="a" style="top:625.82px;font-size:13.8px;color:#002000;left:104.7px;">C4</div><div class="a" style="left:133px;top:625px;width:26px;height:14px;background:#000;border-radius:3px;font-size:11.5px;line-height:14px;text-align:center;color:#00c000;letter-spacing:-0.3px">BwL</div><div class="a" style="left:160px;top:625px;width:37px;height:14px;background:#000;border-radius:3px;font-size:11.5px;line-height:14px;text-align:center;color:#00c000;letter-spacing:-0.3px">DC1M</div><div class="a" style="top:642.82px;font-size:13.8px;color:#fff;right:1082.5px;">2.00 V/div</div><div class="a" style="top:658.02px;font-size:13.8px;color:#fff;right:1082.5px;">2.9000 V</div><div class="a" style="top:676.42px;font-size:13.8px;color:#fff;right:1082.5px;">899.7 mV</div><div class="a" style="top:691.52px;font-size:13.8px;color:#fff;right:1082.5px;">668.0 mV</div><svg style="left:106px;top:678px" width="8" height="30" viewBox="0 0 8 30"><path d="M3.5 1V12.5M1 10L3.5 12.5L6 10M3.5 16V27.5M1 18.5L3.5 16L6 18.5" stroke="#d8d8a0" stroke-width="1" fill="none"/></svg>
<div class="a" style="left:202px;top:624px;width:97px;height:16px;background:#d8ffd8"></div><div class="a" style="left:202px;top:640px;width:97px;height:67px;background:#444"></div><div class="a" style="top:625.82px;font-size:13.8px;color:#202040;left:204.7px;">C5</div><div class="a" style="left:248px;top:625px;width:26px;height:14px;background:#000;border-radius:3px;font-size:11.5px;line-height:14px;text-align:center;color:#d8ffd8;letter-spacing:-0.3px">BwL</div><div class="a" style="left:275px;top:625px;width:22px;height:14px;background:#000;border-radius:3px;font-size:11.5px;line-height:14px;text-align:center;color:#d8ffd8;letter-spacing:-0.3px">DC</div><div class="a" style="top:642.82px;font-size:13.8px;color:#fff;right:982.5px;">2.00 A/div</div><div class="a" style="top:658.02px;font-size:13.8px;color:#fff;right:982.5px;">-4.9500 A</div><div class="a" style="top:676.42px;font-size:13.8px;color:#fff;right:982.5px;">398.0 mA</div><div class="a" style="top:691.52px;font-size:13.8px;color:#fff;right:982.5px;">526.0 mA</div><svg style="left:206px;top:678px" width="8" height="30" viewBox="0 0 8 30"><path d="M3.5 1V12.5M1 10L3.5 12.5L6 10M3.5 16V27.5M1 18.5L3.5 16L6 18.5" stroke="#d8d8a0" stroke-width="1" fill="none"/></svg>
<div class="a" style="left:302px;top:624px;width:97px;height:84px;border:1px dashed #ddd"></div>
<div class="a" style="left:342px;top:664px;width:14px;height:2px;background:#fff"></div>
<div class="a" style="left:348px;top:658px;width:2px;height:14px;background:#fff"></div>
<div class="a" style="left:1001px;top:624px;width:57px;height:15px;background:#00e400"></div>
<div class="a" style="top:626.12px;font-size:13.8px;color:#000;font-weight:bold;left:930px;width:200px;text-align:center;">HD</div>
<div class="a" style="left:1001px;top:639px;width:57px;height:34px;background:#444"></div>
<div class="a" style="top:649.02px;font-size:13.8px;color:#fff;left:930.5px;width:200px;text-align:center;">12 Bits</div>
<div class="a" style="left:1061px;top:624px;width:112px;height:15px;background:#fff"></div>
<div class="a" style="top:626.02px;font-size:13.8px;color:#000;left:1064px;">Tbase</div>
<div class="a" style="top:626.02px;font-size:13.8px;color:#000;right:108.5px;">650 ms</div>
<div class="a" style="left:1061px;top:639px;width:112px;height:34px;background:#444"></div>
<div class="a" style="top:642.22px;font-size:13.8px;color:#fff;right:107.5px;">100 ms/div</div>
<div class="a" style="top:657.72px;font-size:13.8px;left:1064px;">50 MS</div>
<div class="a" style="top:657.72px;font-size:13.8px;color:#fff;right:107.5px;">50 MS/s</div>
<div class="a" style="left:1176px;top:624px;width:97px;height:15px;background:#fff"></div>
<div class="a" style="top:626.02px;font-size:13.8px;color:#000;left:1179px;">Trigger</div>
<div class="a" style="left:1227px;top:625px;width:19px;height:13px;background:#000;border-radius:3px;color:#fff;font-size:10.5px;line-height:13px;text-align:center">C3</div>
<div class="a" style="left:1249px;top:625px;width:21px;height:13px;background:#000;border-radius:3px;color:#fff;font-size:10.5px;line-height:13px;text-align:center">DC</div>
<div class="a" style="left:1176px;top:639px;width:97px;height:34px;background:#444"></div>
<div class="a" style="top:642.22px;font-size:13.8px;left:1179px;">Stop</div>
<div class="a" style="top:642.22px;font-size:13.8px;color:#fff;right:8px;">0.00 A</div>
<div class="a" style="top:657.72px;font-size:13.8px;left:1179px;">Edge</div>
<div class="a" style="top:657.72px;font-size:13.8px;color:#fff;right:8px;">Positive</div>
<div class="a" style="top:674.52px;font-size:13.8px;left:1007px;">X1=</div>
<div class="a" style="top:674.52px;font-size:13.8px;color:#fff;right:160.5px;letter-spacing:-0.6px;">-1.1500000 s</div>
<div class="a" style="top:690.02px;font-size:13.8px;left:1007px;">X2=</div>
<div class="a" style="top:690.02px;font-size:13.8px;color:#fff;right:160.5px;letter-spacing:-0.6px;">-150.0002 ms</div>
<div class="a" style="top:674.52px;font-size:13.8px;color:#fff;right:115.5px;">&#916;X=</div>
<div class="a" style="top:690.02px;font-size:13.8px;color:#fff;right:115.5px;">1/&#916;X=</div>
<div class="a" style="top:674.52px;font-size:13.8px;color:#fff;left:1178px;letter-spacing:-0.6px;">999.9998 ms</div>
<div class="a" style="top:690.02px;font-size:13.8px;color:#fff;left:1175px;letter-spacing:-0.6px;">1.0000002 Hz</div>
<div class="a" style="left:0;top:708px;width:1279px;height:2px;background:#4a4a4a"></div>
<div class="a" style="top:710.92px;font-size:12.5px;color:#fff;font-weight:bold;left:4px;letter-spacing:0.2px;">TELEDYNE</div>
<div class="a" style="top:711.77px;font-size:11.5px;color:#ddd;left:76px;letter-spacing:0.3px;">LECROY</div>
<div class="a" style="top:710.92px;font-size:12.5px;color:#fff;left:1132px;">11/1/2022 11:50:00 AM</div>
</body></html>
